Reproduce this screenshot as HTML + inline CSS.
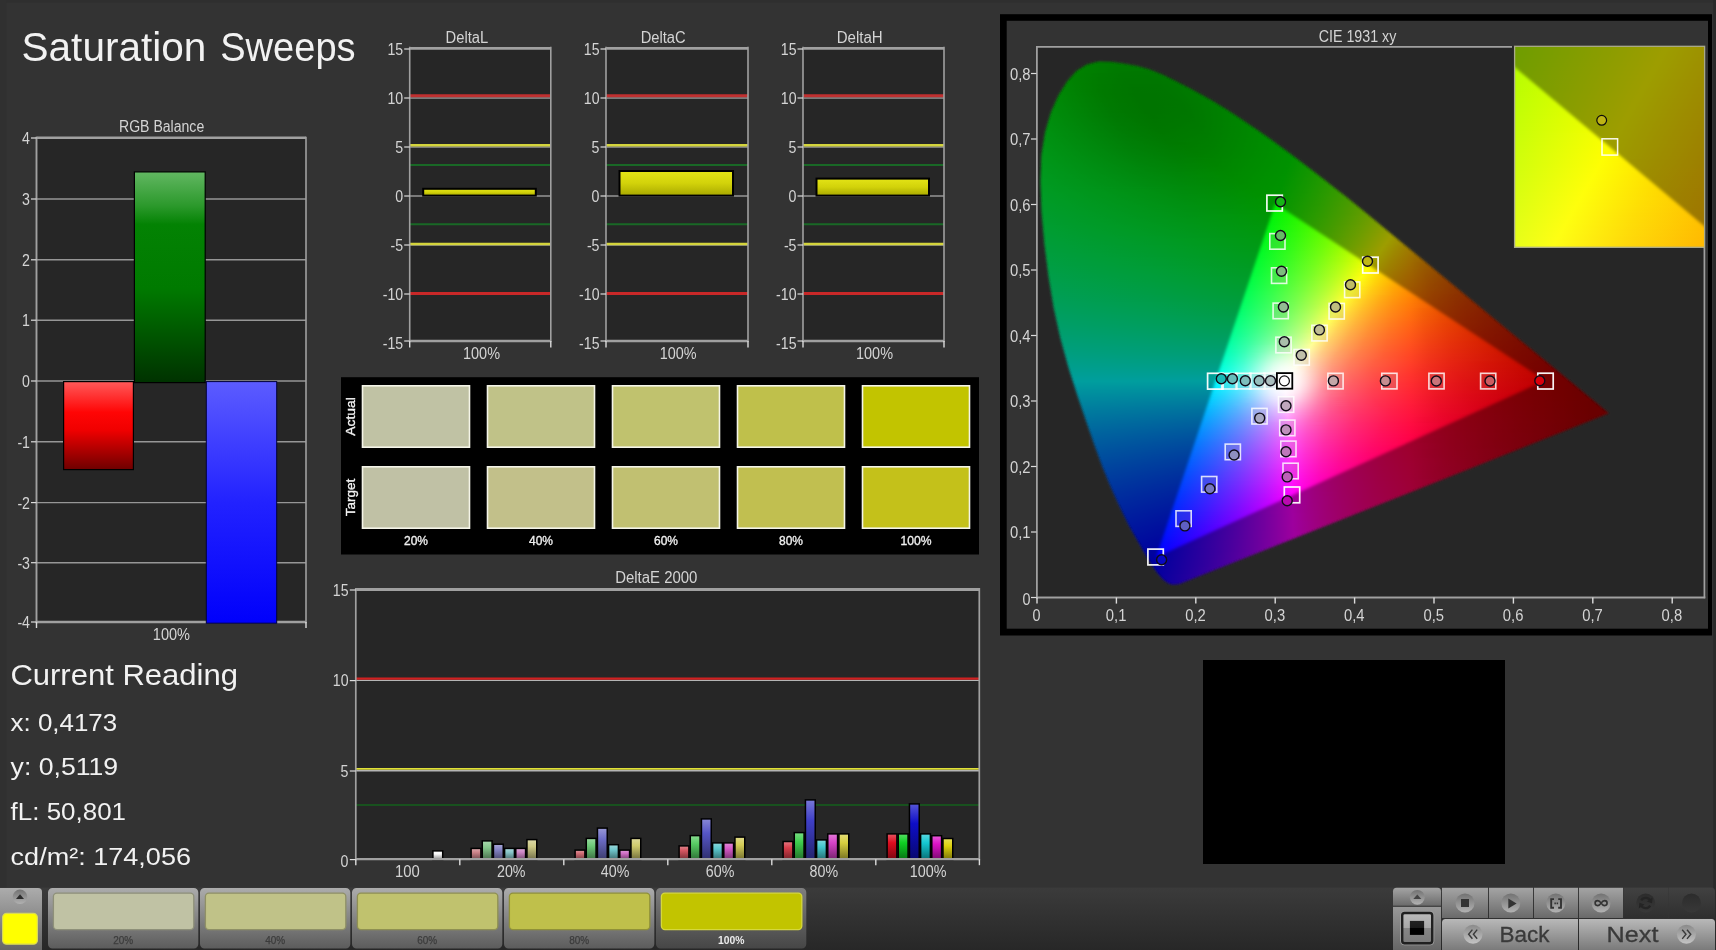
<!DOCTYPE html><html lang="en"><head><meta charset="utf-8"><title>Saturation Sweeps</title><style>html,body{margin:0;padding:0}body{width:1716px;height:950px;overflow:hidden;position:relative;background:#333333;font-family:"Liberation Sans", sans-serif}svg{position:absolute;left:0;top:0;will-change:transform}text{font-family:"Liberation Sans", sans-serif}.g{position:absolute;left:0;top:0;width:1716px;height:950px}.g i{position:absolute;display:block;height:1px}</style></head><body>
<svg width="1716" height="950" viewBox="0 0 1716 950"><defs><linearGradient id="gG" x1="0" y1="0" x2="0" y2="1"><stop offset="0" stop-color="#62b762"/><stop offset=".16" stop-color="#2c992c"/><stop offset=".25" stop-color="#038203"/><stop offset=".55" stop-color="#007a00"/><stop offset="1" stop-color="#003200"/></linearGradient><linearGradient id="gR" x1="0" y1="0" x2="0" y2="1"><stop offset="0" stop-color="#ff5a5a"/><stop offset=".35" stop-color="#ff0505"/><stop offset=".55" stop-color="#f00000"/><stop offset="1" stop-color="#6e0000"/></linearGradient><linearGradient id="gB" x1="0" y1="0" x2="0" y2="1"><stop offset="0" stop-color="#5c5cff"/><stop offset=".5" stop-color="#2222ff"/><stop offset="1" stop-color="#0000fb"/></linearGradient><linearGradient id="gY" x1="0" y1="0" x2="0" y2="1"><stop offset="0" stop-color="#e4e416"/><stop offset=".5" stop-color="#d2d20a"/><stop offset="1" stop-color="#a8a800"/></linearGradient><linearGradient id="b1" x1="0" y1="0" x2="0" y2="1"><stop offset="0" stop-color="#fcfcfc"/><stop offset=".35" stop-color="#fafafa"/><stop offset="1" stop-color="#8a8a8a"/></linearGradient><linearGradient id="b2" x1="0" y1="0" x2="0" y2="1"><stop offset="0" stop-color="#dca9ad"/><stop offset=".35" stop-color="#cd848a"/><stop offset="1" stop-color="#71494c"/></linearGradient><linearGradient id="b3" x1="0" y1="0" x2="0" y2="1"><stop offset="0" stop-color="#a9d9ae"/><stop offset=".35" stop-color="#85c88c"/><stop offset="1" stop-color="#496e4d"/></linearGradient><linearGradient id="b4" x1="0" y1="0" x2="0" y2="1"><stop offset="0" stop-color="#a9a9d7"/><stop offset=".35" stop-color="#8585c5"/><stop offset="1" stop-color="#49496d"/></linearGradient><linearGradient id="b5" x1="0" y1="0" x2="0" y2="1"><stop offset="0" stop-color="#abd7d9"/><stop offset=".35" stop-color="#87c5c9"/><stop offset="1" stop-color="#4a6d6e"/></linearGradient><linearGradient id="b6" x1="0" y1="0" x2="0" y2="1"><stop offset="0" stop-color="#dcaad7"/><stop offset=".35" stop-color="#cd86c5"/><stop offset="1" stop-color="#714a6d"/></linearGradient><linearGradient id="b7" x1="0" y1="0" x2="0" y2="1"><stop offset="0" stop-color="#dcd9a9"/><stop offset=".35" stop-color="#cdc985"/><stop offset="1" stop-color="#716e49"/></linearGradient><linearGradient id="b8" x1="0" y1="0" x2="0" y2="1"><stop offset="0" stop-color="#de989e"/><stop offset=".35" stop-color="#d06c75"/><stop offset="1" stop-color="#733c40"/></linearGradient><linearGradient id="b9" x1="0" y1="0" x2="0" y2="1"><stop offset="0" stop-color="#99daa0"/><stop offset=".35" stop-color="#6dca77"/><stop offset="1" stop-color="#3c6f41"/></linearGradient><linearGradient id="b10" x1="0" y1="0" x2="0" y2="1"><stop offset="0" stop-color="#9999d7"/><stop offset=".35" stop-color="#6d6dc6"/><stop offset="1" stop-color="#3c3c6d"/></linearGradient><linearGradient id="b11" x1="0" y1="0" x2="0" y2="1"><stop offset="0" stop-color="#9bd7da"/><stop offset=".35" stop-color="#70c6cb"/><stop offset="1" stop-color="#3e6d6f"/></linearGradient><linearGradient id="b12" x1="0" y1="0" x2="0" y2="1"><stop offset="0" stop-color="#de9ad7"/><stop offset=".35" stop-color="#d06fc6"/><stop offset="1" stop-color="#733d6d"/></linearGradient><linearGradient id="b13" x1="0" y1="0" x2="0" y2="1"><stop offset="0" stop-color="#deda99"/><stop offset=".35" stop-color="#d0cb6d"/><stop offset="1" stop-color="#736f3c"/></linearGradient><linearGradient id="b14" x1="0" y1="0" x2="0" y2="1"><stop offset="0" stop-color="#e18890"/><stop offset=".35" stop-color="#d45560"/><stop offset="1" stop-color="#742f35"/></linearGradient><linearGradient id="b15" x1="0" y1="0" x2="0" y2="1"><stop offset="0" stop-color="#89db91"/><stop offset=".35" stop-color="#56cb62"/><stop offset="1" stop-color="#2f7036"/></linearGradient><linearGradient id="b16" x1="0" y1="0" x2="0" y2="1"><stop offset="0" stop-color="#8989d7"/><stop offset=".35" stop-color="#5656c6"/><stop offset="1" stop-color="#2f2f6d"/></linearGradient><linearGradient id="b17" x1="0" y1="0" x2="0" y2="1"><stop offset="0" stop-color="#8bd7dc"/><stop offset=".35" stop-color="#5ac6cc"/><stop offset="1" stop-color="#316d70"/></linearGradient><linearGradient id="b18" x1="0" y1="0" x2="0" y2="1"><stop offset="0" stop-color="#e18ad7"/><stop offset=".35" stop-color="#d458c6"/><stop offset="1" stop-color="#74316d"/></linearGradient><linearGradient id="b19" x1="0" y1="0" x2="0" y2="1"><stop offset="0" stop-color="#e1dc89"/><stop offset=".35" stop-color="#d4cc56"/><stop offset="1" stop-color="#74702f"/></linearGradient><linearGradient id="b20" x1="0" y1="0" x2="0" y2="1"><stop offset="0" stop-color="#e37781"/><stop offset=".35" stop-color="#d73d4a"/><stop offset="1" stop-color="#762229"/></linearGradient><linearGradient id="b21" x1="0" y1="0" x2="0" y2="1"><stop offset="0" stop-color="#78dc83"/><stop offset=".35" stop-color="#3fcd4d"/><stop offset="1" stop-color="#23712b"/></linearGradient><linearGradient id="b22" x1="0" y1="0" x2="0" y2="1"><stop offset="0" stop-color="#7878d8"/><stop offset=".35" stop-color="#3f3fc7"/><stop offset="1" stop-color="#23236d"/></linearGradient><linearGradient id="b23" x1="0" y1="0" x2="0" y2="1"><stop offset="0" stop-color="#7cd8dd"/><stop offset=".35" stop-color="#43c7ce"/><stop offset="1" stop-color="#256d71"/></linearGradient><linearGradient id="b24" x1="0" y1="0" x2="0" y2="1"><stop offset="0" stop-color="#e37ad8"/><stop offset=".35" stop-color="#d742c7"/><stop offset="1" stop-color="#76246d"/></linearGradient><linearGradient id="b25" x1="0" y1="0" x2="0" y2="1"><stop offset="0" stop-color="#e3dd78"/><stop offset=".35" stop-color="#d7ce3f"/><stop offset="1" stop-color="#767123"/></linearGradient><linearGradient id="b26" x1="0" y1="0" x2="0" y2="1"><stop offset="0" stop-color="#e85562"/><stop offset=".35" stop-color="#de0c1e"/><stop offset="1" stop-color="#7a0710"/></linearGradient><linearGradient id="b27" x1="0" y1="0" x2="0" y2="1"><stop offset="0" stop-color="#56de64"/><stop offset=".35" stop-color="#0ed022"/><stop offset="1" stop-color="#087213"/></linearGradient><linearGradient id="b28" x1="0" y1="0" x2="0" y2="1"><stop offset="0" stop-color="#5656d8"/><stop offset=".35" stop-color="#0e0ec8"/><stop offset="1" stop-color="#08086e"/></linearGradient><linearGradient id="b29" x1="0" y1="0" x2="0" y2="1"><stop offset="0" stop-color="#5ad8e0"/><stop offset=".35" stop-color="#14c8d2"/><stop offset="1" stop-color="#0b6e74"/></linearGradient><linearGradient id="b30" x1="0" y1="0" x2="0" y2="1"><stop offset="0" stop-color="#e859d8"/><stop offset=".35" stop-color="#de12c8"/><stop offset="1" stop-color="#7a0a6e"/></linearGradient><linearGradient id="b31" x1="0" y1="0" x2="0" y2="1"><stop offset="0" stop-color="#e8e056"/><stop offset=".35" stop-color="#ded20e"/><stop offset="1" stop-color="#7a7408"/></linearGradient><linearGradient id="tbg" x1="0" y1="0" x2="0" y2="1"><stop offset="0" stop-color="#3b3b3b"/><stop offset="1" stop-color="#272727"/></linearGradient><linearGradient id="bt1" x1="0" y1="0" x2="0" y2="1"><stop offset="0" stop-color="#acacac"/><stop offset="1" stop-color="#5c5c5c"/></linearGradient><linearGradient id="bt2" x1="0" y1="0" x2="0" y2="1"><stop offset="0" stop-color="#7e7e7e"/><stop offset="1" stop-color="#464646"/></linearGradient><linearGradient id="bt3" x1="0" y1="0" x2="0" y2="1"><stop offset="0" stop-color="#a4a4a4"/><stop offset="1" stop-color="#6a6a6a"/></linearGradient><linearGradient id="bt4" x1="0" y1="0" x2="0" y2="1"><stop offset="0" stop-color="#b8b8b8"/><stop offset="1" stop-color="#787878"/></linearGradient><linearGradient id="bt5" x1="0" y1="0" x2="0" y2="1"><stop offset="0" stop-color="#414141"/><stop offset="1" stop-color="#2f2f2f"/></linearGradient><linearGradient id="bt6" x1="0" y1="0" x2="0" y2="1"><stop offset="0" stop-color="#999"/><stop offset="1" stop-color="#666"/></linearGradient><linearGradient id="ci1" x1="0" y1="0" x2="0" y2="1"><stop offset="0" stop-color="#727272"/><stop offset="1" stop-color="#b2b2b2"/></linearGradient><linearGradient id="ci2" x1="0" y1="0" x2="0" y2="1"><stop offset="0" stop-color="#8a8a8a"/><stop offset="1" stop-color="#c4c4c4"/></linearGradient><linearGradient id="ci3" x1="0" y1="0" x2="0" y2="1"><stop offset="0" stop-color="#2c2c2c"/><stop offset="1" stop-color="#383838"/></linearGradient><linearGradient id="stp" x1="0" y1="0" x2="0" y2="1"><stop offset="0" stop-color="#bcbcbc"/><stop offset=".5" stop-color="#a8a8a8"/><stop offset=".5" stop-color="#868686"/><stop offset="1" stop-color="#7a7a7a"/></linearGradient><linearGradient id="stq" x1="0" y1="0" x2="0" y2="1"><stop offset="0" stop-color="#222"/><stop offset=".5" stop-color="#1a1a1a"/><stop offset=".5" stop-color="#000"/><stop offset="1" stop-color="#000"/></linearGradient></defs>
<rect x="0" y="0" width="1716" height="2.6" fill="#2f2f2f"/>
<rect x="0" y="0" width="6.4" height="888" fill="#303030"/>
<text x="21.6" y="61.3" font-size="40.5" fill="#f2f2f2" textLength="184.6" lengthAdjust="spacingAndGlyphs">Saturation</text>
<text x="220.2" y="61.3" font-size="40.5" fill="#f2f2f2" textLength="135.4" lengthAdjust="spacingAndGlyphs">Sweeps</text>
<rect x="36.5" y="138" width="269.5" height="484" fill="#262626"/>
<line x1="36.5" y1="199" x2="306" y2="199" stroke="#969696" stroke-width="1.4"/>
<line x1="36.5" y1="259.8" x2="306" y2="259.8" stroke="#969696" stroke-width="1.4"/>
<line x1="36.5" y1="320.2" x2="306" y2="320.2" stroke="#969696" stroke-width="1.4"/>
<line x1="36.5" y1="381" x2="306" y2="381" stroke="#969696" stroke-width="1.4"/>
<line x1="36.5" y1="441.8" x2="306" y2="441.8" stroke="#969696" stroke-width="1.4"/>
<line x1="36.5" y1="502.6" x2="306" y2="502.6" stroke="#969696" stroke-width="1.4"/>
<line x1="36.5" y1="562.7" x2="306" y2="562.7" stroke="#969696" stroke-width="1.4"/>
<rect x="134.4" y="171.9" width="70.8" height="210.7" fill="url(#gG)" stroke="#000" stroke-width="1.2"/>
<rect x="63.6" y="381.6" width="69.8" height="88" fill="url(#gR)" stroke="#000" stroke-width="1.2"/>
<line x1="36.5" y1="136.8" x2="36.5" y2="623.2" stroke="#a0a0a0" stroke-width="1.9"/>
<line x1="306" y1="136.8" x2="306" y2="623.2" stroke="#a0a0a0" stroke-width="1.6"/>
<line x1="36.5" y1="137.7" x2="306" y2="137.7" stroke="#a0a0a0" stroke-width="2.4"/>
<line x1="36.5" y1="622" x2="306" y2="622" stroke="#a0a0a0" stroke-width="2.4"/>
<rect x="206.3" y="381.6" width="70.4" height="241.6" fill="url(#gB)" stroke="#00003c" stroke-width="1"/>
<line x1="31" y1="138" x2="36.5" y2="138" stroke="#dcdcdc" stroke-width="1.2"/>
<text x="30" y="144" font-size="15.8" fill="#d4d4d4" text-anchor="end" textLength="7.9" lengthAdjust="spacingAndGlyphs">4</text>
<line x1="31" y1="199" x2="36.5" y2="199" stroke="#dcdcdc" stroke-width="1.2"/>
<text x="30" y="205" font-size="15.8" fill="#d4d4d4" text-anchor="end" textLength="7.9" lengthAdjust="spacingAndGlyphs">3</text>
<line x1="31" y1="259.8" x2="36.5" y2="259.8" stroke="#dcdcdc" stroke-width="1.2"/>
<text x="30" y="265.8" font-size="15.8" fill="#d4d4d4" text-anchor="end" textLength="7.9" lengthAdjust="spacingAndGlyphs">2</text>
<line x1="31" y1="320.2" x2="36.5" y2="320.2" stroke="#dcdcdc" stroke-width="1.2"/>
<text x="30" y="326.2" font-size="15.8" fill="#d4d4d4" text-anchor="end" textLength="7.9" lengthAdjust="spacingAndGlyphs">1</text>
<line x1="31" y1="381" x2="36.5" y2="381" stroke="#dcdcdc" stroke-width="1.2"/>
<text x="30" y="387" font-size="15.8" fill="#d4d4d4" text-anchor="end" textLength="7.9" lengthAdjust="spacingAndGlyphs">0</text>
<line x1="31" y1="441.8" x2="36.5" y2="441.8" stroke="#dcdcdc" stroke-width="1.2"/>
<text x="30" y="447.8" font-size="15.8" fill="#d4d4d4" text-anchor="end" textLength="12.6" lengthAdjust="spacingAndGlyphs">-1</text>
<line x1="31" y1="502.6" x2="36.5" y2="502.6" stroke="#dcdcdc" stroke-width="1.2"/>
<text x="30" y="508.6" font-size="15.8" fill="#d4d4d4" text-anchor="end" textLength="12.6" lengthAdjust="spacingAndGlyphs">-2</text>
<line x1="31" y1="562.7" x2="36.5" y2="562.7" stroke="#dcdcdc" stroke-width="1.2"/>
<text x="30" y="568.7" font-size="15.8" fill="#d4d4d4" text-anchor="end" textLength="12.6" lengthAdjust="spacingAndGlyphs">-3</text>
<line x1="31" y1="622" x2="36.5" y2="622" stroke="#dcdcdc" stroke-width="1.2"/>
<text x="30" y="628" font-size="15.8" fill="#d4d4d4" text-anchor="end" textLength="12.6" lengthAdjust="spacingAndGlyphs">-4</text>
<line x1="36.5" y1="622" x2="36.5" y2="628" stroke="#dcdcdc" stroke-width="1.4"/>
<line x1="306" y1="622" x2="306" y2="628" stroke="#dcdcdc" stroke-width="1.4"/>
<text x="152.8" y="639.9" font-size="15.8" fill="#d4d4d4" textLength="37.2" lengthAdjust="spacingAndGlyphs">100%</text>
<text x="119" y="132" font-size="16" fill="#d4d4d4" textLength="85.2" lengthAdjust="spacingAndGlyphs">RGB Balance</text>
<rect x="409.7" y="48" width="141.1" height="293" fill="#262626"/>
<line x1="409.7" y1="98" x2="550.8" y2="98" stroke="#969696" stroke-width="1.4"/>
<line x1="409.7" y1="147" x2="550.8" y2="147" stroke="#969696" stroke-width="1.4"/>
<line x1="409.7" y1="196" x2="550.8" y2="196" stroke="#969696" stroke-width="1.4"/>
<line x1="409.7" y1="245" x2="550.8" y2="245" stroke="#969696" stroke-width="1.4"/>
<line x1="409.7" y1="294" x2="550.8" y2="294" stroke="#969696" stroke-width="1.4"/>
<line x1="409.7" y1="95.8" x2="550.8" y2="95.8" stroke="#c03030" stroke-width="3"/>
<line x1="409.7" y1="293.4" x2="550.8" y2="293.4" stroke="#c82828" stroke-width="3"/>
<line x1="409.7" y1="145.2" x2="550.8" y2="145.2" stroke="#d4d43c" stroke-width="2.6"/>
<line x1="409.7" y1="244" x2="550.8" y2="244" stroke="#d4d43c" stroke-width="2.6"/>
<line x1="409.7" y1="164.96" x2="550.8" y2="164.96" stroke="#196826" stroke-width="1.9"/>
<line x1="409.7" y1="224.24" x2="550.8" y2="224.24" stroke="#196826" stroke-width="1.9"/>
<rect x="423.2" y="188.8" width="112.6" height="6.8" fill="url(#gY)" stroke="#000" stroke-width="2"/>
<line x1="409.7" y1="46.8" x2="409.7" y2="342" stroke="#a0a0a0" stroke-width="1.6"/>
<line x1="550.8" y1="46.8" x2="550.8" y2="342" stroke="#a0a0a0" stroke-width="1.6"/>
<line x1="409.7" y1="48.4" x2="550.8" y2="48.4" stroke="#a0a0a0" stroke-width="2.8"/>
<line x1="409.7" y1="341" x2="550.8" y2="341" stroke="#a0a0a0" stroke-width="2.4"/>
<line x1="404.2" y1="49" x2="409.7" y2="49" stroke="#dcdcdc" stroke-width="1.2"/>
<text x="403.2" y="54.6" font-size="15.8" fill="#d4d4d4" text-anchor="end" textLength="15.7" lengthAdjust="spacingAndGlyphs">15</text>
<line x1="404.2" y1="98" x2="409.7" y2="98" stroke="#dcdcdc" stroke-width="1.2"/>
<text x="403.2" y="103.6" font-size="15.8" fill="#d4d4d4" text-anchor="end" textLength="15.7" lengthAdjust="spacingAndGlyphs">10</text>
<line x1="404.2" y1="147" x2="409.7" y2="147" stroke="#dcdcdc" stroke-width="1.2"/>
<text x="403.2" y="152.6" font-size="15.8" fill="#d4d4d4" text-anchor="end" textLength="7.9" lengthAdjust="spacingAndGlyphs">5</text>
<line x1="404.2" y1="196" x2="409.7" y2="196" stroke="#dcdcdc" stroke-width="1.2"/>
<text x="403.2" y="201.6" font-size="15.8" fill="#d4d4d4" text-anchor="end" textLength="7.9" lengthAdjust="spacingAndGlyphs">0</text>
<line x1="404.2" y1="245" x2="409.7" y2="245" stroke="#dcdcdc" stroke-width="1.2"/>
<text x="403.2" y="250.6" font-size="15.8" fill="#d4d4d4" text-anchor="end" textLength="12.6" lengthAdjust="spacingAndGlyphs">-5</text>
<line x1="404.2" y1="294" x2="409.7" y2="294" stroke="#dcdcdc" stroke-width="1.2"/>
<text x="403.2" y="299.6" font-size="15.8" fill="#d4d4d4" text-anchor="end" textLength="20.4" lengthAdjust="spacingAndGlyphs">-10</text>
<line x1="404.2" y1="341" x2="409.7" y2="341" stroke="#dcdcdc" stroke-width="1.2"/>
<text x="403.2" y="348.6" font-size="15.8" fill="#d4d4d4" text-anchor="end" textLength="20.4" lengthAdjust="spacingAndGlyphs">-15</text>
<line x1="409.7" y1="341" x2="409.7" y2="347.5" stroke="#dcdcdc" stroke-width="1.4"/>
<line x1="550.8" y1="341" x2="550.8" y2="347.5" stroke="#dcdcdc" stroke-width="1.4"/>
<text x="463" y="358.8" font-size="15.8" fill="#d4d4d4" textLength="37.0" lengthAdjust="spacingAndGlyphs">100%</text>
<text x="445.6" y="43.2" font-size="16" fill="#d4d4d4" textLength="42.6" lengthAdjust="spacingAndGlyphs">DeltaL</text>
<rect x="606" y="48" width="142" height="293" fill="#262626"/>
<line x1="606" y1="98" x2="748" y2="98" stroke="#969696" stroke-width="1.4"/>
<line x1="606" y1="147" x2="748" y2="147" stroke="#969696" stroke-width="1.4"/>
<line x1="606" y1="196" x2="748" y2="196" stroke="#969696" stroke-width="1.4"/>
<line x1="606" y1="245" x2="748" y2="245" stroke="#969696" stroke-width="1.4"/>
<line x1="606" y1="294" x2="748" y2="294" stroke="#969696" stroke-width="1.4"/>
<line x1="606" y1="95.8" x2="748" y2="95.8" stroke="#c03030" stroke-width="3"/>
<line x1="606" y1="293.4" x2="748" y2="293.4" stroke="#c82828" stroke-width="3"/>
<line x1="606" y1="145.2" x2="748" y2="145.2" stroke="#d4d43c" stroke-width="2.6"/>
<line x1="606" y1="244" x2="748" y2="244" stroke="#d4d43c" stroke-width="2.6"/>
<line x1="606" y1="164.96" x2="748" y2="164.96" stroke="#196826" stroke-width="1.9"/>
<line x1="606" y1="224.24" x2="748" y2="224.24" stroke="#196826" stroke-width="1.9"/>
<rect x="619.5" y="171" width="113.5" height="24.6" fill="url(#gY)" stroke="#000" stroke-width="2"/>
<line x1="606" y1="46.8" x2="606" y2="342" stroke="#a0a0a0" stroke-width="1.6"/>
<line x1="748" y1="46.8" x2="748" y2="342" stroke="#a0a0a0" stroke-width="1.6"/>
<line x1="606" y1="48.4" x2="748" y2="48.4" stroke="#a0a0a0" stroke-width="2.8"/>
<line x1="606" y1="341" x2="748" y2="341" stroke="#a0a0a0" stroke-width="2.4"/>
<line x1="600.5" y1="49" x2="606" y2="49" stroke="#dcdcdc" stroke-width="1.2"/>
<text x="599.5" y="54.6" font-size="15.8" fill="#d4d4d4" text-anchor="end" textLength="15.7" lengthAdjust="spacingAndGlyphs">15</text>
<line x1="600.5" y1="98" x2="606" y2="98" stroke="#dcdcdc" stroke-width="1.2"/>
<text x="599.5" y="103.6" font-size="15.8" fill="#d4d4d4" text-anchor="end" textLength="15.7" lengthAdjust="spacingAndGlyphs">10</text>
<line x1="600.5" y1="147" x2="606" y2="147" stroke="#dcdcdc" stroke-width="1.2"/>
<text x="599.5" y="152.6" font-size="15.8" fill="#d4d4d4" text-anchor="end" textLength="7.9" lengthAdjust="spacingAndGlyphs">5</text>
<line x1="600.5" y1="196" x2="606" y2="196" stroke="#dcdcdc" stroke-width="1.2"/>
<text x="599.5" y="201.6" font-size="15.8" fill="#d4d4d4" text-anchor="end" textLength="7.9" lengthAdjust="spacingAndGlyphs">0</text>
<line x1="600.5" y1="245" x2="606" y2="245" stroke="#dcdcdc" stroke-width="1.2"/>
<text x="599.5" y="250.6" font-size="15.8" fill="#d4d4d4" text-anchor="end" textLength="12.6" lengthAdjust="spacingAndGlyphs">-5</text>
<line x1="600.5" y1="294" x2="606" y2="294" stroke="#dcdcdc" stroke-width="1.2"/>
<text x="599.5" y="299.6" font-size="15.8" fill="#d4d4d4" text-anchor="end" textLength="20.4" lengthAdjust="spacingAndGlyphs">-10</text>
<line x1="600.5" y1="341" x2="606" y2="341" stroke="#dcdcdc" stroke-width="1.2"/>
<text x="599.5" y="348.6" font-size="15.8" fill="#d4d4d4" text-anchor="end" textLength="20.4" lengthAdjust="spacingAndGlyphs">-15</text>
<line x1="606" y1="341" x2="606" y2="347.5" stroke="#dcdcdc" stroke-width="1.4"/>
<line x1="748" y1="341" x2="748" y2="347.5" stroke="#dcdcdc" stroke-width="1.4"/>
<text x="659.7" y="358.8" font-size="15.8" fill="#d4d4d4" textLength="36.8" lengthAdjust="spacingAndGlyphs">100%</text>
<text x="640.7" y="43.2" font-size="16" fill="#d4d4d4" textLength="45.0" lengthAdjust="spacingAndGlyphs">DeltaC</text>
<rect x="803" y="48" width="141" height="293" fill="#262626"/>
<line x1="803" y1="98" x2="944" y2="98" stroke="#969696" stroke-width="1.4"/>
<line x1="803" y1="147" x2="944" y2="147" stroke="#969696" stroke-width="1.4"/>
<line x1="803" y1="196" x2="944" y2="196" stroke="#969696" stroke-width="1.4"/>
<line x1="803" y1="245" x2="944" y2="245" stroke="#969696" stroke-width="1.4"/>
<line x1="803" y1="294" x2="944" y2="294" stroke="#969696" stroke-width="1.4"/>
<line x1="803" y1="95.8" x2="944" y2="95.8" stroke="#c03030" stroke-width="3"/>
<line x1="803" y1="293.4" x2="944" y2="293.4" stroke="#c82828" stroke-width="3"/>
<line x1="803" y1="145.2" x2="944" y2="145.2" stroke="#d4d43c" stroke-width="2.6"/>
<line x1="803" y1="244" x2="944" y2="244" stroke="#d4d43c" stroke-width="2.6"/>
<line x1="803" y1="164.96" x2="944" y2="164.96" stroke="#196826" stroke-width="1.9"/>
<line x1="803" y1="224.24" x2="944" y2="224.24" stroke="#196826" stroke-width="1.9"/>
<rect x="816.5" y="178.6" width="112.5" height="17" fill="url(#gY)" stroke="#000" stroke-width="2"/>
<line x1="803" y1="46.8" x2="803" y2="342" stroke="#a0a0a0" stroke-width="1.6"/>
<line x1="944" y1="46.8" x2="944" y2="342" stroke="#a0a0a0" stroke-width="1.6"/>
<line x1="803" y1="48.4" x2="944" y2="48.4" stroke="#a0a0a0" stroke-width="2.8"/>
<line x1="803" y1="341" x2="944" y2="341" stroke="#a0a0a0" stroke-width="2.4"/>
<line x1="797.5" y1="49" x2="803" y2="49" stroke="#dcdcdc" stroke-width="1.2"/>
<text x="796.5" y="54.6" font-size="15.8" fill="#d4d4d4" text-anchor="end" textLength="15.7" lengthAdjust="spacingAndGlyphs">15</text>
<line x1="797.5" y1="98" x2="803" y2="98" stroke="#dcdcdc" stroke-width="1.2"/>
<text x="796.5" y="103.6" font-size="15.8" fill="#d4d4d4" text-anchor="end" textLength="15.7" lengthAdjust="spacingAndGlyphs">10</text>
<line x1="797.5" y1="147" x2="803" y2="147" stroke="#dcdcdc" stroke-width="1.2"/>
<text x="796.5" y="152.6" font-size="15.8" fill="#d4d4d4" text-anchor="end" textLength="7.9" lengthAdjust="spacingAndGlyphs">5</text>
<line x1="797.5" y1="196" x2="803" y2="196" stroke="#dcdcdc" stroke-width="1.2"/>
<text x="796.5" y="201.6" font-size="15.8" fill="#d4d4d4" text-anchor="end" textLength="7.9" lengthAdjust="spacingAndGlyphs">0</text>
<line x1="797.5" y1="245" x2="803" y2="245" stroke="#dcdcdc" stroke-width="1.2"/>
<text x="796.5" y="250.6" font-size="15.8" fill="#d4d4d4" text-anchor="end" textLength="12.6" lengthAdjust="spacingAndGlyphs">-5</text>
<line x1="797.5" y1="294" x2="803" y2="294" stroke="#dcdcdc" stroke-width="1.2"/>
<text x="796.5" y="299.6" font-size="15.8" fill="#d4d4d4" text-anchor="end" textLength="20.4" lengthAdjust="spacingAndGlyphs">-10</text>
<line x1="797.5" y1="341" x2="803" y2="341" stroke="#dcdcdc" stroke-width="1.2"/>
<text x="796.5" y="348.6" font-size="15.8" fill="#d4d4d4" text-anchor="end" textLength="20.4" lengthAdjust="spacingAndGlyphs">-15</text>
<line x1="803" y1="341" x2="803" y2="347.5" stroke="#dcdcdc" stroke-width="1.4"/>
<line x1="944" y1="341" x2="944" y2="347.5" stroke="#dcdcdc" stroke-width="1.4"/>
<text x="856" y="358.8" font-size="15.8" fill="#d4d4d4" textLength="37.0" lengthAdjust="spacingAndGlyphs">100%</text>
<text x="836.7" y="43.2" font-size="16" fill="#d4d4d4" textLength="46.0" lengthAdjust="spacingAndGlyphs">DeltaH</text>
<rect x="341" y="377.2" width="638" height="177.3" fill="#000"/>
<rect x="362.5" y="385.8" width="107" height="61.4" fill="#c0c2a4" stroke="#f4f4e8" stroke-width="1.6"/>
<rect x="362.5" y="466.8" width="107" height="61.4" fill="#c0c1a5" stroke="#f4f4e8" stroke-width="1.6"/>
<text x="416" y="545.2" font-size="13.6" fill="#f0f0f0" text-anchor="middle" textLength="24.0" lengthAdjust="spacingAndGlyphs" stroke="#f0f0f0" stroke-width=".35">20%</text>
<rect x="487.5" y="385.8" width="107" height="61.4" fill="#c0c288" stroke="#f4f4e8" stroke-width="1.6"/>
<rect x="487.5" y="466.8" width="107" height="61.4" fill="#c2c08a" stroke="#f4f4e8" stroke-width="1.6"/>
<text x="541" y="545.2" font-size="13.6" fill="#f0f0f0" text-anchor="middle" textLength="24.0" lengthAdjust="spacingAndGlyphs" stroke="#f0f0f0" stroke-width=".35">40%</text>
<rect x="612.5" y="385.8" width="107" height="61.4" fill="#c0c26e" stroke="#f4f4e8" stroke-width="1.6"/>
<rect x="612.5" y="466.8" width="107" height="61.4" fill="#c1c071" stroke="#f4f4e8" stroke-width="1.6"/>
<text x="666" y="545.2" font-size="13.6" fill="#f0f0f0" text-anchor="middle" textLength="24.0" lengthAdjust="spacingAndGlyphs" stroke="#f0f0f0" stroke-width=".35">60%</text>
<rect x="737.5" y="385.8" width="107" height="61.4" fill="#bfc04b" stroke="#f4f4e8" stroke-width="1.6"/>
<rect x="737.5" y="466.8" width="107" height="61.4" fill="#c1bf50" stroke="#f4f4e8" stroke-width="1.6"/>
<text x="791" y="545.2" font-size="13.6" fill="#f0f0f0" text-anchor="middle" textLength="24.0" lengthAdjust="spacingAndGlyphs" stroke="#f0f0f0" stroke-width=".35">80%</text>
<rect x="862.5" y="385.8" width="107" height="61.4" fill="#c2c400" stroke="#f4f4e8" stroke-width="1.6"/>
<rect x="862.5" y="466.8" width="107" height="61.4" fill="#c4c11a" stroke="#f4f4e8" stroke-width="1.6"/>
<text x="916" y="545.2" font-size="13.6" fill="#f0f0f0" text-anchor="middle" textLength="31.0" lengthAdjust="spacingAndGlyphs" stroke="#f0f0f0" stroke-width=".35">100%</text>
<text transform="translate(355.2,416.5) rotate(-90)" text-anchor="middle" font-size="13.6" fill="#f4f4f4" stroke="#f4f4f4" stroke-width=".35" textLength="38.5" lengthAdjust="spacingAndGlyphs">Actual</text>
<text transform="translate(355.2,497.5) rotate(-90)" text-anchor="middle" font-size="13.6" fill="#f4f4f4" stroke="#f4f4f4" stroke-width=".35" textLength="37.5" lengthAdjust="spacingAndGlyphs">Target</text>
<rect x="355.8" y="589.6" width="623.5" height="269.6" fill="#262626"/>
<line x1="355.8" y1="680.4" x2="979.3" y2="680.4" stroke="#b4b4b4" stroke-width="1.4"/>
<line x1="355.8" y1="770.8" x2="979.3" y2="770.8" stroke="#b4b4b4" stroke-width="1.4"/>
<line x1="355.8" y1="678.6" x2="979.3" y2="678.6" stroke="#d02020" stroke-width="2.2"/>
<line x1="355.8" y1="768.9" x2="979.3" y2="768.9" stroke="#e0e038" stroke-width="1.7"/>
<line x1="355.8" y1="805" x2="979.3" y2="805" stroke="#15611d" stroke-width="1.6"/>
<rect x="432.9" y="850.9" width="9.8" height="8.7" fill="url(#b1)" stroke="#000" stroke-width="1.5"/>
<rect x="471.1" y="848.4" width="9.8" height="11.2" fill="url(#b2)" stroke="#000" stroke-width="1.5"/>
<rect x="482.27" y="840.9" width="9.8" height="18.7" fill="url(#b3)" stroke="#000" stroke-width="1.5"/>
<rect x="493.44" y="844.2" width="9.8" height="15.4" fill="url(#b4)" stroke="#000" stroke-width="1.5"/>
<rect x="504.61" y="848.4" width="9.8" height="11.2" fill="url(#b5)" stroke="#000" stroke-width="1.5"/>
<rect x="515.78" y="848.4" width="9.8" height="11.2" fill="url(#b6)" stroke="#000" stroke-width="1.5"/>
<rect x="526.95" y="839.6" width="9.8" height="20" fill="url(#b7)" stroke="#000" stroke-width="1.5"/>
<rect x="575.1" y="850.1" width="9.8" height="9.5" fill="url(#b8)" stroke="#000" stroke-width="1.5"/>
<rect x="586.27" y="838.4" width="9.8" height="21.2" fill="url(#b9)" stroke="#000" stroke-width="1.5"/>
<rect x="597.44" y="828.1" width="9.8" height="31.5" fill="url(#b10)" stroke="#000" stroke-width="1.5"/>
<rect x="608.61" y="844.7" width="9.8" height="14.9" fill="url(#b11)" stroke="#000" stroke-width="1.5"/>
<rect x="619.78" y="850.1" width="9.8" height="9.5" fill="url(#b12)" stroke="#000" stroke-width="1.5"/>
<rect x="630.95" y="838.4" width="9.8" height="21.2" fill="url(#b13)" stroke="#000" stroke-width="1.5"/>
<rect x="679.1" y="845.9" width="9.8" height="13.7" fill="url(#b14)" stroke="#000" stroke-width="1.5"/>
<rect x="690.27" y="835.6" width="9.8" height="24" fill="url(#b15)" stroke="#000" stroke-width="1.5"/>
<rect x="701.44" y="818.9" width="9.8" height="40.7" fill="url(#b16)" stroke="#000" stroke-width="1.5"/>
<rect x="712.61" y="842.9" width="9.8" height="16.7" fill="url(#b17)" stroke="#000" stroke-width="1.5"/>
<rect x="723.78" y="842.9" width="9.8" height="16.7" fill="url(#b18)" stroke="#000" stroke-width="1.5"/>
<rect x="734.95" y="837.1" width="9.8" height="22.5" fill="url(#b19)" stroke="#000" stroke-width="1.5"/>
<rect x="783.1" y="841.5" width="9.8" height="18.1" fill="url(#b20)" stroke="#000" stroke-width="1.5"/>
<rect x="794.27" y="832.6" width="9.8" height="27" fill="url(#b21)" stroke="#000" stroke-width="1.5"/>
<rect x="805.44" y="799.9" width="9.8" height="59.7" fill="url(#b22)" stroke="#000" stroke-width="1.5"/>
<rect x="816.61" y="839.9" width="9.8" height="19.7" fill="url(#b23)" stroke="#000" stroke-width="1.5"/>
<rect x="827.78" y="833.9" width="9.8" height="25.7" fill="url(#b24)" stroke="#000" stroke-width="1.5"/>
<rect x="838.95" y="833.9" width="9.8" height="25.7" fill="url(#b25)" stroke="#000" stroke-width="1.5"/>
<rect x="887.1" y="833.9" width="9.8" height="25.7" fill="url(#b26)" stroke="#000" stroke-width="1.5"/>
<rect x="898.27" y="833.9" width="9.8" height="25.7" fill="url(#b27)" stroke="#000" stroke-width="1.5"/>
<rect x="909.44" y="803.9" width="9.8" height="55.7" fill="url(#b28)" stroke="#000" stroke-width="1.5"/>
<rect x="920.61" y="833.9" width="9.8" height="25.7" fill="url(#b29)" stroke="#000" stroke-width="1.5"/>
<rect x="931.78" y="835.7" width="9.8" height="23.9" fill="url(#b30)" stroke="#000" stroke-width="1.5"/>
<rect x="942.95" y="838.5" width="9.8" height="21.1" fill="url(#b31)" stroke="#000" stroke-width="1.5"/>
<line x1="355.8" y1="588" x2="355.8" y2="860.2" stroke="#a0a0a0" stroke-width="1.7"/>
<line x1="979.3" y1="588" x2="979.3" y2="860.2" stroke="#a0a0a0" stroke-width="1.7"/>
<line x1="355.8" y1="589.6" x2="979.3" y2="589.6" stroke="#a0a0a0" stroke-width="3"/>
<line x1="355.8" y1="859.2" x2="979.3" y2="859.2" stroke="#a0a0a0" stroke-width="2.3"/>
<line x1="349.8" y1="590" x2="355.8" y2="590" stroke="#dcdcdc" stroke-width="1.2"/>
<text x="348.5" y="595.7" font-size="15.8" fill="#d4d4d4" text-anchor="end" textLength="15.7" lengthAdjust="spacingAndGlyphs">15</text>
<line x1="349.8" y1="680.6" x2="355.8" y2="680.6" stroke="#dcdcdc" stroke-width="1.2"/>
<text x="348.5" y="686.3" font-size="15.8" fill="#d4d4d4" text-anchor="end" textLength="15.7" lengthAdjust="spacingAndGlyphs">10</text>
<line x1="349.8" y1="771" x2="355.8" y2="771" stroke="#dcdcdc" stroke-width="1.2"/>
<text x="348.5" y="776.7" font-size="15.8" fill="#d4d4d4" text-anchor="end" textLength="7.9" lengthAdjust="spacingAndGlyphs">5</text>
<line x1="349.8" y1="859.6" x2="355.8" y2="859.6" stroke="#dcdcdc" stroke-width="1.2"/>
<text x="348.5" y="867" font-size="15.8" fill="#d4d4d4" text-anchor="end" textLength="7.9" lengthAdjust="spacingAndGlyphs">0</text>
<line x1="355.8" y1="859.2" x2="355.8" y2="865.2" stroke="#dcdcdc" stroke-width="1.4"/>
<line x1="459.8" y1="859.2" x2="459.8" y2="865.2" stroke="#dcdcdc" stroke-width="1.4"/>
<line x1="563.8" y1="859.2" x2="563.8" y2="865.2" stroke="#dcdcdc" stroke-width="1.4"/>
<line x1="667.8" y1="859.2" x2="667.8" y2="865.2" stroke="#dcdcdc" stroke-width="1.4"/>
<line x1="771.8" y1="859.2" x2="771.8" y2="865.2" stroke="#dcdcdc" stroke-width="1.4"/>
<line x1="875.8" y1="859.2" x2="875.8" y2="865.2" stroke="#dcdcdc" stroke-width="1.4"/>
<line x1="979.4" y1="859.2" x2="979.4" y2="865.2" stroke="#dcdcdc" stroke-width="1.4"/>
<text x="395" y="877" font-size="15.8" fill="#d4d4d4" textLength="24.8" lengthAdjust="spacingAndGlyphs">100</text>
<text x="497" y="877" font-size="15.8" fill="#d4d4d4" textLength="28.5" lengthAdjust="spacingAndGlyphs">20%</text>
<text x="600.8" y="877" font-size="15.8" fill="#d4d4d4" textLength="28.5" lengthAdjust="spacingAndGlyphs">40%</text>
<text x="705.8" y="877" font-size="15.8" fill="#d4d4d4" textLength="28.5" lengthAdjust="spacingAndGlyphs">60%</text>
<text x="809.6" y="877" font-size="15.8" fill="#d4d4d4" textLength="28.5" lengthAdjust="spacingAndGlyphs">80%</text>
<text x="909.7" y="877" font-size="15.8" fill="#d4d4d4" textLength="36.7" lengthAdjust="spacingAndGlyphs">100%</text>
<text x="615.2" y="583" font-size="16" fill="#d4d4d4" textLength="82.2" lengthAdjust="spacingAndGlyphs">DeltaE 2000</text>
<text x="10.4" y="685.4" font-size="29.4" fill="#f2f2f2" textLength="227.6" lengthAdjust="spacingAndGlyphs">Current Reading</text>
<text x="10.6" y="731.3" font-size="24.8" fill="#f2f2f2" textLength="106.6" lengthAdjust="spacingAndGlyphs">x: 0,4173</text>
<text x="10.6" y="774.7" font-size="24.8" fill="#f2f2f2" textLength="107.6" lengthAdjust="spacingAndGlyphs">y: 0,5119</text>
<text x="10.6" y="820.3" font-size="24.8" fill="#f2f2f2" textLength="115.4" lengthAdjust="spacingAndGlyphs">fL: 50,801</text>
<text x="10.6" y="864.7" font-size="24.8" fill="#f2f2f2" textLength="180.4" lengthAdjust="spacingAndGlyphs">cd/m²: 174,056</text>
<rect x="1203" y="660" width="302" height="204" fill="#000"/>
<rect x="1713.2" y="0" width="3" height="950" fill="#2a2a2a"/>
<rect x="1000" y="14.2" width="712" height="621.3" fill="#000"/>
<rect x="1006.7" y="20.8" width="701.3" height="607.9" fill="#333333"/>
<rect x="1037" y="46.5" width="668" height="551" fill="#262626"/>
<rect x="0" y="887.6" width="1713.2" height="63" fill="url(#tbg)"/>
<path d="M-5 888H38A4 4 0 0 1 42 892V958H-5V888Z" fill="url(#bt1)"/>
<circle cx="20" cy="896.8" r="7.3" fill="url(#ci1)"/>
<path d="M16 899L24 899L20 894.2Z" fill="#2c2c2c"/>
<rect x="2.6" y="913.4" width="34.8" height="30.8" rx="4" fill="#ff0" stroke="#d8d85a" stroke-width="1.2"/>
<path d="M52.5 888H193.8A4.5 4.5 0 0 1 198.3 892.5V944.1A4.5 4.5 0 0 1 193.8 948.6H52.5A4.5 4.5 0 0 1 48 944.1V892.5A4.5 4.5 0 0 1 52.5 888Z" fill="url(#bt1)"/>
<rect x="53.4" y="893.2" width="140.4" height="36.4" rx="3.5" fill="#c0c2a4" stroke="#8e9079" stroke-width="1.3"/>
<text x="123.2" y="943.8" font-size="10.8" fill="#3c3c3c" text-anchor="middle" textLength="20.0" lengthAdjust="spacingAndGlyphs" stroke="#3c3c3c" stroke-width=".25">20%</text>
<path d="M204.5 888H345.8A4.5 4.5 0 0 1 350.3 892.5V944.1A4.5 4.5 0 0 1 345.8 948.6H204.5A4.5 4.5 0 0 1 200 944.1V892.5A4.5 4.5 0 0 1 204.5 888Z" fill="url(#bt1)"/>
<rect x="205.4" y="893.2" width="140.4" height="36.4" rx="3.5" fill="#c0c288" stroke="#8f9066" stroke-width="1.3"/>
<text x="275.2" y="943.8" font-size="10.8" fill="#3c3c3c" text-anchor="middle" textLength="20.0" lengthAdjust="spacingAndGlyphs" stroke="#3c3c3c" stroke-width=".25">40%</text>
<path d="M356.5 888H497.8A4.5 4.5 0 0 1 502.3 892.5V944.1A4.5 4.5 0 0 1 497.8 948.6H356.5A4.5 4.5 0 0 1 352 944.1V892.5A4.5 4.5 0 0 1 356.5 888Z" fill="url(#bt1)"/>
<rect x="357.4" y="893.2" width="140.4" height="36.4" rx="3.5" fill="#c0c26e" stroke="#8f9052" stroke-width="1.3"/>
<text x="427.2" y="943.8" font-size="10.8" fill="#3c3c3c" text-anchor="middle" textLength="20.0" lengthAdjust="spacingAndGlyphs" stroke="#3c3c3c" stroke-width=".25">60%</text>
<path d="M508.5 888H649.8A4.5 4.5 0 0 1 654.3 892.5V944.1A4.5 4.5 0 0 1 649.8 948.6H508.5A4.5 4.5 0 0 1 504 944.1V892.5A4.5 4.5 0 0 1 508.5 888Z" fill="url(#bt1)"/>
<rect x="509.4" y="893.2" width="140.4" height="36.4" rx="3.5" fill="#bfc04b" stroke="#909138" stroke-width="1.3"/>
<text x="579.2" y="943.8" font-size="10.8" fill="#3c3c3c" text-anchor="middle" textLength="20.0" lengthAdjust="spacingAndGlyphs" stroke="#3c3c3c" stroke-width=".25">80%</text>
<path d="M660.5 888H801.8A4.5 4.5 0 0 1 806.3 892.5V944.1A4.5 4.5 0 0 1 801.8 948.6H660.5A4.5 4.5 0 0 1 656 944.1V892.5A4.5 4.5 0 0 1 660.5 888Z" fill="url(#bt2)"/>
<rect x="661.4" y="893.2" width="140.4" height="36.4" rx="3.5" fill="#c2c400" stroke="#d6d83c" stroke-width="1.3"/>
<text x="731.2" y="943.8" font-size="10.8" fill="#ececec" text-anchor="middle" font-weight="bold" textLength="26.5" lengthAdjust="spacingAndGlyphs">100%</text>
<path d="M1396.5 887.8H1437.5A3.5 3.5 0 0 1 1441 891.3V906H1393V891.3A3.5 3.5 0 0 1 1396.5 887.8Z" fill="url(#bt3)"/>
<rect x="1393" y="906.6" width="48" height="44" fill="url(#bt6)"/>
<line x1="1393" y1="906.2" x2="1441" y2="906.2" stroke="#3a3a3a" stroke-width="1"/>
<circle cx="1417.3" cy="897.3" r="7.4" fill="url(#ci1)"/>
<path d="M1413.3 899L1421.3 899L1417.3 894.4Z" fill="#444"/>
<rect x="1400.6" y="911.4" width="33.2" height="33.4" rx="3.5" fill="none" stroke="#a0a0a0" stroke-width="1"/>
<rect x="1402.2" y="913" width="30" height="30.2" rx="2.5" fill="url(#stp)" stroke="#202020" stroke-width="2.4"/>
<rect x="1409.9" y="920.9" width="14.2" height="14" fill="url(#stq)"/>
<rect x="1442" y="887.8" width="46" height="30.2" fill="url(#bt3)"/>
<circle cx="1465" cy="903" r="9.5" fill="url(#ci1)"/>
<rect x="1489" y="887.8" width="44" height="30.2" fill="url(#bt3)"/>
<circle cx="1510.8" cy="903" r="9.5" fill="url(#ci1)"/>
<rect x="1534" y="887.8" width="44" height="30.2" fill="url(#bt3)"/>
<circle cx="1555.8" cy="903" r="9.5" fill="url(#ci1)"/>
<rect x="1579" y="887.8" width="44" height="30.2" fill="url(#bt3)"/>
<circle cx="1601.1" cy="903" r="9.5" fill="url(#ci1)"/>
<rect x="1624" y="887.8" width="44" height="30.2" fill="url(#bt5)"/>
<circle cx="1645.7" cy="903" r="9.5" fill="url(#ci3)"/>
<path d="M1669 887.8H1711.5A3.5 3.5 0 0 1 1715 891.3V918H1669V887.8Z" fill="url(#bt5)"/>
<circle cx="1691.5" cy="903" r="9.5" fill="url(#ci3)"/>
<rect x="1461" y="899" width="8" height="8" fill="#333"/>
<path d="M1508.3 898.6L1516.6 903.4L1508.3 908.4Z" fill="#333"/>
<path d="M1554 899.1H1551.2V907.8H1554M1558.2 899.1H1561V907.8H1558.2" fill="none" stroke="#333" stroke-width="1.9"/>
<path d="M1554.4 902.6h1.5v1.6h-1.5zM1556.6 902.6h1.5v1.6h-1.5z" fill="#333"/>
<path d="M1601.1 903.1C1599.8 901.1 1598.6 900.6 1597.6 900.6A2.5 2.5 0 0 0 1597.6 905.6C1598.6 905.6 1599.8 905.1 1601.1 903.1C1602.4 901.1 1603.6 900.6 1604.6 900.6A2.5 2.5 0 0 1 1604.6 905.6C1603.6 905.6 1602.4 905.1 1601.1 903.1Z" fill="none" stroke="#333" stroke-width="1.6"/>
<path d="M1650.6 901.4A5.2 5.2 0 0 0 1641.2 900.4M1640.8 904.6A5.2 5.2 0 0 0 1650.2 905.6" fill="none" stroke="#242424" stroke-width="2.2"/>
<path d="M1652.6 897.6L1652 903.2L1646.8 901.4ZM1638.8 908.4L1639.4 902.8L1644.6 904.6Z" fill="#242424"/>
<path d="M1445.5 919.1H1578V951.1H1442V922.6A3.5 3.5 0 0 1 1445.5 919.1Z" fill="url(#bt4)"/>
<path d="M1579 919.1H1711.5A3.5 3.5 0 0 1 1715 922.6V951.1H1579V919.1Z" fill="url(#bt4)"/>
<circle cx="1473" cy="934.2" r="9.5" fill="url(#ci2)"/>
<circle cx="1686.4" cy="934.3" r="9.5" fill="url(#ci2)"/>
<path d="M1472.4 929.6L1468.6 934.2L1472.4 938.8M1477.2 929.6L1473.4 934.2L1477.2 938.8" fill="none" stroke="#3a3a3a" stroke-width="1.4"/>
<path d="M1682.2 929.7L1686 934.3L1682.2 938.9M1687 929.7L1690.8 934.3L1687 938.9" fill="none" stroke="#3a3a3a" stroke-width="1.4"/>
<text x="1499.6" y="941.8" font-size="21.2" fill="#3a3a3a" textLength="50.0" lengthAdjust="spacingAndGlyphs" stroke="#3a3a3a" stroke-width=".3">Back</text>
<text x="1606.6" y="941.8" font-size="21.2" fill="#3a3a3a" textLength="51.8" lengthAdjust="spacingAndGlyphs" stroke="#3a3a3a" stroke-width=".3">Next</text></svg>
<div class="g"><i style="top:60px;left:1093px;width:24px;background:linear-gradient(90deg,#0c0 0,#00c700 24px)"></i><i style="top:61px;left:1089px;width:35px;background:linear-gradient(90deg,#00cd00 0,#00c600 35px)"></i><i style="top:62px;left:1085px;width:45px;background:linear-gradient(90deg,#00ce00 0,#00c500 45px)"></i><i style="top:63px;left:1082px;width:54px;background:linear-gradient(90deg,#00cf00 0,#00c700 28px,#00c400 54px)"></i><i style="top:64px;left:1081px;width:60px;background:linear-gradient(90deg,#00d000 0,#00c600 32px,#00c400 60px)"></i><i style="top:65px;left:1079px;width:65px;background:linear-gradient(90deg,#00d000 0,#00c500 34px,#00c400 65px)"></i><i style="top:66px;left:1078px;width:70px;background:linear-gradient(90deg,#00d000 0,#00c500 37px,#00c400 70px)"></i><i style="top:67px;left:1076px;width:76px;background:linear-gradient(90deg,#00d100 0,#00c400 40px,#00c400 76px)"></i><i style="top:68px;left:1074px;width:81px;background:linear-gradient(90deg,#00d200 0,#00c400 43px,#00c300 81px)"></i><i style="top:69px;left:1073px;width:84px;background:linear-gradient(90deg,#00d200 0,#00c300 45px,#00c300 84px)"></i><i style="top:70px;left:1072px;width:88px;background:linear-gradient(90deg,#00d200 0,#00c300 47px,#00c300 88px)"></i><i style="top:71px;left:1071px;width:91px;background:linear-gradient(90deg,#00d300 0,#00c200 49px,#00c100 70px,#00c300 91px)"></i><i style="top:72px;left:1070px;width:95px;background:linear-gradient(90deg,#00d301 0,#00c200 51px,#00c000 73px,#00c400 95px)"></i><i style="top:73px;left:1069px;width:98px;background:linear-gradient(90deg,#00d401 0,#00c700 29px,#00c100 53px,#00c000 75px,#00c400 98px)"></i><i style="top:74px;left:1068px;width:101px;background:linear-gradient(90deg,#00d402 0,#00c700 30px,#00c100 54px,#00c000 77px,#00c400 101px)"></i><i style="top:75px;left:1068px;width:103px;background:linear-gradient(90deg,#00d402 0,#00c700 31px,#00c000 55px,#00bf00 79px,#00c400 103px)"></i><i style="top:76px;left:1067px;width:106px;background:linear-gradient(90deg,#00d403 0,#00c700 32px,#00c000 57px,#00bf00 81px,#00c400 106px)"></i><i style="top:77px;left:1066px;width:109px;background:linear-gradient(90deg,#00d503 0,#00c600 33px,#00c000 59px,#00bf00 84px,#00c400 109px)"></i><i style="top:78px;left:1065px;width:112px;background:linear-gradient(90deg,#00d504 0,#00c600 34px,#00bf00 60px,#00bf00 86px,#00c400 112px)"></i><i style="top:79px;left:1064px;width:115px;background:linear-gradient(90deg,#00d604 0,#00c600 35px,#00bf00 62px,#00be00 88px,#00c400 115px)"></i><i style="top:80px;left:1063px;width:118px;background:linear-gradient(90deg,#00d605 0,#00c600 37px,#00bf00 64px,#00be00 90px,#00c500 118px)"></i><i style="top:81px;left:1063px;width:120px;background:linear-gradient(90deg,#00d605 0,#00c600 37px,#00be00 65px,#00be00 92px,#00c500 120px)"></i><i style="top:82px;left:1062px;width:123px;background:linear-gradient(90deg,#00d705 0,#00c600 38px,#00be00 67px,#00be00 94px,#00c500 123px)"></i><i style="top:83px;left:1061px;width:126px;background:linear-gradient(90deg,#00d806 0,#00c900 31px,#00be00 68px,#00be00 96px,#00c600 126px)"></i><i style="top:84px;left:1061px;width:128px;background:linear-gradient(90deg,#00d806 0,#00c500 40px,#00bd00 69px,#00bd00 97px,#00c600 128px)"></i><i style="top:85px;left:1060px;width:131px;background:linear-gradient(90deg,#00d807 0,#00c500 41px,#00bd00 71px,#00bd00 100px,#00c600 131px)"></i><i style="top:86px;left:1059px;width:134px;background:linear-gradient(90deg,#00d907 0,#00c500 43px,#00bd00 73px,#00bd00 102px,#00c700 134px)"></i><i style="top:87px;left:1059px;width:136px;background:linear-gradient(90deg,#00d907 0,#00c500 43px,#00bc00 74px,#00bd00 104px,#00c700 136px)"></i><i style="top:88px;left:1058px;width:138px;background:linear-gradient(90deg,#00da08 0,#00c500 44px,#00bc00 75px,#00bd00 105px,#00c700 138px)"></i><i style="top:89px;left:1058px;width:140px;background:linear-gradient(90deg,#00da08 0,#00c400 45px,#00bc00 76px,#00bd00 106px,#00c800 140px)"></i><i style="top:90px;left:1057px;width:143px;background:linear-gradient(90deg,#00da09 0,#00c400 46px,#00bc00 78px,#00bd00 109px,#00c800 143px)"></i><i style="top:91px;left:1056px;width:146px;background:linear-gradient(90deg,#00db09 0,#00c400 47px,#00bc00 79px,#00bd00 111px,#00c900 146px)"></i><i style="top:92px;left:1056px;width:148px;background:linear-gradient(90deg,#00db0a 0,#00c400 48px,#00bc00 80px,#00bd00 112px,#00c900 148px)"></i><i style="top:93px;left:1055px;width:151px;background:linear-gradient(90deg,#00dc0a 0,#00c401 49px,#0b0 82px,#00bd00 114px,#00ca00 151px)"></i><i style="top:94px;left:1055px;width:152px;background:linear-gradient(90deg,#00dc0a 0,#00c401 49px,#0b0 82px,#00bd00 115px,#00ca00 152px)"></i><i style="top:95px;left:1054px;width:155px;background:linear-gradient(90deg,#00dd0b 0,#00c401 51px,#0b0 84px,#00bd00 117px,#00cb00 155px)"></i><i style="top:96px;left:1054px;width:157px;background:linear-gradient(90deg,#00dd0b 0,#00c401 51px,#0b0 85px,#00bd00 118px,#0c0 157px)"></i><i style="top:97px;left:1053px;width:160px;background:linear-gradient(90deg,#00de0c 0,#00c401 53px,#0b0 87px,#00bd00 121px,#0c0 160px)"></i><i style="top:98px;left:1053px;width:162px;background:linear-gradient(90deg,#00de0c 0,#00c401 54px,#0b0 88px,#00bd00 122px,#00cd00 162px)"></i><i style="top:99px;left:1052px;width:164px;background:linear-gradient(90deg,#00de0d 0,#00c402 55px,#0b0 89px,#00bd00 124px,#00cd00 164px)"></i><i style="top:100px;left:1052px;width:166px;background:linear-gradient(90deg,#00df0d 0,#00c402 55px,#0b0 90px,#00be00 125px,#00ce00 166px)"></i><i style="top:101px;left:1051px;width:169px;background:linear-gradient(90deg,#00df0e 0,#00c402 56px,#0b0 91px,#00be00 127px,#00cf00 169px)"></i><i style="top:102px;left:1051px;width:170px;background:linear-gradient(90deg,#00e00e 0,#00c402 57px,#0b0 92px,#00be00 127px,#00cf00 170px)"></i><i style="top:103px;left:1051px;width:172px;background:linear-gradient(90deg,#00e00e 0,#00c403 58px,#0b0 93px,#00be00 129px,#00d000 172px)"></i><i style="top:104px;left:1050px;width:175px;background:linear-gradient(90deg,#00e10f 0,#00c403 59px,#0b0 95px,#00be00 131px,#00d100 175px)"></i><i style="top:105px;left:1050px;width:176px;background:linear-gradient(90deg,#00e10f 0,#00c403 59px,#0b0 95px,#00be00 131px,#00d100 176px)"></i><i style="top:106px;left:1049px;width:179px;background:linear-gradient(90deg,#00e210 0,#00c403 61px,#0b0 97px,#00bf00 134px,#00d200 179px)"></i><i style="top:107px;left:1049px;width:180px;background:linear-gradient(90deg,#00e210 0,#00c404 61px,#0b0 97px,#00be00 134px,#00d200 180px)"></i><i style="top:108px;left:1048px;width:183px;background:linear-gradient(90deg,#00e311 0,#00c404 63px,#0b0 99px,#00bf00 136px,#00d300 183px)"></i><i style="top:109px;left:1048px;width:185px;background:linear-gradient(90deg,#00e311 0,#00c404 63px,#0b0 100px,#00bf00 138px,#00d400 185px)"></i><i style="top:110px;left:1047px;width:187px;background:linear-gradient(90deg,#00e412 0,#00c504 64px,#0b0 101px,#00bf00 139px,#00d400 187px)"></i><i style="top:111px;left:1047px;width:189px;background:linear-gradient(90deg,#00e412 0,#00c404 65px,#0b0 102px,#00bf00 140px,#00d500 189px)"></i><i style="top:112px;left:1047px;width:190px;background:linear-gradient(90deg,#00e413 0,#00c404 66px,#0b0 103px,#00c000 141px,#00d500 190px)"></i><i style="top:113px;left:1047px;width:192px;background:linear-gradient(90deg,#00e413 0,#00c505 66px,#0b0 103px,#00c000 142px,#00d600 192px)"></i><i style="top:114px;left:1046px;width:194px;background:linear-gradient(90deg,#00e514 0,#00c505 68px,#00bc00 105px,#00c000 144px,#00d700 194px)"></i><i style="top:115px;left:1046px;width:196px;background:linear-gradient(90deg,#00e514 0,#00c505 68px,#00bc00 106px,#00c100 145px,#00d700 196px)"></i><i style="top:116px;left:1046px;width:197px;background:linear-gradient(90deg,#00e614 0,#00c505 68px,#00bc00 106px,#00c100 145px,#00d800 197px)"></i><i style="top:117px;left:1045px;width:200px;background:linear-gradient(90deg,#00e615 0,#00c506 70px,#00bc00 108px,#00c100 147px,#00d900 200px)"></i><i style="top:118px;left:1045px;width:201px;background:linear-gradient(90deg,#00e715 0,#00c606 70px,#00bc00 108px,#00c200 148px,#00d900 201px)"></i><i style="top:119px;left:1045px;width:203px;background:linear-gradient(90deg,#00e716 0,#00c606 71px,#00bd00 109px,#00c200 149px,#00da00 203px)"></i><i style="top:120px;left:1044px;width:205px;background:linear-gradient(90deg,#00e816 0,#00c606 72px,#00bd00 110px,#00c200 150px,#00da00 205px)"></i><i style="top:121px;left:1044px;width:207px;background:linear-gradient(90deg,#00e817 0,#00c606 73px,#00bd00 111px,#00c200 151px,#00db00 207px)"></i><i style="top:122px;left:1044px;width:208px;background:linear-gradient(90deg,#00e817 0,#00c607 74px,#00bd00 112px,#00c300 152px,#00dc00 208px)"></i><i style="top:123px;left:1044px;width:210px;background:linear-gradient(90deg,#00e818 0,#00c707 74px,#00be00 112px,#00c300 153px,#0d0 210px)"></i><i style="top:124px;left:1043px;width:212px;background:linear-gradient(90deg,#00e918 0,#00c707 75px,#00be00 114px,#00c400 155px,#0d0 212px)"></i><i style="top:125px;left:1043px;width:213px;background:linear-gradient(90deg,#00e919 0,#00c707 76px,#00be00 114px,#00c400 155px,#00de00 213px)"></i><i style="top:126px;left:1043px;width:215px;background:linear-gradient(90deg,#00ea19 0,#00c808 76px,#00bf00 115px,#00c400 156px,#00de00 215px)"></i><i style="top:127px;left:1042px;width:217px;background:linear-gradient(90deg,#00ea1a 0,#00c808 78px,#00bf00 117px,#00c500 158px,#00df00 217px)"></i><i style="top:128px;left:1042px;width:219px;background:linear-gradient(90deg,#00eb1a 0,#00c808 78px,#00bf00 117px,#00c500 158px,#00e000 219px)"></i><i style="top:129px;left:1042px;width:220px;background:linear-gradient(90deg,#00eb1b 0,#00c808 79px,#00c000 118px,#00c600 159px,#00e000 220px)"></i><i style="top:130px;left:1042px;width:222px;background:linear-gradient(90deg,#00eb1b 0,#00c809 80px,#00c001 119px,#00c600 160px,#00e100 222px)"></i><i style="top:131px;left:1041px;width:224px;background:linear-gradient(90deg,#00ec1c 0,#00c909 81px,#00c001 120px,#00c700 162px,#00e100 224px)"></i><i style="top:132px;left:1041px;width:226px;background:linear-gradient(90deg,#00ec1c 0,#00c909 82px,#00c101 121px,#00c700 163px,#00e200 226px)"></i><i style="top:133px;left:1041px;width:227px;background:linear-gradient(90deg,#00ed1d 0,#00ca09 82px,#00c101 121px,#00c700 163px,#00e300 227px)"></i><i style="top:134px;left:1041px;width:228px;background:linear-gradient(90deg,#00ed1d 0,#00ca0a 83px,#00c201 122px,#00c800 164px,#00e300 228px)"></i><i style="top:135px;left:1041px;width:230px;background:linear-gradient(90deg,#00ed1d 0,#00ca0a 83px,#00c202 122px,#00c800 164px,#00e400 230px)"></i><i style="top:136px;left:1041px;width:231px;background:linear-gradient(90deg,#00ed1e 0,#00ca0a 84px,#00c202 123px,#00c900 165px,#00e400 231px)"></i><i style="top:137px;left:1040px;width:234px;background:linear-gradient(90deg,#00ee1f 0,#00cb0a 85px,#00c302 125px,#00c900 167px,#00e500 234px)"></i><i style="top:138px;left:1040px;width:235px;background:linear-gradient(90deg,#00ee1f 0,#00cb0b 86px,#00c302 125px,#00ca00 167px,#00e600 235px)"></i><i style="top:139px;left:1040px;width:236px;background:linear-gradient(90deg,#00ef1f 0,#00cc0b 86px,#00c402 126px,#00ca00 168px,#00e600 236px)"></i><i style="top:140px;left:1040px;width:238px;background:linear-gradient(90deg,#00ef20 0,#00cc0b 87px,#00c403 126px,#00cb00 169px,#00e700 238px)"></i><i style="top:141px;left:1040px;width:239px;background:linear-gradient(90deg,#00ef20 0,#00cd0c 87px,#00c503 127px,#00cb00 169px,#00e700 239px)"></i><i style="top:142px;left:1040px;width:241px;background:linear-gradient(90deg,#00ef21 0,#00cd0c 88px,#00c503 127px,#00c600 142px,#0c0 170px,#00e800 241px)"></i><i style="top:143px;left:1039px;width:243px;background:linear-gradient(90deg,#00f021 0,#00cd0c 89px,#00c603 129px,#00c600 145px,#0c0 172px,#00e900 243px)"></i><i style="top:144px;left:1039px;width:244px;background:linear-gradient(90deg,#00f022 0,#00ce0c 90px,#00c604 129px,#00c700 146px,#00cd00 172px,#00e900 244px)"></i><i style="top:145px;left:1039px;width:246px;background:linear-gradient(90deg,#00f122 0,#00ce0d 90px,#00c704 130px,#00c800 148px,#00cd00 173px,#00ea00 246px)"></i><i style="top:146px;left:1039px;width:247px;background:linear-gradient(90deg,#00f123 0,#00cf0d 91px,#00c704 131px,#00c800 149px,#00cd00 173px,#00ea00 247px)"></i><i style="top:147px;left:1039px;width:248px;background:linear-gradient(90deg,#00f123 0,#00cf0d 91px,#00c804 131px,#00c900 151px,#00ce00 174px,#00eb00 248px)"></i><i style="top:148px;left:1039px;width:250px;background:linear-gradient(90deg,#00f124 0,#00cf0d 92px,#00c805 132px,#00ca00 152px,#00cf00 175px,#00eb00 250px)"></i><i style="top:149px;left:1039px;width:251px;background:linear-gradient(90deg,#00f224 0,#00d00e 92px,#00c905 132px,#00ca00 154px,#00cf00 175px,#00ec00 251px)"></i><i style="top:150px;left:1038px;width:254px;background:linear-gradient(90deg,#00f225 0,#00d00e 94px,#00ca05 134px,#00cb00 156px,#00d000 177px,#00ec00 254px)"></i><i style="top:151px;left:1038px;width:255px;background:linear-gradient(90deg,#00f226 0,#00d10e 94px,#00ca05 134px,#0c0 158px,#00d000 177px,#00ed00 255px)"></i><i style="top:152px;left:1038px;width:256px;background:linear-gradient(90deg,#00f326 0,#00d10f 95px,#00cb06 135px,#0c0 159px,#00d100 178px,#02ed00 256px)"></i><i style="top:153px;left:1038px;width:258px;background:linear-gradient(90deg,#00f326 0,#00d20f 95px,#00cb06 135px,#00cd00 161px,#00d100 178px,#00ec00 254px,#05ee00 258px)"></i><i style="top:154px;left:1038px;width:259px;background:linear-gradient(90deg,#00f327 0,#00d20f 96px,#00cc06 136px,#00ce00 162px,#00d200 179px,#00ec00 253px,#06ee00 259px)"></i><i style="top:155px;left:1038px;width:260px;background:linear-gradient(90deg,#00f327 0,#00d310 96px,#00cc07 136px,#00cf00 164px,#00d200 179px,#00ec00 253px,#08ee00 260px)"></i><i style="top:156px;left:1038px;width:262px;background:linear-gradient(90deg,#00f428 0,#00d310 97px,#00cd07 137px,#00cf00 165px,#00d300 179px,#00ec00 253px,#0bef00 262px)"></i><i style="top:157px;left:1038px;width:263px;background:linear-gradient(90deg,#00f428 0,#00d410 98px,#00ce07 138px,#00d000 167px,#00d300 180px,#00ec00 252px,#0cef00 263px)"></i><i style="top:158px;left:1038px;width:264px;background:linear-gradient(90deg,#00f429 0,#00d411 98px,#00ce07 138px,#00d400 180px,#00ec00 252px,#0ef000 264px)"></i><i style="top:159px;left:1038px;width:266px;background:linear-gradient(90deg,#00f429 0,#00d511 99px,#00cf07 139px,#00d200 170px,#00ec00 252px,#11f000 266px)"></i><i style="top:160px;left:1038px;width:267px;background:linear-gradient(90deg,#00f52a 0,#00d511 99px,#00cf08 139px,#00d300 172px,#00ec00 251px,#13f100 267px)"></i><i style="top:161px;left:1038px;width:268px;background:linear-gradient(90deg,#00f52a 0,#00d611 100px,#00d008 140px,#00d300 173px,#00ec00 251px,#15f100 268px)"></i><i style="top:162px;left:1038px;width:269px;background:linear-gradient(90deg,#00f52b 0,#00d612 100px,#00d008 140px,#00d400 175px,#00ec00 251px,#16f100 269px)"></i><i style="top:163px;left:1038px;width:271px;background:linear-gradient(90deg,#00f52c 0,#00d712 101px,#00d109 141px,#00d500 176px,#00ec00 250px,#1af200 271px)"></i><i style="top:164px;left:1038px;width:272px;background:linear-gradient(90deg,#00f62c 0,#00d713 101px,#00d209 141px,#00d600 178px,#00ec00 250px,#1bf200 272px)"></i><i style="top:165px;left:1038px;width:273px;background:linear-gradient(90deg,#00f62d 0,#00d813 102px,#00d209 142px,#00d600 179px,#00ec00 250px,#1df300 273px)"></i><i style="top:166px;left:1038px;width:275px;background:linear-gradient(90deg,#00f62d 0,#00d813 103px,#00d309 143px,#00d700 181px,#00ec00 249px,#20f300 275px)"></i><i style="top:167px;left:1038px;width:276px;background:linear-gradient(90deg,#00f62e 0,#00d914 103px,#00d40a 143px,#00d800 182px,#00ec00 249px,#22f300 276px)"></i><i style="top:168px;left:1038px;width:277px;background:linear-gradient(90deg,#00f62e 0,#00da14 103px,#00d40a 143px,#00d900 184px,#00ec00 249px,#24f400 277px)"></i><i style="top:169px;left:1038px;width:279px;background:linear-gradient(90deg,#00f72f 0,#00da15 102px,#00d50c 139px,#00da00 185px,#00ec00 248px,#28f400 279px)"></i><i style="top:170px;left:1038px;width:280px;background:linear-gradient(90deg,#00f72f 0,#00db15 102px,#00d50c 139px,#00da00 187px,#00ec00 248px,#2af400 280px)"></i><i style="top:171px;left:1038px;width:281px;background:linear-gradient(90deg,#00f730 0,#00db15 103px,#00d60c 140px,#00db00 188px,#00ec00 248px,#2cf500 281px)"></i><i style="top:172px;left:1038px;width:283px;background:linear-gradient(90deg,#00f730 0,#00dc16 103px,#00d70d 140px,#00dc00 190px,#00ec00 247px,#2ff500 283px)"></i><i style="top:173px;left:1038px;width:284px;background:linear-gradient(90deg,#00f731 0,#00dc16 104px,#00d70d 140px,#0d0 191px,#00ec00 247px,#31f500 284px)"></i><i style="top:174px;left:1038px;width:285px;background:linear-gradient(90deg,#00f831 0,#00dd17 104px,#00d80e 140px,#0d0 193px,#00ed00 247px,#33f600 285px)"></i><i style="top:175px;left:1038px;width:286px;background:linear-gradient(90deg,#00f832 0,#00de17 105px,#00d90e 140px,#00de00 194px,#00ec00 246px,#35f600 286px)"></i><i style="top:176px;left:1038px;width:288px;background:linear-gradient(90deg,#00f832 0,#00de18 105px,#00d90f 141px,#00df00 196px,#00ed00 246px,#39f600 288px)"></i><i style="top:177px;left:1038px;width:289px;background:linear-gradient(90deg,#00f833 0,#00df18 106px,#00da0f 141px,#00db08 168px,#00e000 198px,#00ed00 246px,#3bf700 289px)"></i><i style="top:178px;left:1038px;width:290px;background:linear-gradient(90deg,#00f833 0,#00df18 106px,#00da10 141px,#00db08 169px,#00e000 199px,#00ed00 245px,#3df700 290px)"></i><i style="top:179px;left:1038px;width:292px;background:linear-gradient(90deg,#00f934 0,#00e019 106px,#00db10 141px,#00dc09 170px,#00e100 201px,#00ed00 245px,#41f700 292px)"></i><i style="top:180px;left:1038px;width:293px;background:linear-gradient(90deg,#00f935 0,#00e019 107px,#00dc10 142px,#00dd09 171px,#00e200 202px,#00ed00 245px,#43f700 293px)"></i><i style="top:181px;left:1038px;width:294px;background:linear-gradient(90deg,#00f935 0,#00e11a 107px,#00dc11 142px,#00dd09 171px,#00e300 204px,#00ed00 244px,#1cf200 266px,#46f800 294px)"></i><i style="top:182px;left:1038px;width:295px;background:linear-gradient(90deg,#00f936 0,#00e11a 108px,#0d1 142px,#00de09 172px,#00e300 205px,#00ed00 244px,#20f300 268px,#48f800 295px)"></i><i style="top:183px;left:1038px;width:297px;background:linear-gradient(90deg,#00f936 0,#00e21b 108px,#00dd12 142px,#00de0a 173px,#00e400 207px,#00ed00 244px,#23f300 270px,#4cf800 297px)"></i><i style="top:184px;left:1038px;width:298px;background:linear-gradient(90deg,#00f937 0,#00e21b 109px,#00de12 143px,#00df0a 174px,#00e500 208px,#00ed00 243px,#21f300 268px,#4ef800 298px)"></i><i style="top:185px;left:1038px;width:299px;background:linear-gradient(90deg,#00fa37 0,#00e31b 109px,#00df13 143px,#00df0a 174px,#00e600 210px,#00ed00 243px,#24f400 270px,#50f900 299px)"></i><i style="top:186px;left:1038px;width:301px;background:linear-gradient(90deg,#00fa38 0,#00e31c 110px,#00df13 143px,#00e00b 175px,#00e600 211px,#0e0 243px,#28f400 272px,#55f900 301px)"></i><i style="top:187px;left:1038px;width:302px;background:linear-gradient(90deg,#00fa39 0,#00e014 143px,#00e10b 176px,#00e700 213px,#0e0 242px,#25f400 270px,#57f900 302px)"></i><i style="top:188px;left:1038px;width:303px;background:linear-gradient(90deg,#00fa39 0,#00e41d 111px,#00e014 144px,#00e10b 177px,#00e700 214px,#0e0 242px,#29f400 272px,#59f900 303px)"></i><i style="top:189px;left:1038px;width:304px;background:linear-gradient(90deg,#00fa3a 0,#00e114 144px,#00e20c 177px,#00e800 216px,#0e0 242px,#2bf500 273px,#5cf900 304px)"></i><i style="top:190px;left:1038px;width:306px;background:linear-gradient(90deg,#00fa3a 0,#00e215 144px,#00e20c 178px,#00e900 217px,#0e0 241px,#2af500 272px,#60fa00 306px)"></i><i style="top:191px;left:1038px;width:307px;background:linear-gradient(90deg,#00fa3b 0,#00e216 144px,#00e30c 179px,#00ea00 219px,#0e0 241px,#2cf500 273px,#63fa00 307px)"></i><i style="top:192px;left:1038px;width:308px;background:linear-gradient(90deg,#00fb3b 0,#00e316 145px,#00e40c 180px,#00ea00 220px,#0e0 241px,#2ef500 274px,#65fa00 308px)"></i><i style="top:193px;left:1038px;width:309px;background:linear-gradient(90deg,#00fb3c 0,#00e316 145px,#00e40d 180px,#00eb00 222px,#00ef00 240px,#2ef500 273px,#68fa00 309px)"></i><i style="top:194px;left:1038px;width:311px;background:linear-gradient(90deg,#00fb3d 0,#00e417 145px,#00e50d 181px,#00eb00 223px,#00ef00 240px,#31f600 275px,#6cfb00 311px)"></i><i style="top:195px;left:1038px;width:312px;background:linear-gradient(90deg,#00fb3d 0,#00e418 145px,#00e50d 182px,#00ec00 225px,#00ef00 240px,#33f600 276px,#6ffb00 312px)"></i><i style="top:196px;left:1038px;width:313px;background:linear-gradient(90deg,#00fb3e 0,#00e518 145px,#00e60d 186px,#00ec00 226px,#00ef00 239px,#31f600 274px,#72fb00 313px)"></i><i style="top:197px;left:1038px;width:314px;background:linear-gradient(90deg,#00fb3e 0,#00e518 146px,#00e70d 187px,#00ed00 228px,#00ef00 239px,#35f600 276px,#75fb00 314px)"></i><i style="top:198px;left:1038px;width:316px;background:linear-gradient(90deg,#00fb3f 0,#00e619 146px,#00e70e 187px,#0e0 229px,#00ef00 239px,#39f600 278px,#79fb00 316px)"></i><i style="top:199px;left:1038px;width:317px;background:linear-gradient(90deg,#00fb40 0,#00e61a 146px,#00e80e 187px,#00ef00 238px,#36f600 276px,#7cfb00 317px)"></i><i style="top:200px;left:1038px;width:318px;background:linear-gradient(90deg,#00fc40 0,#00e71a 146px,#00e80f 187px,#00f000 238px,#3af700 278px,#7ffb00 318px)"></i><i style="top:201px;left:1038px;width:319px;background:linear-gradient(90deg,#00fc41 0,#00e71b 147px,#00e80f 187px,#00f000 238px,#3cf700 279px,#82fc00 319px)"></i><i style="top:202px;left:1038px;width:321px;background:linear-gradient(90deg,#00fc41 0,#00e81b 147px,#00e910 187px,#00f000 237px,#3cf700 278px,#87fc00 321px)"></i><i style="top:203px;left:1038px;width:322px;background:linear-gradient(90deg,#00fc42 0,#00e81c 147px,#00e910 187px,#00f000 237px,#3ef700 279px,#8afc00 322px)"></i><i style="top:204px;left:1038px;width:323px;background:linear-gradient(90deg,#00fc43 0,#00e91c 147px,#00ea11 187px,#00f101 237px,#40f700 280px,#8dfc00 323px)"></i><i style="top:205px;left:1038px;width:324px;background:linear-gradient(90deg,#00fc43 0,#00ea1d 147px,#00ea12 187px,#00f102 236px,#3ff700 279px,#90fc00 324px)"></i><i style="top:206px;left:1038px;width:326px;background:linear-gradient(90deg,#00fc44 0,#00ea1d 148px,#00eb12 188px,#00f102 236px,#43f800 281px,#95fc00 326px)"></i><i style="top:207px;left:1038px;width:327px;background:linear-gradient(90deg,#00fc45 0,#00ea1e 148px,#00eb12 188px,#00f103 236px,#0bf200 244px,#46f800 282px,#98fc00 327px)"></i><i style="top:208px;left:1038px;width:328px;background:linear-gradient(90deg,#00fc45 0,#00eb1f 148px,#00eb13 187px,#00f104 235px,#0df300 245px,#45f800 281px,#9bfc00 328px)"></i><i style="top:209px;left:1038px;width:329px;background:linear-gradient(90deg,#00fc46 0,#00eb1f 148px,#00ec14 188px,#00f104 235px,#11f300 247px,#47f800 282px,#9efd00 329px)"></i><i style="top:210px;left:1038px;width:330px;background:linear-gradient(90deg,#00fd46 0,#00ec20 149px,#00ec14 188px,#00f205 235px,#13f400 248px,#4af800 283px,#a1fd00 330px)"></i><i style="top:211px;left:1038px;width:332px;background:linear-gradient(90deg,#00fd47 0,#00ec20 149px,#00ed15 188px,#00f206 234px,#16f400 250px,#4bf800 283px,#78fb00 308px,#a7fd00 332px)"></i><i style="top:212px;left:1038px;width:333px;background:linear-gradient(90deg,#00fd48 0,#00ed21 149px,#00ed15 188px,#00f206 234px,#18f400 251px,#4df900 284px,#7bfb00 309px,#aafd00 333px)"></i><i style="top:213px;left:1038px;width:334px;background:linear-gradient(90deg,#00fd48 0,#00ed22 149px,#00ed16 188px,#00f207 234px,#1cf500 253px,#50f900 285px,#7dfb00 310px,#adfd00 334px)"></i><i style="top:214px;left:1038px;width:335px;background:linear-gradient(90deg,#00fd49 0,#0e2 149px,#00f208 233px,#1ef500 254px,#4ff900 284px,#7ffb00 310px,#b1fd00 335px)"></i><i style="top:215px;left:1038px;width:336px;background:linear-gradient(90deg,#00fd4a 0,#00ee23 150px,#00f309 233px,#22f600 256px,#52f900 285px,#82fb00 311px,#b4fd00 336px)"></i><i style="top:216px;left:1038px;width:338px;background:linear-gradient(90deg,#00fd4a 0,#00ee23 150px,#00f309 233px,#24f600 257px,#54f900 286px,#85fc00 312px,#bafd00 338px)"></i><i style="top:217px;left:1038px;width:339px;background:linear-gradient(90deg,#00fd4b 0,#00ef24 150px,#00f30a 232px,#28f600 259px,#55f900 286px,#88fc00 313px,#befd00 339px)"></i><i style="top:218px;left:1039px;width:339px;background:linear-gradient(90deg,#00fd4b 0,#00ef25 149px,#00f30b 231px,#2af700 259px,#58fa00 286px,#8bfc00 313px,#c1fd00 339px)"></i><i style="top:219px;left:1039px;width:340px;background:linear-gradient(90deg,#00fd4c 0,#00f025 150px,#00f30b 231px,#2ef700 261px,#5bfa00 287px,#8efc00 314px,#c5fd00 340px)"></i><i style="top:220px;left:1039px;width:342px;background:linear-gradient(90deg,#00fd4d 0,#00f026 150px,#00f40c 230px,#30f700 262px,#5afa00 286px,#8ffc00 314px,#cbfd00 342px)"></i><i style="top:221px;left:1039px;width:343px;background:linear-gradient(90deg,#00fd4d 0,#00f026 150px,#00f40d 230px,#34f800 264px,#5efa00 288px,#94fc00 316px,#cefe00 343px)"></i><i style="top:222px;left:1039px;width:344px;background:linear-gradient(90deg,#00fd4e 0,#00f127 150px,#00f40e 230px,#37f800 265px,#5ffa00 288px,#96fc00 316px,#d2fe00 344px)"></i><i style="top:223px;left:1039px;width:345px;background:linear-gradient(90deg,#00fd4f 0,#00f128 150px,#00f40f 229px,#3bf800 267px,#60fa00 288px,#99fc00 317px,#d6fe00 345px)"></i><i style="top:224px;left:1039px;width:346px;background:linear-gradient(90deg,#00fd4f 0,#00f228 151px,#00f40f 229px,#3df800 268px,#63fa00 289px,#9cfc00 318px,#dafe00 346px)"></i><i style="top:225px;left:1039px;width:348px;background:linear-gradient(90deg,#00fe50 0,#00f229 151px,#00f510 229px,#42f900 270px,#66fa00 290px,#a2fd00 320px,#e0fe00 348px)"></i><i style="top:226px;left:1039px;width:349px;background:linear-gradient(90deg,#00fe51 0,#00f22a 151px,#00f511 228px,#44f900 271px,#67fb00 290px,#a3fd00 320px,#e4fe00 349px)"></i><i style="top:227px;left:1039px;width:350px;background:linear-gradient(90deg,#00fe51 0,#00f32a 151px,#00f512 228px,#49f900 273px,#6afb00 291px,#a7fd00 321px,#e8fe00 350px)"></i><i style="top:228px;left:1039px;width:351px;background:linear-gradient(90deg,#00fe52 0,#00f32b 152px,#00f512 228px,#4bf900 274px,#6dfb00 292px,#aafd00 322px,#edfe00 351px)"></i><i style="top:229px;left:1039px;width:352px;background:linear-gradient(90deg,#00fe53 0,#00f32c 152px,#00f513 227px,#23f70b 250px,#50fa00 276px,#6cfb00 291px,#abfd00 322px,#f1fe00 352px)"></i><i style="top:230px;left:1040px;width:353px;background:linear-gradient(90deg,#00fe53 0,#00f42c 151px,#00f614 226px,#27f80b 251px,#53fa00 276px,#71fb00 292px,#b1fd00 323px,#f7fe00 353px)"></i><i style="top:231px;left:1040px;width:354px;background:linear-gradient(90deg,#00fe54 0,#00f42d 151px,#00f615 226px,#2bf80b 253px,#57fa00 278px,#72fb00 292px,#b5fd00 324px,#fcfe00 354px)"></i><i style="top:232px;left:1040px;width:355px;background:linear-gradient(90deg,#00fe55 0,#00f42e 151px,#00f616 225px,#33f90a 257px,#5afa00 279px,#6ffb00 290px,#adfd00 320px,#fefc00 355px)"></i><i style="top:233px;left:1040px;width:356px;background:linear-gradient(90deg,#00fe55 0,#00f52e 152px,#00f617 225px,#32f90b 256px,#5ffb00 281px,#6afb00 287px,#b1fd00 321px,#fdfe00 353px,#fef800 356px)"></i><i style="top:234px;left:1040px;width:357px;background:linear-gradient(90deg,#00fe56 0,#00f52f 152px,#00f617 225px,#31f90c 255px,#63fb00 283px,#acfd00 318px,#fcfe00 352px,#fef400 357px)"></i><i style="top:235px;left:1040px;width:359px;background:linear-gradient(90deg,#00fe57 0,#00f530 152px,#00f718 224px,#33f90c 256px,#66fb00 284px,#72fb00 290px,#b6fd00 322px,#fefe00 352px,#feed00 359px)"></i><i style="top:236px;left:1040px;width:360px;background:linear-gradient(90deg,#00fe57 0,#00f83c 112px,#00f52b 169px,#00f719 224px,#37f90c 258px,#73fb00 290px,#b5fd00 321px,#fdfe00 351px,#fee900 360px)"></i><i style="top:237px;left:1040px;width:361px;background:linear-gradient(90deg,#00fe58 0,#00f83d 112px,#00f52c 169px,#00f71a 224px,#38f90d 258px,#74fb00 290px,#b7fd00 321px,#fdfe00 350px,#fee600 361px)"></i><i style="top:238px;left:1040px;width:362px;background:linear-gradient(90deg,#00fe59 0,#00f83e 111px,#00f71b 223px,#34f90f 255px,#72fb00 288px,#b4fd00 319px,#fcfe00 349px,#fee200 362px)"></i><i style="top:239px;left:1040px;width:364px;background:linear-gradient(90deg,#00fe5a 0,#00f83f 111px,#00f71c 223px,#38f90f 257px,#75fc01 289px,#b7fd00 320px,#fefe00 349px,#fedc00 364px)"></i><i style="top:240px;left:1040px;width:365px;background:linear-gradient(90deg,#00fe5a 0,#00f93f 112px,#00f81d 223px,#37fa10 256px,#74fc02 288px,#b7fd00 319px,#fdfe00 348px,#fed900 365px)"></i><i style="top:241px;left:1041px;width:365px;background:linear-gradient(90deg,#00fe5b 0,#00f940 111px,#00f81e 221px,#34fa11 253px,#73fc03 286px,#81fc00 293px,#b6fd00 317px,#fdfe00 346px,#fed500 365px)"></i><i style="top:242px;left:1041px;width:366px;background:linear-gradient(90deg,#00fe5c 0,#00f941 111px,#00f81e 221px,#37fa12 254px,#74fc04 286px,#84fc00 294px,#b5fd00 316px,#fcfe00 345px,#fefe00 346px,#fed200 366px)"></i><i style="top:243px;left:1041px;width:367px;background:linear-gradient(90deg,#00fe5c 0,#00f942 111px,#00f81f 221px,#38fa13 254px,#75fc04 286px,#88fc00 295px,#b6fd00 316px,#fefe00 345px,#fece00 367px)"></i><i style="top:244px;left:1041px;width:369px;background:linear-gradient(90deg,#00fe5d 0,#00f942 111px,#00f820 220px,#35fa14 252px,#72fc06 284px,#8dfc00 297px,#c4fd00 321px,#fdfe00 344px,#ffc900 369px)"></i><i style="top:245px;left:1041px;width:370px;background:linear-gradient(90deg,#00fe5e 0,#00fa43 111px,#00f821 220px,#38fa14 253px,#73fc07 284px,#93fd00 299px,#c5fd00 321px,#fcfe00 343px,#fdc500 370px)"></i><i style="top:246px;left:1041px;width:371px;background:linear-gradient(90deg,#00fe5f 0,#00fa44 111px,#00f922 220px,#38fa15 253px,#74fc08 284px,#96fd00 300px,#c7fd00 321px,#fefe00 343px,#fee400 354px,#fcc100 371px)"></i><i style="top:247px;left:1041px;width:372px;background:linear-gradient(90deg,#00fe5f 0,#00fa45 110px,#00f923 219px,#36fa17 251px,#73fc09 283px,#9cfd00 302px,#cbfe00 322px,#fefe00 342px,#fee000 355px,#ffc500 369px,#fcbd00 372px)"></i><i style="top:248px;left:1041px;width:373px;background:linear-gradient(90deg,#00fe60 0,#00fa46 111px,#00f924 219px,#38fa17 252px,#75fc0a 283px,#a0fd00 303px,#fdfe00 341px,#fedc00 356px,#ffc300 369px,#fbba00 373px)"></i><i style="top:249px;left:1041px;width:375px;background:linear-gradient(90deg,#00fe61 0,#00fa46 111px,#00f925 219px,#37fa19 251px,#74fc0b 282px,#a6fd00 305px,#fefd00 341px,#fedf00 354px,#ffc200 369px,#f9b400 375px)"></i><i style="top:250px;left:1041px;width:376px;background:linear-gradient(90deg,#00fe62 0,#00fb48 110px,#00f926 218px,#34fa1a 249px,#73fc0c 281px,#aafd00 306px,#fefe00 340px,#fedd00 354px,#ffc000 369px,#f9b000 376px)"></i><i style="top:251px;left:1042px;width:376px;background:linear-gradient(90deg,#00fe62 0,#00fb48 110px,#00f927 217px,#37fb1b 249px,#74fc0d 280px,#b0fd00 307px,#fdfe00 338px,#fedb00 353px,#ffbf00 368px,#f8ad00 376px)"></i><i style="top:252px;left:1042px;width:377px;background:linear-gradient(90deg,#00fe63 0,#00fb49 110px,#00fa28 217px,#38fb1b 249px,#75fc0e 280px,#b4fd00 308px,#fdfe00 337px,#feda00 353px,#ffbd00 368px,#f7aa00 377px)"></i><i style="top:253px;left:1042px;width:379px;background:linear-gradient(90deg,#00ff64 0,#00fb4a 110px,#00fa29 216px,#35fb1d 247px,#74fc0f 279px,#bafd00 310px,#fefe00 337px,#feda00 352px,#ffbc00 368px,#f6a500 379px)"></i><i style="top:254px;left:1042px;width:380px;background:linear-gradient(90deg,#00ff65 0,#00fb4b 110px,#00fa2a 216px,#38fb1d 248px,#75fc10 279px,#befd00 311px,#fefe00 336px,#fedb00 351px,#fb0 368px,#f5a200 380px)"></i><i style="top:255px;left:1042px;width:381px;background:linear-gradient(90deg,#00ff65 0,#00fb4c 110px,#01fa2b 216px,#39fb1e 248px,#76fc11 279px,#c4fe00 313px,#fdfe00 335px,#fed900 351px,#ffb900 368px,#f59f00 381px)"></i><i style="top:256px;left:1042px;width:382px;background:linear-gradient(90deg,#0f6 0,#00fb4c 110px,#00fa2c 215px,#36fb20 246px,#73fc13 277px,#c8fe00 314px,#fefd00 335px,#fed700 351px,#ffb800 368px,#f49c00 382px)"></i><i style="top:257px;left:1042px;width:383px;background:linear-gradient(90deg,#00ff67 0,#00fc4d 110px,#00fa2d 215px,#38fb20 247px,#75fc13 277px,#cffe00 316px,#fefe00 334px,#fed800 350px,#ffb600 368px,#f39900 383px)"></i><i style="top:258px;left:1043px;width:384px;background:linear-gradient(90deg,#00ff68 0,#00fc4e 110px,#01fa2e 214px,#39fb21 246px,#76fc14 276px,#a3fd0b 296px,#d3fe00 316px,#fefe00 332px,#fed600 349px,#ffb500 367px,#f29500 384px)"></i><i style="top:259px;left:1043px;width:385px;background:linear-gradient(90deg,#00ff68 0,#00fc4f 109px,#00fb2f 213px,#36fb23 244px,#75fc16 275px,#a4fd0c 296px,#d8fe00 317px,#fdfe00 331px,#fed400 349px,#ffb400 367px,#f29200 385px)"></i><i style="top:260px;left:1043px;width:386px;background:linear-gradient(90deg,#00ff69 0,#00fc50 109px,#00fb30 213px,#37fb24 244px,#74fd17 274px,#a8fd0c 297px,#dffe00 319px,#fefd00 331px,#fed500 348px,#ffb200 367px,#f18f00 386px)"></i><i style="top:261px;left:1043px;width:387px;background:linear-gradient(90deg,#00ff6a 0,#00fc51 110px,#01fb31 213px,#38fc25 244px,#75fd18 274px,#b5fd0a 302px,#e6fe00 321px,#fefe00 330px,#fed500 347px,#ffb100 367px,#f18d00 387px)"></i><i style="top:262px;left:1043px;width:388px;background:linear-gradient(90deg,#00ff6b 0,#00fc52 109px,#00fb32 212px,#35fc27 242px,#74fd19 273px,#b7fe0b 302px,#eafe00 322px,#fefe00 329px,#fed400 347px,#ffb000 367px,#f79d00 376px,#f08a00 388px)"></i><i style="top:263px;left:1043px;width:390px;background:linear-gradient(90deg,#00ff6c 0,#00fc53 109px,#00fb33 212px,#38fc27 243px,#75fd1a 273px,#b6fe0c 301px,#fdfe00 328px,#fed200 347px,#ffae00 367px,#f79a00 377px,#ef8600 390px)"></i><i style="top:264px;left:1043px;width:391px;background:linear-gradient(90deg,#00ff6c 0,#00fc53 110px,#01fb34 212px,#39fc28 243px,#76fd1b 273px,#b5fe0e 300px,#fefd00 328px,#fed200 346px,#ffad00 367px,#f79900 377px,#ee8400 391px)"></i><i style="top:265px;left:1043px;width:392px;background:linear-gradient(90deg,#00ff6d 0,#00fc54 109px,#00fb35 211px,#36fc2a 241px,#76fd1c 272px,#b7fe0f 300px,#fefe00 327px,#fed100 346px,#ffac00 367px,#f69600 378px,#ee8100 392px)"></i><i style="top:266px;left:1044px;width:392px;background:linear-gradient(90deg,#00ff6e 0,#00fd55 109px,#00fb36 210px,#39fc2a 241px,#77fd1d 271px,#b8fe10 299px,#fdfe01 325px,#fecf00 345px,#fa0 366px,#f69500 377px,#ed7f00 392px)"></i><i style="top:267px;left:1044px;width:393px;background:linear-gradient(90deg,#00ff6f 0,#00fd56 108px,#00fb37 209px,#32fc2d 237px,#71fd20 268px,#b0fe13 295px,#fefd02 325px,#fed000 344px,#ffa900 366px,#f59200 378px,#ed7c00 393px)"></i><i style="top:268px;left:1044px;width:395px;background:linear-gradient(90deg,#00ff70 0,#00fd57 108px,#00fc38 209px,#36fc2d 239px,#75fd20 269px,#b4fe13 296px,#fefe04 324px,#feeb00 331px,#fed000 343px,#ffa800 366px,#f59000 379px,#ec7900 395px)"></i><i style="top:269px;left:1044px;width:396px;background:linear-gradient(90deg,#00ff70 0,#00fd58 109px,#00fc39 209px,#39fc2e 240px,#76fd21 269px,#b8fe14 297px,#fefe05 323px,#fee700 332px,#fece00 343px,#ffa600 366px,#f58e00 379px,#eb7700 396px)"></i><i style="top:270px;left:1044px;width:397px;background:linear-gradient(90deg,#00ff71 0,#00fd59 108px,#00fc3b 208px,#32fc30 236px,#73fd23 267px,#b5fe16 295px,#fdfe07 322px,#fee300 333px,#fecd00 343px,#ffa500 366px,#f48c00 380px,#eb7400 397px)"></i><i style="top:271px;left:1044px;width:398px;background:linear-gradient(90deg,#00ff72 0,#00fd5a 108px,#00fc3c 208px,#35fc31 237px,#74fd24 267px,#b2fe18 293px,#fefd08 322px,#fedc00 335px,#ffbe00 350px,#ffa400 366px,#f48b00 380px,#ea7200 398px)"></i><i style="top:272px;left:1044px;width:400px;background:linear-gradient(90deg,#00ff73 0,#00fd5b 108px,#00fc3d 208px,#38fc31 238px,#75fd25 267px,#b6fe18 294px,#fefe09 321px,#fed800 336px,#ffbc00 350px,#ffa200 366px,#f48800 381px,#e96f00 400px)"></i><i style="top:273px;left:1044px;width:401px;background:linear-gradient(90deg,#00ff74 0,#00fd5c 108px,#00fc3e 207px,#33fd33 235px,#74fd26 266px,#b7fe19 294px,#fefe0b 320px,#fed200 338px,#fb0 350px,#ffa100 366px,#f48700 381px,#e96d00 401px)"></i><i style="top:274px;left:1045px;width:401px;background:linear-gradient(90deg,#00ff75 0,#00fd5d 108px,#00fc3f 206px,#36fd34 235px,#75fd27 265px,#b6fe1b 292px,#fdfe0c 318px,#ffce00 338px,#ffb900 349px,#ffa000 365px,#f38400 381px,#e86b00 401px)"></i><i style="top:275px;left:1045px;width:402px;background:linear-gradient(90deg,#00ff76 0,#00fd5e 108px,#00fc40 206px,#39fd35 236px,#74fd29 264px,#b3fe1d 290px,#fefd0d 318px,#fed704 333px,#ffc900 340px,#ffb800 349px,#ff9e00 365px,#f38300 381px,#e86900 402px)"></i><i style="top:276px;left:1045px;width:403px;background:linear-gradient(90deg,#00ff76 0,#00fd5f 108px,#01fc41 206px,#3afd36 236px,#78fd29 265px,#b7fe1d 291px,#fefe0f 317px,#fed805 332px,#ffc300 342px,#ffb600 349px,#ff9d00 365px,#f28100 382px,#e76700 403px)"></i><i style="top:277px;left:1045px;width:405px;background:linear-gradient(90deg,#0f7 0,#00fd60 107px,#00fd42 205px,#37fd38 234px,#75fd2b 263px,#b6fe1f 290px,#fefe11 316px,#fed606 332px,#ffc000 343px,#ffb500 349px,#ff9c00 365px,#f28000 382px,#e66400 405px)"></i><i style="top:278px;left:1045px;width:406px;background:linear-gradient(90deg,#00ff78 0,#00fe60 108px,#00fd43 205px,#39fd38 235px,#76fd2c 263px,#b8fe20 290px,#fdfe12 315px,#fed407 332px,#ffb300 349px,#ff9b00 365px,#f27d00 383px,#e66200 406px)"></i><i style="top:279px;left:1045px;width:407px;background:linear-gradient(90deg,#00ff79 0,#00fe61 108px,#01fd44 205px,#3afd39 235px,#77fd2e 263px,#b7fe21 289px,#fcfe14 314px,#ffd308 332px,#ffb200 349px,#f90 365px,#f27c00 383px,#e56000 407px)"></i><i style="top:280px;left:1045px;width:408px;background:linear-gradient(90deg,#00ff7a 0,#00fe63 107px,#00fd46 204px,#37fd3b 233px,#76fd2f 262px,#b9fe22 289px,#fefe15 314px,#fed50a 330px,#ffb000 349px,#ff9800 365px,#f17a00 384px,#e55f00 408px)"></i><i style="top:281px;left:1046px;width:408px;background:linear-gradient(90deg,#00ff7b 0,#00fe63 107px,#00fd47 203px,#3afd3c 233px,#78fe30 261px,#b8fe24 287px,#fefe17 312px,#ffd40a 329px,#ffaf00 348px,#ff9700 364px,#f17900 383px,#e45d00 408px)"></i><i style="top:282px;left:1046px;width:410px;background:linear-gradient(90deg,#00ff7c 0,#00fe65 107px,#01fd48 203px,#39fd3d 232px,#76fe32 260px,#b7fe25 286px,#fdfe18 311px,#ffd20b 329px,#ffae01 348px,#ff9600 364px,#f17700 384px,#e35a00 410px)"></i><i style="top:283px;left:1046px;width:411px;background:linear-gradient(90deg,#00ff7d 0,#00fe66 107px,#00fd49 202px,#36fd3f 230px,#75fe33 259px,#b6fe27 285px,#fcfe1a 310px,#fefe19 311px,#ffd00c 329px,#ffac02 348px,#ff9400 364px,#f17500 384px,#e35800 411px)"></i><i style="top:284px;left:1046px;width:412px;background:linear-gradient(90deg,#00ff7e 0,#00fe67 107px,#00fd4a 202px,#39fd40 231px,#77fe34 259px,#b8fe28 285px,#fefe1b 310px,#ffd10d 328px,#ffab02 348px,#ff9300 364px,#f07300 385px,#e25700 412px)"></i><i style="top:285px;left:1046px;width:413px;background:linear-gradient(90deg,#00ff7e 0,#00fe68 107px,#01fd4c 202px,#3afd41 231px,#78fe35 259px,#b9fe29 285px,#fdfe1d 309px,#ffcf0e 328px,#ffa903 348px,#ff9200 364px,#f07200 385px,#e25500 413px)"></i><i style="top:286px;left:1046px;width:415px;background:linear-gradient(90deg,#00ff7f 0,#00fe69 106px,#00fd4d 201px,#37fd43 229px,#75fe37 257px,#b6fe2b 283px,#fdfe1e 308px,#ffcd0f 328px,#ffa804 348px,#ff9100 364px,#f17400 383px,#e15300 415px)"></i><i style="top:287px;left:1047px;width:415px;background:linear-gradient(90deg,#00ff80 0,#00fe6a 106px,#00fd4e 200px,#3afd44 229px,#76fe39 256px,#b7fe2d 282px,#fcfe20 306px,#fefe1f 307px,#fee217 317px,#ffcb10 327px,#ffa604 347px,#ff8f00 363px,#f17300 382px,#e05100 415px)"></i><i style="top:288px;left:1047px;width:416px;background:linear-gradient(90deg,#00ff81 0,#00fe6b 106px,#01fd4f 200px,#3bfe45 229px,#77fe3a 256px,#b9fe2e 282px,#fefe21 306px,#ffce12 325px,#ffa505 347px,#ff8e00 363px,#f17100 383px,#e04f00 416px)"></i><i style="top:289px;left:1047px;width:417px;background:linear-gradient(90deg,#00ff82 0,#00fe6c 106px,#00fd51 199px,#37fe47 227px,#76fe3b 255px,#b8fe2f 281px,#fdfe23 305px,#ffcc13 325px,#ffa406 347px,#ff8d00 363px,#f17000 383px,#df4e00 417px)"></i><i style="top:290px;left:1047px;width:418px;background:linear-gradient(90deg,#00ff83 0,#00fe6d 106px,#00fd52 199px,#3afe47 228px,#77fe3c 255px,#b7fe31 280px,#fcfe25 304px,#ffca13 325px,#ffa206 347px,#ff8c00 363px,#f16f00 383px,#df4c00 418px)"></i><i style="top:291px;left:1047px;width:420px;background:linear-gradient(90deg,#00ff84 0,#00fe6e 106px,#01fe53 199px,#39fe49 227px,#76fe3e 254px,#b6fe33 279px,#fefe26 304px,#ffe21d 314px,#ffcb15 324px,#ffa107 347px,#ff8b00 363px,#f06c00 384px,#de4a00 420px)"></i><i style="top:292px;left:1047px;width:421px;background:linear-gradient(90deg,#00ff85 0,#00fe6f 105px,#00fe55 198px,#36fe4b 225px,#75fe40 253px,#b8fe34 279px,#fefe28 303px,#ffcb16 323px,#ff9f08 347px,#ff8900 363px,#f06a00 385px,#dd4900 421px)"></i><i style="top:293px;left:1048px;width:421px;background:linear-gradient(90deg,#00ff86 0,#00fe70 105px,#00fe56 197px,#39fe4c 225px,#77fe41 252px,#b7fe36 277px,#fdfe29 301px,#ffca17 322px,#ff9e09 346px,#ff8801 362px,#f06900 384px,#dd4700 421px)"></i><i style="top:294px;left:1048px;width:422px;background:linear-gradient(90deg,#00ff87 0,#00fe71 104px,#00fe57 196px,#33fe4e 222px,#73fe43 250px,#b6fe37 276px,#fcfe2b 300px,#fefe2a 301px,#ffe221 311px,#ffc818 322px,#ff9d09 346px,#ff8702 362px,#f06800 384px,#e65600 402px,#dd4600 422px)"></i><i style="top:295px;left:1048px;width:423px;background:linear-gradient(90deg,#0f8 0,#00fe73 104px,#00fe58 196px,#39fe4f 224px,#77fe44 251px,#b8fe39 276px,#fefe2c 300px,#ffe223 310px,#ffca1a 320px,#ffb212 332px,#ff9d0a 345px,#ff8602 362px,#f06700 384px,#e65500 402px,#dc4400 423px)"></i><i style="top:296px;left:1048px;width:425px;background:linear-gradient(90deg,#00ff89 0,#00fe73 105px,#00fe5a 196px,#3afe50 224px,#78fe45 251px,#bafe3a 276px,#fefe2e 299px,#ffe023 310px,#ffc91b 320px,#ffb113 332px,#ff9b0b 345px,#ff8503 362px,#ef6500 385px,#e55300 404px,#db4200 425px)"></i><i style="top:297px;left:1048px;width:426px;background:linear-gradient(90deg,#00ff8a 0,#00fe75 104px,#00fe5b 195px,#34fe52 221px,#75fe47 249px,#b6fe3c 274px,#fdfe30 298px,#ffc71c 320px,#ffaf13 332px,#ff9a0c 345px,#ff8304 362px,#f77600 371px,#ef6400 385px,#e55200 404px,#db4100 426px)"></i><i style="top:298px;left:1048px;width:427px;background:linear-gradient(90deg,#00ff8b 0,#00fe76 104px,#00fe5c 195px,#37fe53 222px,#76fe48 249px,#b8fe3d 274px,#fcfe32 297px,#fffe31 298px,#ffe127 308px,#ffc51d 320px,#ffae14 332px,#ff990c 345px,#ff8204 362px,#f77300 372px,#ee6200 386px,#e55000 405px,#da4000 427px)"></i><i style="top:299px;left:1048px;width:428px;background:linear-gradient(90deg,#00ff8c 0,#00fe77 104px,#00fe5e 195px,#3afe54 223px,#77fe4a 249px,#bafe3f 274px,#feff33 297px,#ffdf28 308px,#ffc51e 319px,#ffae15 331px,#ff970d 345px,#ff8105 362px,#f57000 374px,#ee6100 386px,#e44f00 406px,#da3e00 428px)"></i><i style="top:300px;left:1049px;width:429px;background:linear-gradient(90deg,#00ff8d 0,#00fe78 103px,#00fe5f 193px,#33fe57 218px,#74fe4c 246px,#b6fe41 271px,#fdff35 295px,#ffdd28 307px,#ffc41f 318px,#ffad16 330px,#ff960e 344px,#ff8005 361px,#f56d00 374px,#ee6000 386px,#e44d00 406px,#d93c00 429px)"></i><i style="top:301px;left:1049px;width:430px;background:linear-gradient(90deg,#00ff8e 0,#00fe79 103px,#00fe61 193px,#38fe57 220px,#75fe4d 246px,#b8fe42 271px,#fdff37 294px,#ffdb29 307px,#ffc220 318px,#ffab17 330px,#ff950e 344px,#ff7f06 361px,#f46a00 376px,#ee5f00 386px,#e34b00 407px,#d83b00 430px)"></i><i style="top:302px;left:1049px;width:431px;background:linear-gradient(90deg,#00ff8f 0,#00ff7b 103px,#00fe62 193px,#39fe59 220px,#77fe4f 246px,#b7fe44 270px,#fffe38 294px,#ffe12d 304px,#ffc522 316px,#ffab18 329px,#ff930f 344px,#ff7e07 361px,#f36800 377px,#ee5e00 386px,#e34b00 407px,#d83a00 431px)"></i><i style="top:303px;left:1049px;width:432px;background:linear-gradient(90deg,#00ff90 0,#00ff7c 103px,#00fe63 192px,#33fe5b 217px,#75fe50 245px,#b8fe45 270px,#feff3a 293px,#ffdf2e 304px,#ffc323 316px,#ffaa19 329px,#ff9210 344px,#ff7c07 361px,#f26400 379px,#ed5c00 387px,#e34900 408px,#d83900 432px)"></i><i style="top:304px;left:1049px;width:433px;background:linear-gradient(90deg,#00ff91 0,#00ff7d 103px,#00fe65 192px,#39fe5c 219px,#77fe52 245px,#b7fe47 269px,#fdff3c 292px,#ffdd2f 304px,#ffc123 316px,#ffa81a 329px,#ff9110 344px,#ff7b08 361px,#ed5b00 387px,#e24800 409px,#d73800 433px)"></i><i style="top:305px;left:1049px;width:435px;background:linear-gradient(90deg,#00ff92 0,#00ff7e 103px,#00fe66 192px,#3afe5d 219px,#78fe53 245px,#b9fe49 269px,#fcff3e 291px,#ffd92e 305px,#ffbf24 316px,#ffa71a 329px,#ff8f11 344px,#ff7a08 361px,#ed5900 388px,#e24600 410px,#d63600 435px)"></i><i style="top:306px;left:1050px;width:435px;background:linear-gradient(90deg,#00ff93 0,#00ff7f 102px,#00fe68 190px,#34fe5f 215px,#75fe55 242px,#b5fe4b 266px,#fffe3f 290px,#ffde32 301px,#ffc026 314px,#ffa51b 328px,#ff8e12 343px,#ff7909 360px,#ed5800 387px,#e24500 409px,#d63500 435px)"></i><i style="top:307px;left:1050px;width:436px;background:linear-gradient(90deg,#00ff94 0,#00ff81 102px,#00fe69 190px,#37fe60 216px,#76fe57 242px,#b7fe4c 266px,#feff41 289px,#ffdc33 301px,#ffc027 313px,#ffa51c 327px,#ff8e13 342px,#ff780a 360px,#ed5700 387px,#e14400 410px,#d53300 436px)"></i><i style="top:308px;left:1050px;width:437px;background:linear-gradient(90deg,#00ff95 0,#00ff82 102px,#00fe6a 190px,#3bfe61 217px,#77fe58 242px,#b9fe4e 266px,#fdff43 288px,#ffda34 301px,#ffbe28 313px,#ffa41d 327px,#ff8d14 342px,#ff770a 360px,#f66605 372px,#ec5500 388px,#e14300 411px,#d53200 437px)"></i><i style="top:309px;left:1050px;width:438px;background:linear-gradient(90deg,#00ff96 0,#00ff83 102px,#00fe6c 189px,#33fe64 213px,#74fe5a 240px,#b5ff50 264px,#fcff45 287px,#fffe45 288px,#ffd835 301px,#ffbd29 313px,#ffa21e 327px,#ff8c14 342px,#ff760b 360px,#f66505 372px,#ec5500 388px,#e14200 411px,#d43100 438px)"></i><i style="top:310px;left:1050px;width:440px;background:linear-gradient(90deg,#00ff97 0,#00ff84 102px,#00fe6d 189px,#38fe65 215px,#78fe5b 241px,#baff51 265px,#ffff47 287px,#ffde39 298px,#ffbf2b 311px,#ffa31f 326px,#ff8a15 342px,#ff750b 360px,#f56306 373px,#ec5300 389px,#e04000 413px,#d43000 440px)"></i><i style="top:311px;left:1051px;width:440px;background:linear-gradient(90deg,#00ff98 0,#00ff85 101px,#00fe6f 188px,#3bfe66 215px,#79fe5d 240px,#b9ff53 263px,#feff49 285px,#ffdc3a 297px,#ffbd2c 310px,#ffa120 325px,#ff8915 341px,#ff730c 359px,#f56206 372px,#ec5200 388px,#e03f00 412px,#d32f00 440px)"></i><i style="top:312px;left:1051px;width:441px;background:linear-gradient(90deg,#0f9 0,#00ff87 101px,#00fe70 187px,#33fe69 211px,#75fe5f 238px,#b8ff55 262px,#fdff4b 284px,#ffd739 298px,#ffbb2d 310px,#ffa021 325px,#ff8816 341px,#ff720d 359px,#f56107 372px,#ec5101 388px,#df3e00 413px,#d32d00 441px)"></i><i style="top:313px;left:1051px;width:442px;background:linear-gradient(90deg,#00ff9a 0,#0f8 101px,#00fe72 187px,#37fe6a 212px,#77fe61 238px,#b7ff57 261px,#fcff4d 283px,#fffe4c 284px,#ffd53a 298px,#ffba2e 310px,#ff9e21 325px,#ff8617 341px,#ff710d 359px,#f56007 372px,#eb4f01 389px,#df3c00 414px,#d22c00 442px)"></i><i style="top:314px;left:1051px;width:443px;background:linear-gradient(90deg,#00ff9c 0,#00ff89 101px,#00fe73 187px,#3afe6b 213px,#78ff62 238px,#b9ff59 261px,#feff4e 283px,#ffdb3e 295px,#ffbc30 308px,#ffa023 323px,#ff8718 340px,#ff700e 359px,#f55f08 372px,#eb4f01 389px,#df3c00 414px,#d22b00 443px)"></i><i style="top:315px;left:1051px;width:445px;background:linear-gradient(90deg,#00ff9d 0,#00ff8b 100px,#00fe75 186px,#34fe6d 210px,#77ff64 237px,#b8ff5b 260px,#feff50 282px,#ffd63e 296px,#ffb830 309px,#ff9d23 324px,#ff8418 341px,#ff6f0e 359px,#f45d08 373px,#eb4d02 390px,#de3a00 416px,#d12a00 445px)"></i><i style="top:316px;left:1052px;width:445px;background:linear-gradient(90deg,#00ff9e 0,#00ff8c 100px,#00ff76 185px,#37ff6f 210px,#79ff66 236px,#baff5c 259px,#fdff53 280px,#ffd740 294px,#ffb932 307px,#ff9b24 323px,#ff8319 340px,#ff6e0f 358px,#f45c08 372px,#eb4c02 389px,#de3900 415px,#d12900 445px)"></i><i style="top:317px;left:1052px;width:446px;background:linear-gradient(90deg,#00ff9f 0,#00ff8d 100px,#00ff78 185px,#3bff70 211px,#7aff67 236px,#b9ff5e 258px,#fffe54 280px,#ffda43 292px,#ffb933 306px,#ff9b25 322px,#ff831a 339px,#ff6d0f 358px,#f45c09 372px,#eb4b03 389px,#de3800 415px,#d02800 446px)"></i><i style="top:318px;left:1052px;width:447px;background:linear-gradient(90deg,#00ffa0 0,#00ff8f 99px,#00ff7a 184px,#32ff73 207px,#76ff6a 234px,#b8ff60 257px,#feff56 279px,#ffd844 292px,#ffb734 306px,#ff9a26 322px,#ff811a 339px,#ff6c10 358px,#f45b09 372px,#eb4b03 389px,#dd3700 416px,#d02700 447px)"></i><i style="top:319px;left:1052px;width:449px;background:linear-gradient(90deg,#00ffa1 0,#00ff90 99px,#00ff7b 184px,#36ff74 208px,#78ff6b 234px,#baff62 257px,#fdff58 278px,#ffd645 292px,#ffb836 305px,#ff9a28 321px,#ff801b 339px,#ff6b11 358px,#f45a0a 372px,#ea4903 390px,#dd3600 417px,#cf2600 449px)"></i><i style="top:320px;left:1053px;width:449px;background:linear-gradient(90deg,#00ffa2 0,#00ff91 99px,#00ff7d 183px,#39ff75 208px,#7aff6d 233px,#b9ff64 255px,#fcff5b 276px,#fffe5a 277px,#ffd445 291px,#ffb637 304px,#ff9928 320px,#ff7f1c 338px,#ff6a11 357px,#f4590a 371px,#ea4804 389px,#e43f00 401px,#dd3500 417px,#ce2500 449px)"></i><i style="top:321px;left:1053px;width:450px;background:linear-gradient(90deg,#00ffa4 0,#00ff93 98px,#00ff7e 182px,#33ff78 205px,#78ff6f 232px,#bf6 255px,#fffe5c 276px,#ffd749 289px,#ffb638 303px,#ff992a 319px,#ff7e1c 338px,#ff6812 357px,#f4580b 371px,#ea4704 390px,#e33d00 403px,#ce2400 450px)"></i><i style="top:322px;left:1053px;width:451px;background:linear-gradient(90deg,#00ffa5 0,#00ff94 98px,#00ff80 182px,#37ff79 206px,#7aff71 232px,#baff68 254px,#feff5f 275px,#ffd84b 288px,#ffb63a 302px,#ff992b 318px,#ff7e1d 337px,#ff6712 357px,#f4570b 371px,#ea4604 390px,#e33b00 404px,#ce2300 451px)"></i><i style="top:323px;left:1053px;width:452px;background:linear-gradient(90deg,#00ffa6 0,#00ff95 98px,#00ff82 182px,#38ff7b 206px,#7cff73 232px,#bcff6a 254px,#fdff61 274px,#ffd64b 288px,#ffb53b 302px,#ff972c 318px,#ff7c1e 337px,#ff6613 357px,#f4560c 371px,#ea4505 390px,#e23900 406px,#cd2200 452px)"></i><i style="top:324px;left:1053px;width:454px;background:linear-gradient(90deg,#00ffa7 0,#00ff97 98px,#00ff83 181px,#32ff7d 203px,#78ff75 230px,#bbff6c 253px,#fcff63 273px,#fffe62 274px,#ffd34c 288px,#ffb33b 302px,#ff962c 318px,#ff7b1f 337px,#ff6513 357px,#f4540c 372px,#e94305 391px,#e13800 407px,#cc2100 454px)"></i><i style="top:325px;left:1054px;width:454px;background:linear-gradient(90deg,#00ffa8 0,#00ff98 97px,#00ff85 180px,#38ff7e 204px,#7cff77 230px,#bdff6e 252px,#ffff65 272px,#ffd750 285px,#ffb33d 300px,#ff942d 317px,#ff7a1f 336px,#ff6414 356px,#f4530c 371px,#e94305 390px,#e03600 408px,#cc2000 454px)"></i><i style="top:326px;left:1054px;width:455px;background:linear-gradient(90deg,#00ffa9 0,#00ff9a 97px,#01ff87 180px,#39ff80 204px,#7eff79 230px,#bfff70 252px,#feff67 271px,#ffd550 285px,#ffb13e 300px,#ff932e 317px,#ff7920 336px,#ff6315 356px,#f4520d 371px,#e94206 390px,#e03500 409px,#cc1f00 455px)"></i><i style="top:327px;left:1054px;width:456px;background:linear-gradient(90deg,#00ffab 0,#00ff9b 97px,#0f8 179px,#30ff83 200px,#78ff7c 227px,#b8ff73 249px,#fffd68 271px,#ffd553 284px,#ffb240 299px,#ff932f 316px,#ff7720 336px,#ff6215 356px,#f4510d 371px,#e94006 391px,#df3300 411px,#cb1e00 456px)"></i><i style="top:328px;left:1054px;width:457px;background:linear-gradient(90deg,#00ffac 0,#00ff9d 97px,#00ff8a 179px,#36ff84 202px,#7cff7d 228px,#bdff75 250px,#fffe6b 270px,#ffd655 283px,#ffb241 298px,#ff9331 315px,#f72 335px,#ff6116 356px,#f4500e 371px,#e94006 391px,#de3200 412px,#cb1d00 457px)"></i><i style="top:329px;left:1055px;width:458px;background:linear-gradient(90deg,#00ffad 0,#00ff9e 96px,#01ff8c 178px,#38ff86 201px,#81ff7f 228px,#bfff77 249px,#ffff6e 268px,#ffd456 282px,#ffb042 297px,#ff9231 314px,#ff7622 334px,#ff6016 355px,#f4500e 370px,#e93f07 390px,#dd3000 413px,#ca1c00 458px)"></i><i style="top:330px;left:1055px;width:459px;background:linear-gradient(90deg,#00ffae 0,#00ff9f 96px,#00ff8e 177px,#2fff89 197px,#6fff83 221px,#b5ff7b 245px,#feff70 267px,#fffc6e 268px,#ffd156 282px,#ffaf43 297px,#ff8f31 315px,#ff7422 335px,#ff5f17 355px,#f34e0e 371px,#e83d07 391px,#dd2f00 414px,#c91b00 459px)"></i><i style="top:331px;left:1055px;width:460px;background:linear-gradient(90deg,#00ffb0 0,#00ffa1 96px,#00ff8f 177px,#35ff8a 199px,#7aff85 224px,#baff7c 246px,#fffd71 267px,#ffd259 281px,#ffaf45 296px,#ff8f33 314px,#ff7424 334px,#ff5e17 355px,#f34d0f 371px,#e83d07 391px,#dc2d00 416px,#c91a00 460px)"></i><i style="top:332px;left:1055px;width:461px;background:linear-gradient(90deg,#00ffb1 0,#00ffa2 96px,#01ff91 177px,#36ff8c 199px,#84ff86 227px,#c2ff7d 248px,#fffe74 266px,#ffd35b 280px,#ffaf47 295px,#ff8f34 313px,#ff7324 334px,#ff5d18 355px,#f34c0f 371px,#e83c08 391px,#dc2c00 417px,#c91a00 461px)"></i><i style="top:333px;left:1055px;width:463px;background:linear-gradient(90deg,#00ffb2 0,#00ffa4 95px,#00ff93 176px,#25ff8f 192px,#59ff8c 211px,#b2ff83 242px,#feff77 265px,#fffc75 266px,#ffd05c 280px,#ffad47 295px,#ff8d35 313px,#ff7125 334px,#ff5c18 355px,#f34b10 371px,#e83a08 392px,#db2a00 419px,#c81900 463px)"></i><i style="top:334px;left:1056px;width:463px;background:linear-gradient(90deg,#00ffb3 0,#00ffa6 94px,#00ff95 175px,#29ff91 192px,#58ff8e 209px,#b8ff85 242px,#fdff7a 263px,#fffd78 264px,#ffd15e 278px,#ffac48 294px,#ff8c35 312px,#ff7025 333px,#ff5b19 354px,#f34a10 370px,#e83a08 391px,#da2900 419px,#c71800 463px)"></i><i style="top:335px;left:1056px;width:464px;background:linear-gradient(90deg,#00ffb5 0,#00ffa7 94px,#01ff96 175px,#28ff93 191px,#54ff90 207px,#8eff8d 227px,#bdff87 243px,#fffe7b 263px,#ffd260 277px,#ffac4a 293px,#ff8c37 311px,#ff7027 332px,#ff5a19 354px,#f34911 370px,#e83909 391px,#d92800 421px,#c71700 464px)"></i><i style="top:336px;left:1056px;width:465px;background:linear-gradient(90deg,#00ffb6 0,#00ffa9 94px,#00ff98 174px,#21ff95 188px,#4dff93 204px,#9cff8e 231px,#cfff86 248px,#ffff7e 262px,#ffd263 276px,#ffac4c 292px,#ff8b38 311px,#ff6f27 332px,#ff591a 354px,#f24811 371px,#e73809 392px,#d92700 422px,#c71600 465px)"></i><i style="top:337px;left:1056px;width:466px;background:linear-gradient(90deg,#00ffb8 0,#0fa 94px,#00ff9a 174px,#38ff96 196px,#99ff92 229px,#ceff89 247px,#feff81 261px,#fffc7f 262px,#ffd063 276px,#ffaa4c 292px,#ff8938 311px,#ff6e28 332px,#ff581a 354px,#f24711 371px,#e73709 392px,#d82500 424px,#c61600 466px)"></i><i style="top:338px;left:1056px;width:468px;background:linear-gradient(90deg,#00ffb9 0,#00ffac 94px,#01ff9c 174px,#39ff98 196px,#9bff95 229px,#caff8d 245px,#fffd83 261px,#ffd166 275px,#ffab4e 291px,#ff893a 310px,#ff6d28 332px,#ff571b 354px,#f24612 371px,#e73609 393px,#d82400 425px,#c51500 468px)"></i><i style="top:339px;left:1057px;width:468px;background:linear-gradient(90deg,#00ffba 0,#00ffad 93px,#00ff9e 172px,#35ff9a 193px,#9eff97 228px,#d0ff8f 245px,#fffe86 259px,#ffd168 273px,#ffab50 289px,#ff893b 308px,#ff6c2a 330px,#ff561c 353px,#f24512 370px,#e7350a 392px,#d72300 426px,#c51400 468px)"></i><i style="top:340px;left:1057px;width:469px;background:linear-gradient(90deg,#00ffbc 0,#00ffaf 93px,#00ffa0 172px,#36ff9c 193px,#a1ff9a 228px,#d3ff92 245px,#ffff89 258px,#ffcf69 273px,#ffa951 289px,#ff883c 308px,#ff6b2a 330px,#ff551c 353px,#f24413 370px,#e7340a 392px,#d62200 427px,#c51300 469px)"></i><i style="top:341px;left:1057px;width:470px;background:linear-gradient(90deg,#00ffbd 0,#00ffb1 93px,#01ffa2 172px,#38ff9e 193px,#a4ff9d 228px,#d5ff95 245px,#feff8d 257px,#fffc8a 258px,#ffcd6a 273px,#ffa752 289px,#ff863d 308px,#ff6a2b 330px,#ff541d 353px,#f24313 370px,#e7330a 392px,#d52000 429px,#c41200 470px)"></i><i style="top:342px;left:1058px;width:470px;background:linear-gradient(90deg,#00ffbe 0,#00ffb2 92px,#00ffa4 170px,#36ffa0 191px,#a6ffa1 227px,#d2ff99 242px,#fffd8e 256px,#ffcd6c 271px,#ffa853 287px,#ff863e 306px,#ff692b 329px,#ff531d 352px,#f24213 370px,#e6320a 392px,#d51f00 429px,#c41200 470px)"></i><i style="top:343px;left:1058px;width:472px;background:linear-gradient(90deg,#00ffc0 0,#00ffb4 92px,#00ffa6 170px,#38ffa2 191px,#a9ffa4 227px,#d7ff9b 243px,#fffe92 255px,#ffce6f 270px,#ffa855 286px,#ff8640 305px,#ff692c 328px,#ff521e 352px,#f24114 370px,#e6310b 392px,#d41e00 431px,#c31100 472px)"></i><i style="top:344px;left:1058px;width:473px;background:linear-gradient(90deg,#00ffc1 0,#00ffb6 91px,#01ffa7 170px,#39ffa4 191px,#aaffa7 226px,#daff9e 243px,#ffff96 254px,#ffcc70 270px,#ffa656 286px,#ff8540 305px,#ff682d 328px,#ff511e 352px,#f24014 370px,#e6310b 392px,#d41d00 432px,#c31000 473px)"></i><i style="top:345px;left:1058px;width:474px;background:linear-gradient(90deg,#00ffc2 0,#00ffb7 91px,#0fa 169px,#35ffa7 189px,#8fffab 216px,#b0ffab 227px,#d1ffa5 239px,#feff99 253px,#fffc97 254px,#ffcd73 269px,#ffa457 286px,#ff8441 305px,#ff662e 328px,#ff501f 352px,#f23f15 370px,#e6300c 392px,#d31c00 434px,#c20f00 474px)"></i><i style="top:346px;left:1059px;width:474px;background:linear-gradient(90deg,#00ffc4 0,#00ffb9 90px,#00ffac 168px,#36ffa9 188px,#8fffae 214px,#b0ffae 225px,#ceffa9 236px,#fffd9b 252px,#ffca74 268px,#ffa559 284px,#ff8242 304px,#ff652e 327px,#ff4f1f 351px,#f23e15 369px,#e62f0c 392px,#d21b00 434px,#c20f00 474px)"></i><i style="top:347px;left:1059px;width:475px;background:linear-gradient(90deg,#00ffc5 0,#0fb 90px,#01ffad 168px,#38ffab 188px,#92ffb1 214px,#b4ffb2 225px,#dcffaa 240px,#fffea0 251px,#ffce79 266px,#ffa55b 283px,#ff8243 303px,#ff652f 326px,#ff4e20 351px,#f23e16 369px,#e62e0c 392px,#d11a00 436px,#c10e00 475px)"></i><i style="top:348px;left:1059px;width:477px;background:linear-gradient(90deg,#00ffc7 0,#00ffbc 90px,#00ffb0 167px,#17ffae 176px,#36ffad 187px,#96ffb4 214px,#baffb5 226px,#d9ffaf 238px,#feffa4 250px,#fffca1 251px,#ffcc7a 266px,#ffa35c 283px,#ff8144 303px,#ff632f 327px,#ff4d20 351px,#f13c16 370px,#e52d0c 393px,#d11900 437px,#c10d00 477px)"></i><i style="top:349px;left:1059px;width:478px;background:linear-gradient(90deg,#00ffc8 0,#00ffb2 167px,#38ffaf 187px,#99ffb7 214px,#bbffb9 225px,#d7ffb4 236px,#fffda6 250px,#ffca7a 266px,#ffa15c 283px,#ff7f44 303px,#ff6331 326px,#ff4c21 351px,#f13b16 370px,#e52c0d 393px,#d01800 439px,#c00d00 478px)"></i><i style="top:350px;left:1060px;width:478px;background:linear-gradient(90deg,#00ffca 0,#01ffb4 166px,#3affb2 186px,#99ffba 212px,#beffbd 224px,#d9ffb8 235px,#fffeaa 248px,#ffcb7e 264px,#ffa25e 281px,#ff7f46 301px,#ff6231 325px,#ff4b21 350px,#f13a16 369px,#e52b0d 392px,#d01700 439px,#c00c00 478px)"></i><i style="top:351px;left:1060px;width:479px;background:linear-gradient(90deg,#00ffcb 0,#00ffb6 165px,#1affb4 175px,#38ffb4 185px,#63ffb6 197px,#9dffbe 212px,#c2ffc1 224px,#daffbc 234px,#ffffaf 247px,#ffcb81 263px,#ffa261 280px,#ff7f48 300px,#ff6232 324px,#ff4a22 350px,#f13a17 369px,#e52b0d 392px,#cf1600 441px,#bf0b00 479px)"></i><i style="top:352px;left:1060px;width:481px;background:linear-gradient(90deg,#00ffcd 0,#00ffb8 165px,#1effb6 176px,#3affb6 185px,#66ffb9 197px,#a1ffc1 212px,#c5ffc4 224px,#dfffbf 235px,#feffb4 246px,#fffcb1 247px,#ffcc84 262px,#ffa666 277px,#ff7f49 299px,#ff5f32 325px,#ff4922 350px,#f13917 369px,#e52a0d 393px,#ce1500 442px,#bf0b00 481px)"></i><i style="top:353px;left:1061px;width:481px;background:linear-gradient(90deg,#00ffce 0,#01ffba 164px,#1fffb9 175px,#3fffb8 185px,#99ffc2 208px,#b5ffc7 216px,#d9ffc6 230px,#fffdb6 245px,#ffca85 261px,#ffa567 276px,#ff7f4b 297px,#ff5f34 323px,#ff4823 349px,#f13818 368px,#e5290e 392px,#ce1400 443px,#be0a00 481px)"></i><i style="top:354px;left:1061px;width:482px;background:linear-gradient(90deg,#00ffd0 0,#00ffbc 163px,#1dffbb 174px,#3dffbb 184px,#5bffbc 192px,#9dffc6 208px,#b9ffca 216px,#daffca 229px,#fffebb 244px,#ffcb89 260px,#ffa569 275px,#ff7f4d 296px,#ff5e34 323px,#ff4723 349px,#f13718 368px,#e5280e 392px,#cd1300 444px,#be0a00 482px)"></i><i style="top:355px;left:1061px;width:483px;background:linear-gradient(90deg,#00ffd1 0,#00ffbe 163px,#1effbd 174px,#3fffbd 184px,#6effc1 196px,#a1ffc9 208px,#baffcd 215px,#dbffce 228px,#eeffc7 237px,#ffffc0 243px,#ffc98a 260px,#ffa56b 274px,#ff7f4e 295px,#ff5e35 322px,#ff4624 349px,#f13619 368px,#e5280f 392px,#cc1200 446px,#bd0900 483px)"></i><i style="top:356px;left:1061px;width:484px;background:linear-gradient(90deg,#00ffd3 0,#01ffc1 163px,#23ffbf 175px,#40ffbf 184px,#6cffc3 195px,#a5ffcc 208px,#beffd1 215px,#cfffd3 221px,#e0ffd2 229px,#feffc5 242px,#fffdc2 243px,#ffc88b 260px,#ffa46c 274px,#ff7e4f 295px,#ff5d36 322px,#ff4524 349px,#f13619 368px,#e5270f 392px,#c10 447px,#bd0800 484px)"></i><i style="top:357px;left:1062px;width:485px;background:linear-gradient(90deg,#00ffd4 0,#00ffc3 161px,#1effc2 172px,#42ffc2 183px,#6fffc5 194px,#a9ffcf 207px,#c2ffd4 214px,#d3ffd7 220px,#e1ffd6 227px,#fffec7 241px,#ffc68d 259px,#ffa26d 273px,#ff7c4f 294px,#ff5c36 321px,#ff4425 348px,#f1351a 367px,#e4260f 392px,#cb1000 448px,#bc0800 485px)"></i><i style="top:358px;left:1062px;width:486px;background:linear-gradient(90deg,#00ffd6 0,#00ffc5 161px,#22ffc4 173px,#44ffc4 183px,#76ffc9 195px,#a8ffd1 206px,#c3ffd7 213px,#d4ffda 219px,#e2ffda 226px,#fffecc 240px,#ffc791 258px,#ffa26f 272px,#ff7c51 293px,#ff5c38 320px,#ff4425 348px,#f1341a 367px,#e4250f 392px,#cb1000 449px,#bc0700 486px)"></i><i style="top:359px;left:1062px;width:487px;background:linear-gradient(90deg,#00ffd8 0,#01ffc7 161px,#23ffc6 173px,#46ffc7 183px,#75ffcb 194px,#acffd4 206px,#c7ffda 213px,#d7ffde 219px,#e5ffdd 226px,#ffffd1 239px,#ffc592 258px,#ffa372 271px,#ff7f55 290px,#ff613d 314px,#ff4326 348px,#f2341b 366px,#e62611 389px,#ca0f00 451px,#bb0700 487px)"></i><i style="top:360px;left:1063px;width:487px;background:linear-gradient(90deg,#00ffd9 0,#00ffca 159px,#1effc9 170px,#44ffc9 181px,#65ffcb 189px,#b0ffd7 205px,#cbffdd 212px,#dbffe1 218px,#e8ffe1 225px,#f3ffdc 232px,#fffdd3 238px,#ffc493 257px,#ffa173 270px,#ff7e56 289px,#ff5f3e 313px,#ff4226 347px,#f2331b 365px,#e62511 388px,#c90e00 451px,#bb0600 487px)"></i><i style="top:361px;left:1063px;width:488px;background:linear-gradient(90deg,#00ffdb 0,#0fc 159px,#23ffcb 171px,#45ffcb 181px,#7affd0 193px,#b4ffda 205px,#ceffe1 212px,#deffe4 218px,#ebffe4 225px,#fffed9 237px,#ffc294 257px,#ffa276 269px,#ff7e58 288px,#ff5f3f 312px,#ff4127 347px,#f2321c 365px,#e62512 388px,#d81808 418px,#c90d00 453px,#bb0500 488px)"></i><i style="top:362px;left:1063px;width:490px;background:linear-gradient(90deg,#00ffdc 0,#01ffce 159px,#24ffcd 171px,#47ffce 181px,#6affd0 189px,#b3ffdc 204px,#cfffe3 211px,#e0ffe7 217px,#ecffe7 224px,#ffd 236px,#ffecc6 243px,#ffc095 257px,#ffa076 269px,#ff7e5a 287px,#ff5f41 311px,#ff4027 347px,#f2321c 365px,#e62412 388px,#d71708 419px,#c80c00 454px,#ba0500 490px)"></i><i style="top:363px;left:1063px;width:491px;background:linear-gradient(90deg,#00ffde 0,#00ffd1 158px,#22ffd0 170px,#45ffd0 180px,#63ffd2 187px,#85ffd6 194px,#b7ffdf 204px,#d3ffe5 211px,#e3ffea 217px,#edffeb 223px,#ffffe2 235px,#ffebc8 243px,#ffbf97 257px,#ff9e77 269px,#ff7d5a 287px,#ff5f42 310px,#ff3f28 347px,#f2311d 365px,#e62312 388px,#d71608 419px,#c70b00 456px,#b90400 491px)"></i><i style="top:364px;left:1064px;width:491px;background:linear-gradient(90deg,#00ffe0 0,#00ffd3 157px,#23ffd2 169px,#47ffd3 179px,#6affd5 187px,#baffe1 203px,#d6ffe8 210px,#e6ffec 216px,#f0ffed 222px,#f8ffea 229px,#fffee4 234px,#ffeaca 242px,#ffbd98 256px,#ff9d78 268px,#ff7b5b 286px,#ff5e42 309px,#ff3e28 346px,#f2301d 364px,#e62313 387px,#d71508 419px,#c70b00 456px,#b90400 491px)"></i><i style="top:365px;left:1064px;width:492px;background:linear-gradient(90deg,#00ffe1 0,#01ffd6 157px,#24ffd5 169px,#49ffd5 179px,#6cffd7 187px,#bdffe4 203px,#d9ffeb 210px,#e9ffef 216px,#f2fff0 222px,#fffee8 233px,#ffe9cc 242px,#ffbc99 256px,#ff9d7b 267px,#ff7d5e 284px,#ff5e44 308px,#ff3d29 346px,#f22f1e 364px,#e62213 387px,#d71509 418px,#c70b01 455px,#b90300 492px)"></i><i style="top:366px;left:1064px;width:494px;background:linear-gradient(90deg,#00ffe3 0,#00ffd8 156px,#23ffd7 168px,#4affd8 179px,#6effda 187px,#bcffe5 202px,#d9ffec 209px,#eefff2 217px,#f6fff2 224px,#ffffec 232px,#ffebd1 241px,#ffb797 257px,#ff9979 268px,#ff7a5d 285px,#ff5d44 308px,#ff3c29 346px,#f12e1d 365px,#e52113 388px,#d61409 420px,#c70a01 457px,#b80300 494px)"></i><i style="top:367px;left:1064px;width:495px;background:linear-gradient(90deg,#00ffe5 0,#00ffda 156px,#27ffda 169px,#4cffda 179px,#71ffdc 187px,#bfffe8 202px,#dfe 209px,#f0fff4 217px,#f8fff4 224px,#fffff0 231px,#ffecd6 240px,#ffb99b 256px,#ff987a 268px,#ff785e 285px,#ff5b45 308px,#ff3b2a 346px,#f12d1e 365px,#e52013 388px,#d61409 420px,#c70901 457px,#b80200 495px)"></i><i style="top:368px;left:1065px;width:495px;background:linear-gradient(90deg,#00ffe7 0,#01ffdd 155px,#28ffdc 168px,#4effdd 178px,#73ffdf 186px,#c2ffea 201px,#dffff0 208px,#f2fff6 216px,#f9fff6 223px,#fffef1 230px,#ffecd8 239px,#ffb499 256px,#ff967b 267px,#ff775e 284px,#ff5a46 307px,#ff3a2a 345px,#f43021 359px,#e52014 387px,#d61309 419px,#c70901 455px,#b70200 495px)"></i><i style="top:369px;left:1065px;width:496px;background:linear-gradient(90deg,#00ffe8 0,#00ffe0 154px,#23ffdf 166px,#4bffdf 177px,#70ffe1 185px,#c5ffec 201px,#e2fff2 208px,#f4fff7 216px,#fafff8 223px,#fffff4 229px,#fff7e9 234px,#ffebd9 239px,#ffb39a 256px,#ff957c 267px,#ff7760 283px,#ff5a47 306px,#ff392a 345px,#f42f21 359px,#e51f14 387px,#d6130a 419px,#c70902 455px,#b70100 496px)"></i><i style="top:370px;left:1065px;width:497px;background:linear-gradient(90deg,#00ffea 0,#00ffe2 154px,#27ffe1 167px,#4dffe2 177px,#72ffe4 185px,#c3ffed 200px,#e1fff3 207px,#edfff6 211px,#f5fff9 215px,#fffff7 228px,#fff8ed 233px,#ffeadb 239px,#ffb29b 256px,#ff937c 267px,#ff7561 283px,#ff5947 306px,#ff392b 345px,#f42e22 359px,#e51f15 387px,#c70802 455px,#b60100 497px)"></i><i style="top:371px;left:1066px;width:498px;background:linear-gradient(90deg,#00ffec 0,#01ffe5 153px,#29ffe4 166px,#4fffe4 176px,#74ffe6 184px,#c6ffef 199px,#e4fff5 206px,#effff8 210px,#f7fffa 214px,#fffff9 226px,#fff9f1 231px,#ffece0 237px,#ffb09c 255px,#ff917d 266px,#ff7260 283px,#ff5747 306px,#ff382b 344px,#f42d22 359px,#e51d15 387px,#c70802 455px,#b60000 498px)"></i><i style="top:372px;left:1066px;width:499px;background:linear-gradient(90deg,#0fe 0,#00ffe7 152px,#23ffe7 164px,#4cffe7 175px,#76ffe9 184px,#c8fff1 199px,#e6fff6 206px,#f1fff9 210px,#f8fffb 214px,#fffffb 225px,#fff9f2 231px,#ffece1 237px,#ffaf9d 255px,#ff8e7b 267px,#ff7161 283px,#ff5548 306px,#ff372c 344px,#f42c22 359px,#e41c15 388px,#c60702 456px,#b50000 499px)"></i><i style="top:373px;left:1066px;width:500px;background:linear-gradient(90deg,#00fff0 0,#00ffea 152px,#2bffe9 166px,#52ffea 176px,#78ffeb 184px,#c6fff2 198px,#e1fff6 204px,#f5fffb 211px,#fdfffd 219px,#fffdf9 227px,#fff1e8 235px,#ffdfd3 241px,#ffaa9a 256px,#ff9888 262px,#ff8878 269px,#ff6d5f 285px,#ff5347 307px,#ff362c 344px,#f42b23 359px,#e41b15 389px,#c60702 457px,#b50000 500px)"></i><i style="top:374px;left:1067px;width:500px;background:linear-gradient(90deg,#00fff1 0,#01ffec 151px,#29ffec 164px,#4fffec 174px,#75ffee 182px,#c8fff4 197px,#e3fff8 203px,#f7fffc 210px,#fdfffe 217px,#fffdfa 226px,#fff0e9 234px,#ffded4 240px,#ffa99b 255px,#ff9789 261px,#ff8678 268px,#ff6b5f 284px,#ff5147 307px,#ff352d 343px,#f32a22 359px,#e31a14 390px,#c50602 458px,#b50000 500px)"></i><i style="top:375px;left:1067px;width:501px;background:linear-gradient(90deg,#00fff3 0,#00ffef 150px,#27ffef 163px,#51ffef 174px,#77fff0 182px,#cafff6 197px,#e5fff9 203px,#f6fffc 209px,#fefffe 216px,#fffefc 225px,#fff2ed 233px,#ffded5 240px,#ffa79c 255px,#ff9589 261px,#ff8479 268px,#ff6a60 284px,#ff5047 307px,#ff342d 343px,#f02620 364px,#e21914 391px,#c50502 458px,#b40000 501px)"></i><i style="top:376px;left:1067px;width:503px;background:linear-gradient(90deg,#00fff5 0,#00fff2 150px,#2cfff2 164px,#52fff2 174px,#79fff3 182px,#ccfff8 197px,#e3fffa 202px,#f7fffd 209px,#fefffe 216px,#fffefc 225px,#fff2ee 233px,#ffe0da 239px,#ffa299 256px,#ff9187 262px,#ff8178 269px,#ff675f 285px,#ff4e47 308px,#ff332e 343px,#f02520 365px,#e21814 392px,#c40502 460px,#b30000 503px)"></i><i style="top:377px;left:1068px;width:503px;background:linear-gradient(90deg,#00fff7 0,#01fff5 149px,#2dfff4 163px,#54fff5 173px,#7bfff5 181px,#c8fff9 195px,#e4fffb 201px,#f6fffd 207px,#feffff 214px,#fffefd 224px,#fff1ee 232px,#ffdfdb 238px,#ffa19a 255px,#ff8f88 261px,#ff7f78 268px,#ff665f 284px,#ff4d48 307px,#ff322e 342px,#f02420 364px,#e11714 392px,#c40402 460px,#b30000 503px)"></i><i style="top:378px;left:1068px;width:504px;background:linear-gradient(90deg,#00fff9 0,#00fff7 148px,#27fff7 161px,#51fff7 172px,#7cfff8 181px,#cafffb 195px,#e5fffc 201px,#f7fffe 207px,#feffff 214px,#fffdfd 224px,#fff1ef 232px,#ffdfdb 238px,#ff9f9a 255px,#ff8e89 261px,#ff7e79 268px,#ff635f 285px,#ff4b47 308px,#ff322f 342px,#ef2320 365px,#e01614 394px,#c30302 461px,#b30000 504px)"></i><i style="top:379px;left:1068px;width:505px;background:linear-gradient(90deg,#00fffb 0,#00fffa 148px,#2cfffa 162px,#53fffa 172px,#74fffb 179px,#c6fffc 194px,#e3fffd 200px,#f5fffe 206px,#feffff 213px,#fffdfd 224px,#fff3f2 231px,#ffdedc 238px,#ff9e9b 255px,#ff8a87 262px,#ff7a77 269px,#ff625f 285px,#ff4a48 308px,#ff312f 342px,#ef2221 365px,#e01514 394px,#c30302 461px,#b20000 505px)"></i><i style="top:380px;left:1069px;width:505px;background:linear-gradient(90deg,#00fffd 0,#01fffd 147px,#2dfffd 161px,#54fffd 171px,#7afffd 179px,#cdfffe 194px,#e4fffe 199px,#f6ffff 205px,#feffff 212px,#fffdfd 223px,#fff2f2 230px,#ffe0e0 236px,#ff9c9b 254px,#ff8887 261px,#ff7978 268px,#ff5f5f 285px,#ff4847 308px,#ff3030 341px,#ef2121 365px,#df1414 395px,#c30202 462px,#b20000 505px)"></i><i style="top:381px;left:1069px;width:507px;background:linear-gradient(90deg,#0ff 0,#00feff 146px,#2bfeff 160px,#55feff 171px,#7cfeff 179px,#cefeff 194px,#e4feff 199px,#f6ffff 205px,#feffff 212px,#fffdfd 223px,#fff2f2 230px,#ffdfe0 236px,#ff9a9c 254px,#ff8688 261px,#ff7778 268px,#ff5e5f 285px,#ff4748 308px,#ff2f30 341px,#ef2021 365px,#df1314 396px,#c10102 466px,#b10000 507px)"></i><i style="top:382px;left:1069px;width:508px;background:linear-gradient(90deg,#00fdff 0,#00fbff 146px,#2cfbff 160px,#56fbff 171px,#7cfbff 179px,#cefcff 194px,#e4fdff 199px,#f6feff 205px,#feffff 212px,#fffdfd 223px,#fff1f2 230px,#ffdee0 236px,#ff999c 254px,#ff878b 260px,#ff777b 267px,#ff5f62 283px,#ff4649 307px,#ff2e30 341px,#ef1f21 365px,#df1214 396px,#c00002 469px,#b10000 508px)"></i><i style="top:383px;left:1070px;width:508px;background:linear-gradient(90deg,#00fbff 0,#01f8ff 145px,#2df8ff 159px,#56f8ff 170px,#7cf8ff 178px,#cdfbff 193px,#e4fcff 198px,#f6fdff 204px,#feffff 211px,#fffdfe 221px,#fff0f2 229px,#ffdde0 235px,#ff979d 253px,#ff868b 259px,#ff767b 266px,#ff5e63 282px,#ff454a 306px,#ff2d31 340px,#ee1e21 365px,#de1114 396px,#c00002 468px,#b00000 508px)"></i><i style="top:384px;left:1070px;width:509px;background:linear-gradient(90deg,#00f9ff 0,#00f6ff 144px,#2af5ff 158px,#53f5ff 169px,#7df6ff 178px,#cdf9ff 193px,#e7fbff 199px,#f8fdff 205px,#feffff 212px,#fffcfd 222px,#ffeff2 229px,#ffdbe0 235px,#ff99a0 252px,#ff878e 258px,#ff767e 265px,#ff5e64 281px,#ff454b 305px,#ff2c31 340px,#ee1d22 365px,#de1114 396px,#c10002 466px,#b00000 509px)"></i><i style="top:385px;left:1070px;width:511px;background:linear-gradient(90deg,#00f7ff 0,#00f3ff 144px,#2bf2ff 158px,#53f2ff 169px,#7df3ff 178px,#cdf7ff 193px,#e7faff 199px,#f7fcff 205px,#fefeff 212px,#fffcfd 221px,#ffeef1 229px,#ffdae0 235px,#ff97a0 252px,#ff858f 258px,#ff757e 265px,#ff5c65 281px,#ff444b 305px,#ff2c32 340px,#ed1c22 366px,#dd1014 398px,#c20003 463px,#af0000 511px)"></i><i style="top:386px;left:1070px;width:512px;background:linear-gradient(90deg,#00f5ff 0,#00f0ff 143px,#28efff 157px,#54efff 169px,#7df0ff 178px,#ccf5ff 193px,#e6f9ff 199px,#f8fcff 206px,#fefeff 213px,#fffafc 222px,#ffecf1 229px,#ffd4dc 236px,#ff99a4 251px,#ff8692 257px,#ff7581 264px,#ff5c67 280px,#ff444d 304px,#ff2b32 340px,#ed1c22 366px,#dd0f14 398px,#c30004 461px,#b90000 485px,#af0000 512px)"></i><i style="top:387px;left:1071px;width:512px;background:linear-gradient(90deg,#00f3ff 0,#00edff 142px,#29edff 156px,#54ecff 168px,#7dedff 177px,#ccf3ff 192px,#e5f7ff 198px,#f8fbff 205px,#fefdff 212px,#fff9fc 221px,#ffebf0 228px,#ffd2db 235px,#ff97a4 250px,#ff8492 256px,#ff7481 263px,#ff5b67 279px,#ff434d 303px,#ff2a33 339px,#ed1b22 365px,#dd0e14 398px,#c30004 458px,#b90000 485px,#ae0000 512px)"></i><i style="top:388px;left:1071px;width:513px;background:linear-gradient(90deg,#00f1ff 0,#00ebff 142px,#2deaff 157px,#55eaff 168px,#7debff 177px,#cbf1ff 192px,#e5f6ff 198px,#f7faff 205px,#fffdff 214px,#fff7fa 222px,#ffe6ed 229px,#ffd0db 235px,#ff95a4 250px,#ff8292 256px,#ff7484 262px,#ff5b69 278px,#ff424f 302px,#ff2933 339px,#ed1a23 365px,#dd0e14 398px,#c40005 456px,#b80000 486px,#ae0000 513px)"></i><i style="top:389px;left:1071px;width:514px;background:linear-gradient(90deg,#00efff 0,#00e8ff 141px,#27e7ff 155px,#55e7ff 168px,#7de8ff 177px,#cff0ff 193px,#e7f5ff 199px,#f8faff 206px,#fffcff 215px,#fff5fa 222px,#ffe4ed 229px,#ffceda 235px,#ff96a8 249px,#ff8395 255px,#ff7586 261px,#ff5b6b 277px,#ff414f 302px,#ff2834 339px,#ed1a23 365px,#dd0d14 399px,#c50006 454px,#b80000 488px,#ae0000 514px)"></i><i style="top:390px;left:1072px;width:515px;background:linear-gradient(90deg,#00edff 0,#00e5ff 140px,#2be4ff 155px,#56e4ff 167px,#7de5ff 176px,#ceeeff 192px,#e6f3ff 198px,#f7f8ff 205px,#fffbff 214px,#fff3f9 221px,#ffe2ec 228px,#ffccda 234px,#ff94a8 248px,#ff8195 254px,#ff7387 260px,#ff596b 276px,#ff4050 301px,#ff2734 338px,#ed1823 365px,#dc0c14 399px,#c60006 451px,#b70000 488px,#ad0000 515px)"></i><i style="top:391px;left:1072px;width:516px;background:linear-gradient(90deg,#00ecff 0,#00e3ff 140px,#2ce2ff 155px,#56e1ff 167px,#74e2ff 174px,#9be5ff 182px,#cdecff 192px,#e5f1ff 198px,#f6f7ff 205px,#fff9ff 214px,#fff1f9 221px,#ffdfeb 228px,#ffc9d9 234px,#ff96ab 247px,#ff8298 253px,#ff7389 259px,#ff596d 275px,#ff4051 300px,#ff2634 338px,#ef1925 362px,#df0d17 393px,#c70007 449px,#b60000 490px,#ad0000 516px)"></i><i style="top:392px;left:1072px;width:517px;background:linear-gradient(90deg,#00eaff 0,#00e0ff 139px,#2adfff 154px,#56dfff 167px,#74e0ff 174px,#9be3ff 182px,#cceaff 192px,#e4efff 198px,#f5f5ff 205px,#fff8ff 214px,#ffeff8 221px,#ffddea 228px,#ffc7d8 234px,#ff93ab 247px,#ff8199 253px,#ff728a 259px,#ff586e 275px,#ff3f52 300px,#ff2635 338px,#ef1825 362px,#df0d17 393px,#c80008 446px,#b60000 491px,#ac0000 517px)"></i><i style="top:393px;left:1073px;width:517px;background:linear-gradient(90deg,#00e8ff 0,#00deff 138px,#2edcff 154px,#57dcff 166px,#74ddff 173px,#9ae0ff 181px,#cbe8ff 191px,#e2edff 197px,#f4f3ff 204px,#fff6ff 213px,#ffedf7 220px,#ffdae9 227px,#ff91ab 246px,#ff708a 258px,#ff566e 274px,#ff3e52 299px,#ff2535 337px,#ef1826 361px,#df0c18 392px,#c90009 443px,#b50000 492px,#ac0000 517px)"></i><i style="top:394px;left:1073px;width:518px;background:linear-gradient(90deg,#00e6ff 0,#00dbff 138px,#2edaff 154px,#57d9ff 166px,#74daff 173px,#9df 181px,#c9e5ff 191px,#e1ebff 197px,#f3f1ff 204px,#fff4ff 213px,#ffeaf7 220px,#ffd7e8 227px,#ff8fab 246px,#ff6e8a 258px,#ff556f 274px,#ff3c52 300px,#ff2436 337px,#ee1725 362px,#de0b18 393px,#c90009 441px,#b50000 493px,#ac0000 518px)"></i><i style="top:395px;left:1073px;width:520px;background:linear-gradient(90deg,#00e4ff 0,#00d9ff 137px,#26d7ff 151px,#54d6ff 165px,#74d7ff 173px,#99dbff 181px,#c8e3ff 191px,#e0e9ff 197px,#f2efff 204px,#fff2ff 213px,#ffe7f6 220px,#ffd4e8 227px,#ff8daa 246px,#ff6d8b 258px,#ff536e 275px,#ff3b52 300px,#ff2336 337px,#ee1626 362px,#de0a17 394px,#ca000a 439px,#b40000 495px,#ab0000 520px)"></i><i style="top:396px;left:1074px;width:520px;background:linear-gradient(90deg,#00e2ff 0,#00d6ff 136px,#2dd4ff 152px,#58d4ff 165px,#74d5ff 172px,#98d8ff 180px,#c7e0ff 190px,#dee6ff 196px,#f1ecff 203px,#ffefff 212px,#ffe4f5 219px,#ffd1e7 226px,#ff8ead 244px,#ff6d8d 256px,#ff5270 273px,#ff3a53 299px,#ff2237 336px,#ee1526 361px,#de0a18 393px,#cb000b 436px,#b40000 495px,#ab0000 520px)"></i><i style="top:397px;left:1074px;width:521px;background:linear-gradient(90deg,#00e0ff 0,#00d4ff 136px,#30d2ff 153px,#58d1ff 165px,#98d5ff 180px,#c6ddff 190px,#dde3ff 196px,#f2eaff 204px,#ffecfe 213px,#ffdff3 220px,#ffcde6 226px,#ff8bad 244px,#ff6b8d 256px,#ff5d7e 264px,#ff506f 274px,#ff3852 300px,#ff2237 336px,#ed1426 362px,#dd0918 394px,#cc000c 434px,#b30000 497px,#ab0000 521px)"></i><i style="top:398px;left:1074px;width:522px;background:linear-gradient(90deg,#00deff 0,#00d2ff 135px,#28d0ff 150px,#55cfff 164px,#74cfff 172px,#97d3ff 180px,#c4dbff 190px,#dfe2ff 197px,#f1e8ff 204px,#ffe9fe 213px,#ffdbf2 220px,#ffcae5 226px,#ff89ad 244px,#ff698e 256px,#ff5b7e 264px,#ff4f6f 274px,#ff3753 300px,#ff2137 336px,#ed1426 362px,#dd0918 394px,#cd000d 431px,#b50001 493px,#ab0000 522px)"></i><i style="top:399px;left:1075px;width:523px;background:linear-gradient(90deg,#0df 0,#00cfff 134px,#2ccdff 150px,#5cf 163px,#74cdff 171px,#96d0ff 179px,#c3d8ff 189px,#dddfff 196px,#f0e5ff 203px,#ffe6fe 212px,#ffd8f2 219px,#ffc6e4 225px,#ff86ad 243px,#ff688e 255px,#ff5a7f 263px,#ff4c6e 274px,#ff3552 300px,#ff2038 335px,#ed1327 361px,#dd0818 395px,#ce000d 428px,#b50001 491px,#ab0000 523px)"></i><i style="top:400px;left:1075px;width:524px;background:linear-gradient(90deg,#00dbff 0,#00cdff 134px,#2fcaff 151px,#59c9ff 164px,#96cdff 179px,#c2d5ff 189px,#dcdcff 196px,#efe1ff 203px,#ffe2fe 212px,#ffd4f1 219px,#ffc3e3 225px,#ff84ac 243px,#ff668e 255px,#ff587f 263px,#ff4b6f 274px,#ff3453 300px,#ff1f38 335px,#ed1227 361px,#dd0718 395px,#cf000e 426px,#c00006 463px,#b10000 501px,#ab0000 524px)"></i><i style="top:401px;left:1075px;width:525px;background:linear-gradient(90deg,#00d9ff 0,#00caff 133px,#27c8ff 148px,#56c7ff 163px,#95caff 179px,#c0d2ff 189px,#dad9ff 196px,#eedeff 203px,#ffdffe 212px,#ffcbec 221px,#ffb5da 228px,#ff81ac 243px,#ff648e 255px,#ff4a6f 274px,#ff3252 301px,#ff1e39 335px,#ed1127 362px,#dc0618 396px,#d0000f 424px,#bf0006 464px,#ab0000 517px,#ab0000 525px)"></i><i style="top:402px;left:1076px;width:525px;background:linear-gradient(90deg,#00d7ff 0,#00c8ff 132px,#2bc6ff 148px,#56c4ff 162px,#95c7ff 178px,#bfcfff 188px,#d9d5ff 195px,#eddbff 202px,#ffdbfe 211px,#ffc1e6 222px,#ff7ca9 243px,#ff628f 254px,#ff547e 263px,#ff476e 274px,#ff3152 301px,#ff1e39 334px,#ed1127 361px,#dc0518 396px,#d10010 421px,#bf0006 464px,#ab0000 516px,#ab0000 525px)"></i><i style="top:403px;left:1076px;width:526px;background:linear-gradient(90deg,#00d5ff 0,#00c6ff 132px,#40c2ff 155px,#7bc2ff 172px,#a5c7ff 182px,#d4d1ff 194px,#ecd7ff 202px,#ffd8fe 211px,#ffc0e8 221px,#ff7aa9 243px,#ff618f 254px,#ff466f 274px,#ff2f51 302px,#ff1d3a 334px,#ed1028 361px,#dc0518 396px,#d20011 418px,#bf0006 464px,#ab0000 516px,#ab0000 526px)"></i><i style="top:404px;left:1076px;width:528px;background:linear-gradient(90deg,#00d4ff 0,#00c4ff 131px,#3bc0ff 153px,#77c0ff 171px,#a0c3ff 181px,#d3ceff 194px,#ebd3ff 202px,#ffd4fe 211px,#ffbce7 221px,#ff7aac 242px,#ff5f8f 254px,#ff517f 263px,#ff446e 275px,#ff2d51 303px,#ff1c3a 334px,#ec0f28 362px,#db0418 398px,#d30012 416px,#be0006 466px,#ab0000 516px,#ab0000 528px)"></i><i style="top:405px;left:1077px;width:528px;background:linear-gradient(90deg,#00d2ff 0,#00c1ff 130px,#3ebdff 153px,#77bdff 170px,#9fc1ff 180px,#d1caff 193px,#ead0ff 201px,#ffd0fe 210px,#ffb8e6 220px,#ff77ab 241px,#ff5d8f 253px,#ff436f 274px,#ff2c50 303px,#ff1b3a 333px,#ec0e28 361px,#da0318 398px,#d40013 413px,#be0006 466px,#ab0000 515px,#ab0000 528px)"></i><i style="top:406px;left:1077px;width:529px;background:linear-gradient(90deg,#00d0ff 0,#00bfff 130px,#2bbcff 146px,#51baff 159px,#8ebcff 176px,#d0c7ff 193px,#ecf 203px,#ffccfe 210px,#ffb4e6 220px,#ff78ae 240px,#ff5d92 252px,#ff4e80 262px,#ff416f 274px,#ff2a50 304px,#ff1a3b 333px,#ec0e28 361px,#da0318 398px,#d40014 411px,#be0006 466px,#ab0000 515px,#ab0000 529px)"></i><i style="top:407px;left:1077px;width:530px;background:linear-gradient(90deg,#00ceff 0,#00bdff 129px,#23baff 143px,#52b8ff 159px,#8eb9ff 176px,#cfc3ff 193px,#edc8ff 203px,#ffc8ff 210px,#ffb0e5 220px,#ff75ae 240px,#ff5c92 252px,#ff4d80 262px,#ff406f 274px,#ff2950 305px,#ff1a3b 333px,#ec0d28 362px,#da0218 399px,#bd0006 467px,#ab0000 516px,#ab0000 530px)"></i><i style="top:408px;left:1078px;width:530px;background:linear-gradient(90deg,#0cf 0,#0bf 128px,#29b8ff 144px,#52b5ff 158px,#8eb6ff 175px,#d1c0ff 193px,#edc4ff 202px,#ffc4ff 209px,#ffaee7 218px,#ff73ae 239px,#ff5890 252px,#ff497e 263px,#ff3b6b 277px,#ff244b 310px,#ff193c 332px,#eb0b27 363px,#d80117 402px,#c20009 455px,#ab0000 514px,#ab0000 530px)"></i><i style="top:409px;left:1078px;width:532px;background:linear-gradient(90deg,#00cbff 0,#00b8ff 128px,#2db5ff 145px,#56b3ff 159px,#91b4ff 176px,#d0bdff 193px,#ecc0ff 202px,#ffc0ff 209px,#ffaae7 218px,#ff73b0 238px,#ff5791 252px,#ff487e 263px,#ff3a6b 277px,#ff234c 310px,#ff183c 332px,#eb0b28 363px,#d80017 403px,#c20009 455px,#ab0000 514px,#ab0000 532px)"></i><i style="top:410px;left:1078px;width:533px;background:linear-gradient(90deg,#00c9ff 0,#00b6ff 127px,#25b3ff 142px,#56b0ff 159px,#91b1ff 176px,#cfb9ff 193px,#ffbcff 209px,#ff70b0 238px,#ff5591 252px,#ff477e 263px,#ff396c 277px,#ff224c 310px,#ff173d 332px,#eb0a28 363px,#d80017 403px,#c20009 454px,#ab0000 514px,#ab0000 533px)"></i><i style="top:411px;left:1079px;width:533px;background:linear-gradient(90deg,#00c7ff 0,#00b4ff 126px,#2bb1ff 143px,#5aaeff 159px,#90aeff 175px,#ceb5ff 192px,#ffb8ff 208px,#ff6eb0 237px,#ff5391 251px,#ff457f 262px,#ff386c 276px,#ff214c 310px,#ff163d 331px,#eb0a28 362px,#d70017 403px,#c2000a 453px,#ab0000 513px,#ab0000 533px)"></i><i style="top:412px;left:1079px;width:533px;background:linear-gradient(90deg,#00c6ff 0,#00b2ff 126px,#2faeff 144px,#5aacff 159px,#90acff 175px,#cdb2ff 192px,#ffb3ff 208px,#ff6db2 236px,#ff5292 251px,#ff447f 262px,#ff376d 276px,#ff204c 310px,#ff163d 331px,#eb0929 362px,#d70017 403px,#c2000a 453px,#ab0000 513px,#ab0000 533px)"></i><i style="top:413px;left:1079px;width:533px;background:linear-gradient(90deg,#00c4ff 0,#00b0ff 125px,#27adff 141px,#57a9ff 158px,#90a9ff 175px,#d3afff 194px,#ffafff 208px,#ffadfc 209px,#ff6bb2 236px,#ff5092 251px,#ff427e 263px,#ff356c 277px,#ff1f4c 311px,#ff153e 331px,#eb0829 362px,#d70018 403px,#c2000a 453px,#ab0000 513px,#ab0000 533px)"></i><i style="top:414px;left:1080px;width:532px;background:linear-gradient(90deg,#00c2ff 0,#00aeff 124px,#2daaff 142px,#5ba7ff 158px,#93a6ff 175px,#d5acff 194px,#feabff 207px,#ffa9fd 208px,#ff69b2 235px,#ff589e 244px,#ff4b8d 253px,#ff326a 278px,#ff1e4c 310px,#ff143e 330px,#eb0829 361px,#dd001c 390px,#d70018 402px,#c2000a 452px,#ab0001 512px,#ab0000 532px)"></i><i style="top:415px;left:1080px;width:531px;background:linear-gradient(90deg,#00c0ff 0,#00acff 124px,#31a8ff 143px,#5ea4ff 159px,#93a4ff 175px,#d5a8ff 194px,#fea7ff 207px,#ffa6fd 208px,#ff84d4 222px,#ff66b2 235px,#ff4a8f 252px,#ff316b 278px,#ff1d4d 310px,#ff133f 330px,#eb072a 361px,#dd001d 388px,#d80019 401px,#c3000b 451px,#ab0001 512px,#ab0000 531px)"></i><i style="top:416px;left:1080px;width:528px;background:linear-gradient(90deg,#00bfff 0,#0af 123px,#29a6ff 140px,#5ca2ff 158px,#93a1ff 175px,#e4a5ff 199px,#ffa2fd 208px,#ff6ab9 232px,#ff57a2 242px,#ff498f 252px,#ff316c 277px,#ff1c4e 309px,#ff133f 330px,#eb072b 360px,#df001f 385px,#d8001a 399px,#c3000b 450px,#ab0001 512px,#ab0000 528px)"></i><i style="top:417px;left:1081px;width:525px;background:linear-gradient(90deg,#00bdff 0,#00a8ff 122px,#2fa4ff 141px,#5fa0ff 158px,#929eff 174px,#e4a1ff 198px,#ff9efd 207px,#ff6abc 230px,#ff57a5 240px,#ff4991 250px,#ff306e 275px,#ff1c4f 307px,#ff123f 329px,#f40b34 344px,#e50324 372px,#d9001a 397px,#c3000b 449px,#ab0001 511px,#ab0000 525px)"></i><i style="top:418px;left:1081px;width:522px;background:linear-gradient(90deg,#0bf 0,#00a6ff 122px,#33a1ff 142px,#629dff 159px,#e39eff 198px,#ff9afd 207px,#ff69be 229px,#ff57a7 239px,#ff4792 250px,#ff2f6e 275px,#ff1c50 306px,#ff1140 329px,#f40b34 344px,#e50225 372px,#da001b 395px,#c2000b 452px,#ab0001 511px,#ab0000 522px)"></i><i style="top:419px;left:1081px;width:520px;background:linear-gradient(90deg,#00baff 0,#00a4ff 121px,#2ba0ff 139px,#639bff 159px,#e39aff 198px,#ff97fd 207px,#ff80df 217px,#ff67be 229px,#ff55a7 239px,#ff4692 250px,#ff2e6f 275px,#ff1b51 306px,#ff1040 329px,#f40a35 344px,#e40124 374px,#da001c 394px,#c3000c 450px,#ab0002 511px,#ab0000 520px)"></i><i style="top:420px;left:1082px;width:516px;background:linear-gradient(90deg,#00b8ff 0,#00a2ff 120px,#319dff 140px,#69f 159px,#e297ff 197px,#ff93fd 206px,#ff7ddf 216px,#ff66c1 227px,#f5a 237px,#ff4594 248px,#ff2e70 273px,#ff1b52 304px,#ff1041 328px,#f10832 348px,#e30024 374px,#db001d 392px,#c3000c 448px,#ab0001 516px)"></i><i style="top:421px;left:1082px;width:514px;background:linear-gradient(90deg,#00b6ff 0,#00a0ff 120px,#349bff 141px,#6696ff 159px,#df93ff 196px,#ff90fe 206px,#ff7adf 216px,#ff64c1 227px,#ff53aa 237px,#ff4495 248px,#ff2d71 273px,#ff1a52 304px,#ff0f41 328px,#f40936 343px,#e40025 372px,#db001d 391px,#c4000d 446px,#ab0001 514px)"></i><i style="top:422px;left:1082px;width:511px;background:linear-gradient(90deg,#00b5ff 0,#009eff 119px,#2d9aff 138px,#6794ff 159px,#9591ff 174px,#ff8dfe 206px,#ff79e1 215px,#ff63c4 226px,#ff4497 247px,#ff2c72 272px,#ff1954 303px,#ff0e41 328px,#f40837 342px,#e50027 370px,#dc001e 389px,#c5000e 444px,#ab0002 511px)"></i><i style="top:423px;left:1083px;width:508px;background:linear-gradient(90deg,#00b3ff 0,#009cff 118px,#3397ff 139px,#6a92ff 159px,#988fff 174px,#ff89fe 205px,#ff76e1 214px,#ff61c4 225px,#ff4297 246px,#ff2b73 271px,#ff1854 302px,#ff0d42 327px,#e60028 367px,#dc001f 388px,#c5000e 442px,#ac0002 508px)"></i><i style="top:424px;left:1083px;width:505px;background:linear-gradient(90deg,#00b1ff 0,#019aff 118px,#3695ff 140px,#6a90ff 159px,#9f8cff 176px,#ff86fe 205px,#ff74e2 214px,#ff5fc4 225px,#ff4197 246px,#ff2a73 271px,#ff1855 301px,#ff0d42 327px,#e70029 365px,#dd0020 386px,#c6000f 439px,#ad0003 505px)"></i><i style="top:425px;left:1084px;width:502px;background:linear-gradient(90deg,#00b0ff 0,#09f 116px,#2f93ff 136px,#6b8dff 158px,#a28aff 176px,#ff83fe 204px,#ff71e2 213px,#ff5ec6 223px,#ff4dad 234px,#ff3f98 245px,#ff2974 270px,#ff1756 300px,#ff0c43 326px,#e8002b 362px,#dd0020 385px,#c6000f 438px,#ad0003 502px)"></i><i style="top:426px;left:1084px;width:499px;background:linear-gradient(90deg,#00aeff 0,#0097ff 116px,#3591ff 138px,#6e8bff 159px,#a887ff 178px,#ff80ff 204px,#ff6ee2 213px,#ff5cc7 223px,#ff3f9a 244px,#ff2975 269px,#ff1757 299px,#ff0b43 326px,#ea002c 359px,#de0021 383px,#c70010 435px,#ae0004 499px)"></i><i style="top:427px;left:1084px;width:497px;background:linear-gradient(90deg,#00adff 0,#0195ff 116px,#388fff 139px,#6e89ff 159px,#ac84ff 179px,#ff7dff 204px,#ff6be2 213px,#ff5ac7 223px,#ff3e9a 244px,#ff2977 268px,#ff1658 298px,#ff0a43 326px,#eb002e 357px,#de0022 382px,#c80011 434px,#af0004 497px)"></i><i style="top:428px;left:1085px;width:493px;background:linear-gradient(90deg,#00abff 0,#0093ff 114px,#318eff 135px,#6f87ff 158px,#af81ff 179px,#ff7bff 203px,#ff69e2 212px,#ff58c7 222px,#ff3c9b 243px,#ff2777 267px,#ff1659 297px,#ff0a44 325px,#ec002f 354px,#df0023 380px,#c90011 431px,#b00005 493px)"></i><i style="top:429px;left:1085px;width:491px;background:linear-gradient(90deg,#00a9ff 0,#0091ff 114px,#378bff 137px,#7284ff 159px,#b27fff 180px,#ff78ff 203px,#ff67e2 212px,#ff57ca 221px,#ff3c9d 242px,#ff2779 266px,#ff155a 296px,#ff0944 325px,#ed0031 352px,#df0023 379px,#c90012 429px,#b10006 491px)"></i><i style="top:430px;left:1085px;width:488px;background:linear-gradient(90deg,#00a8ff 0,#0190ff 114px,#3589ff 136px,#6d83ff 157px,#af7dff 179px,#ff75ff 203px,#ff73fc 204px,#ff62df 213px,#ff54c7 222px,#ff399b 243px,#ff2578 267px,#ff145a 296px,#ff0844 325px,#ee0032 350px,#e00024 378px,#ca0013 428px,#b20006 488px)"></i><i style="top:431px;left:1086px;width:485px;background:linear-gradient(90deg,#00a6ff 0,#008eff 112px,#3088ff 133px,#6d81ff 156px,#af7aff 178px,#fe72ff 202px,#ff71fc 203px,#ff60e0 212px,#ff52c8 221px,#ff389c 242px,#ff2479 266px,#ff135b 295px,#ff0745 324px,#ef0034 347px,#e00024 377px,#ca0013 426px,#b30007 485px)"></i><i style="top:432px;left:1086px;width:482px;background:linear-gradient(90deg,#00a5ff 0,#008cff 112px,#3685ff 135px,#707fff 157px,#a579ff 175px,#fe70ff 202px,#ff6efc 203px,#ff5ee0 212px,#ff50c8 221px,#ff389e 241px,#ff247a 265px,#ff135c 294px,#ff0745 324px,#f10036 344px,#e10026 375px,#cc0014 423px,#b40007 482px)"></i><i style="top:433px;left:1086px;width:480px;background:linear-gradient(90deg,#00a3ff 0,#018aff 112px,#3784ff 135px,#717dff 157px,#a976ff 176px,#fe6dff 202px,#ff6cfd 203px,#ff5ce0 212px,#ff4ec8 221px,#ff369e 241px,#ff237b 265px,#ff125c 294px,#ff0646 324px,#f20038 342px,#e10026 375px,#cc0015 423px,#b50008 480px)"></i><i style="top:434px;left:1087px;width:476px;background:linear-gradient(90deg,#00a1ff 0,#0089ff 110px,#3282ff 132px,#6e7bff 155px,#a974ff 175px,#fe6bff 201px,#ff69fd 202px,#ff5ae0 211px,#ff4cc8 220px,#ff359f 240px,#ff227b 264px,#ff125e 292px,#ff0546 323px,#f30039 339px,#e20027 372px,#cd0016 419px,#b60009 476px)"></i><i style="top:435px;left:1087px;width:473px;background:linear-gradient(90deg,#00a0ff 0,#0087ff 110px,#3580ff 133px,#7179ff 156px,#ac72ff 176px,#ff67fd 202px,#ff59e3 210px,#ff4ccb 219px,#ff35a1 239px,#ff217d 263px,#ff115f 291px,#ff0446 323px,#f4003b 337px,#e20028 371px,#ce0016 417px,#b70009 473px)"></i><i style="top:436px;left:1087px;width:471px;background:linear-gradient(90deg,#009eff 0,#0185ff 110px,#387eff 134px,#7476ff 157px,#af6fff 177px,#ff65fd 202px,#ff57e4 210px,#ff4acb 219px,#ff33a1 239px,#ff207d 263px,#ff115f 291px,#ff0447 323px,#f6003d 335px,#e30029 370px,#ce0017 416px,#b8000a 471px)"></i><i style="top:437px;left:1088px;width:467px;background:linear-gradient(90deg,#009dff 0,#0084ff 108px,#347dff 131px,#7275ff 155px,#af6dff 176px,#ff62fd 201px,#ff55e4 209px,#ff48cc 218px,#ff32a2 238px,#ff207f 261px,#ff1061 289px,#ff0347 322px,#f7003f 332px,#e30029 368px,#cf0018 413px,#b9000b 467px)"></i><i style="top:438px;left:1088px;width:465px;background:linear-gradient(90deg,#009bff 0,#0082ff 108px,#377bff 132px,#7273ff 155px,#af6bff 176px,#ff60fe 201px,#ff53e4 209px,#ff46cc 218px,#ff31a2 238px,#ff1f7f 261px,#ff0f61 289px,#ff0247 322px,#f10038 342px,#e4002a 367px,#cf0018 412px,#ba000b 465px)"></i><i style="top:439px;left:1088px;width:462px;background:linear-gradient(90deg,#009aff 0,#0180ff 108px,#3a78ff 133px,#7571ff 156px,#b269ff 177px,#ff5efe 201px,#ff51e4 209px,#ff45cc 218px,#ff2fa2 238px,#ff1e80 261px,#ff0f62 288px,#ff0248 322px,#f10039 341px,#e4002b 366px,#d00019 410px,#bb000c 462px)"></i><i style="top:440px;left:1089px;width:459px;background:linear-gradient(90deg,#0098ff 0,#007fff 106px,#3378ff 129px,#736fff 154px,#b267ff 176px,#ff5cfe 200px,#ff4fe5 208px,#ff43cd 217px,#ff2fa4 236px,#ff1d81 259px,#ff0f64 286px,#ff0148 321px,#f1003a 340px,#e5002c 364px,#d1001a 407px,#bc000d 459px)"></i><i style="top:441px;left:1089px;width:456px;background:linear-gradient(90deg,#0097ff 0,#007dff 106px,#3975ff 131px,#766dff 155px,#b564ff 177px,#ff5afe 200px,#ff4de5 208px,#ff41cd 217px,#ff2ea5 236px,#ff1c82 259px,#ff0e64 286px,#ff0049 321px,#f4003d 335px,#e5002d 363px,#d2001b 405px,#bd000e 456px)"></i><i style="top:442px;left:1089px;width:454px;background:linear-gradient(90deg,#0095ff 0,#017bff 106px,#3973ff 131px,#766bff 155px,#b662ff 177px,#ff58fe 200px,#ff4ce5 208px,#ff40cd 217px,#ff2ca5 236px,#ff1b82 259px,#ff0d65 285px,#ff0049 321px,#f4003e 335px,#e6002d 362px,#d2001c 404px,#be000e 454px)"></i><i style="top:443px;left:1090px;width:450px;background:linear-gradient(90deg,#0094ff 0,#007aff 104px,#3572ff 128px,#7469ff 153px,#b660ff 176px,#ff56ff 199px,#ff3fd0 215px,#ff2ca7 234px,#ff1b84 257px,#ff0d67 283px,#ff0049 320px,#e6002e 360px,#d3001d 401px,#bf000f 450px)"></i><i style="top:444px;left:1090px;width:448px;background:linear-gradient(90deg,#0092ff 0,#0078ff 104px,#3a70ff 130px,#7767ff 154px,#b95eff 177px,#ff54ff 199px,#ff3ed0 215px,#ff2ba8 234px,#ff1a84 257px,#ff0c67 283px,#ff004a 320px,#e7002f 359px,#d4001d 400px,#c00010 448px)"></i><i style="top:445px;left:1090px;width:445px;background:linear-gradient(90deg,#0091ff 0,#0177ff 104px,#3b6eff 130px,#7865ff 154px,#b95cff 177px,#ff52ff 199px,#ff3cd1 215px,#ff29a8 234px,#ff1986 256px,#ff0c68 282px,#ff0050 311px,#ff004a 320px,#e70030 358px,#d4001e 398px,#c10011 445px)"></i><i style="top:446px;left:1091px;width:442px;background:linear-gradient(90deg,#008fff 0,#0075ff 102px,#346eff 126px,#7564ff 152px,#b95aff 176px,#ff50ff 198px,#ff3bd1 214px,#ff28a8 233px,#ff1886 255px,#ff0b69 281px,#ff0052 308px,#ff004a 319px,#e80031 356px,#d5001f 395px,#c20011 442px)"></i><i style="top:447px;left:1091px;width:439px;background:linear-gradient(90deg,#008eff 0,#0074ff 102px,#3a6bff 128px,#7862ff 153px,#b958ff 176px,#ff4eff 198px,#ff39d1 214px,#ff27a9 233px,#ff1787 255px,#ff0a6a 280px,#ff0054 306px,#ff004b 319px,#e80032 355px,#d60020 393px,#c30012 439px)"></i><i style="top:448px;left:1092px;width:436px;background:linear-gradient(90deg,#008cff 0,#0172ff 101px,#386aff 126px,#7361ff 150px,#ad58ff 171px,#ff4cff 197px,#ff4bfc 198px,#ff36cf 214px,#ff25a9 232px,#ff1687 254px,#ff096b 279px,#ff0056 303px,#ff004b 318px,#e90032 353px,#d70021 391px,#c40013 436px)"></i><i style="top:449px;left:1092px;width:433px;background:linear-gradient(90deg,#008bff 0,#0071ff 100px,#3469ff 124px,#7160ff 149px,#ad56ff 171px,#fe4aff 197px,#ff49fc 198px,#ff35cf 214px,#ff24aa 232px,#ff1689 253px,#ff096c 278px,#ff0058 301px,#ff004c 318px,#f0003b 339px,#e2002b 367px,#c50014 433px)"></i><i style="top:450px;left:1092px;width:431px;background:linear-gradient(90deg,#0089ff 0,#006fff 100px,#3966ff 126px,#745dff 150px,#ae55ff 171px,#fe48ff 197px,#ff47fd 198px,#ff33d0 214px,#ff23aa 232px,#ff1589 253px,#ff086c 278px,#ff005a 299px,#ff004c 318px,#f0003c 339px,#e2002c 366px,#c60015 431px)"></i><i style="top:451px;left:1093px;width:427px;background:linear-gradient(90deg,#08f 0,#016eff 99px,#3965ff 125px,#745cff 149px,#b152ff 171px,#fe46ff 196px,#ff45fd 197px,#ff32d0 213px,#f2a 231px,#ff148a 252px,#ff086e 276px,#ff005c 296px,#ff004c 317px,#f0003c 338px,#e3002d 364px,#c70016 427px)"></i><i style="top:452px;left:1093px;width:425px;background:linear-gradient(90deg,#0086ff 0,#006cff 98px,#3364ff 122px,#725aff 148px,#ae51ff 170px,#ff43fd 197px,#ff31d3 212px,#ff21ac 230px,#ff138b 251px,#ff076f 275px,#ff005f 293px,#ff004d 317px,#f1003d 337px,#e3002e 363px,#c80016 425px)"></i><i style="top:453px;left:1093px;width:422px;background:linear-gradient(90deg,#0085ff 0,#006bff 98px,#3862ff 124px,#7558ff 149px,#b14fff 171px,#ff42fd 197px,#ff30d3 212px,#ff20ad 230px,#ff128c 251px,#ff066f 275px,#ff0061 291px,#ff004d 317px,#f1003d 337px,#e4002f 362px,#c90018 422px)"></i><i style="top:454px;left:1094px;width:419px;background:linear-gradient(90deg,#0083ff 0,#0169ff 97px,#3960ff 123px,#7557ff 148px,#b14dff 170px,#ff40fd 196px,#ff2ed3 211px,#ff1fad 229px,#ff128d 249px,#ff0671 273px,#ff0063 288px,#ff004d 316px,#f1003e 335px,#e4002f 360px,#ca0018 419px)"></i><i style="top:455px;left:1094px;width:416px;background:linear-gradient(90deg,#0082ff 0,#0068ff 96px,#355fff 121px,#7355ff 147px,#b14bff 170px,#ff3efe 196px,#ff2dd3 211px,#ff1ead 229px,#ff118e 249px,#ff0572 272px,#ff0065 286px,#ff004e 316px,#f1003f 335px,#e50030 359px,#cb001a 416px)"></i><i style="top:456px;left:1094px;width:414px;background:linear-gradient(90deg,#0081ff 0,#06f 96px,#3a5dff 123px,#7653ff 148px,#b449ff 171px,#ff3cfe 196px,#ff2cd4 211px,#ff1cae 229px,#ff108e 249px,#ff0573 272px,#ff0067 284px,#ff004e 316px,#f20040 334px,#e50031 358px,#cc001a 414px)"></i><i style="top:457px;left:1095px;width:410px;background:linear-gradient(90deg,#007fff 0,#0165ff 95px,#3a5bff 122px,#7652ff 147px,#b447ff 170px,#ff3bfe 195px,#ff2ad4 210px,#ff1cb0 227px,#ff0f90 247px,#ff0474 270px,#ff0069 281px,#ff004e 315px,#f20040 333px,#e60032 356px,#cd001c 410px)"></i><i style="top:458px;left:1095px;width:408px;background:linear-gradient(90deg,#007eff 0,#0064ff 94px,#345bff 119px,#7450ff 146px,#b446ff 170px,#ff39fe 195px,#ff29d4 210px,#ff1bb0 227px,#ff0e90 247px,#ff0476 269px,#ff006b 279px,#ff004f 315px,#e60033 355px,#ce001c 408px)"></i><i style="top:459px;left:1096px;width:404px;background:linear-gradient(90deg,#007cff 0,#0062ff 93px,#3959ff 120px,#774eff 146px,#b744ff 170px,#ff37fe 194px,#ff27d5 209px,#ff19b1 226px,#ff0d91 246px,#ff0376 268px,#ff006f 275px,#ff004f 314px,#e70034 353px,#cf001e 404px)"></i><i style="top:460px;left:1096px;width:402px;background:linear-gradient(90deg,#007bff 0,#0161ff 93px,#3a57ff 120px,#774dff 146px,#b742ff 170px,#ff36fe 194px,#ff26d5 209px,#ff18b1 226px,#ff0d92 245px,#ff0277 267px,#ff0062 289px,#ff004f 314px,#e70034 352px,#d0001f 402px)"></i><i style="top:461px;left:1096px;width:399px;background:linear-gradient(90deg,#007aff 0,#0060ff 92px,#3656ff 118px,#754cff 145px,#b740ff 170px,#ff34ff 194px,#ff25d8 208px,#ff18b3 225px,#ff0c94 244px,#ff0279 266px,#ff0063 289px,#ff0050 314px,#e80035 351px,#d10020 399px)"></i><i style="top:462px;left:1097px;width:396px;background:linear-gradient(90deg,#0078ff 0,#005eff 91px,#3b54ff 119px,#784aff 145px,#b83fff 169px,#ff32ff 193px,#ff24d8 207px,#ff17b4 224px,#ff0b95 243px,#ff0179 265px,#ff0063 288px,#ff0050 313px,#e80036 349px,#d20021 396px)"></i><i style="top:463px;left:1097px;width:393px;background:linear-gradient(90deg,#07f 0,#015dff 91px,#3b53ff 119px,#7848ff 145px,#ba3dff 170px,#ff31ff 193px,#ff23d8 207px,#ff15b4 224px,#ff0a95 243px,#ff007b 264px,#ff0064 287px,#ff0051 313px,#e90037 348px,#d40022 393px)"></i><i style="top:464px;left:1097px;width:391px;background:linear-gradient(90deg,#0075ff 0,#005cff 90px,#3752ff 117px,#7647ff 144px,#b83bff 169px,#ff2fff 193px,#ff20d6 208px,#ff14b4 224px,#ff0a97 242px,#ff007c 263px,#ff0065 286px,#ff0051 313px,#e90038 347px,#d40023 391px)"></i><i style="top:465px;left:1098px;width:387px;background:linear-gradient(90deg,#0074ff 0,#005aff 89px,#3a50ff 117px,#7945ff 144px,#bb39ff 169px,#ff2dff 192px,#ff1fd6 207px,#ff13b4 223px,#ff0997 241px,#ff007c 262px,#f06 285px,#ff0051 312px,#ea0039 345px,#d60025 387px)"></i><i style="top:466px;left:1098px;width:385px;background:linear-gradient(90deg,#0073ff 0,#0159ff 89px,#3a4eff 117px,#7943ff 144px,#bb38ff 169px,#fe2cff 192px,#ff1ed9 206px,#ff12b7 222px,#ff0899 240px,#ff007e 261px,#f06 285px,#ff0052 312px,#ea003a 344px,#d70026 385px)"></i><i style="top:467px;left:1099px;width:381px;background:linear-gradient(90deg,#0071ff 0,#0058ff 87px,#344eff 113px,#7243ff 140px,#ad39ff 163px,#fe2aff 191px,#ff29fd 192px,#ff1cd7 206px,#ff11b5 222px,#ff0798 240px,#ff007e 260px,#ff0067 284px,#ff0052 311px,#eb003b 341px,#d80027 381px)"></i><i style="top:468px;left:1099px;width:378px;background:linear-gradient(90deg,#0070ff 0,#0056ff 87px,#394cff 115px,#7541ff 141px,#b036ff 164px,#fe28ff 191px,#ff28fd 192px,#ff1bd7 206px,#ff10b7 221px,#ff069a 239px,#f08 252px,#ff0080 259px,#ff0068 283px,#ff0052 311px,#ec003c 340px,#d90029 378px)"></i><i style="top:469px;left:1099px;width:376px;background:linear-gradient(90deg,#006fff 0,#0155ff 87px,#3a4aff 115px,#7540ff 141px,#b035ff 164px,#ff26fd 192px,#ff19d7 206px,#ff0fb8 221px,#ff059b 238px,#ff008b 250px,#ff0081 258px,#ff0068 283px,#ff0053 311px,#ec003d 339px,#da002a 376px)"></i><i style="top:470px;left:1100px;width:372px;background:linear-gradient(90deg,#006dff 0,#0054ff 85px,#364aff 112px,#733fff 139px,#b033ff 163px,#ff24fd 191px,#ff18d8 205px,#ff0eb8 220px,#ff008f 246px,#ff0083 256px,#ff0069 281px,#ff0053 310px,#ed003e 337px,#dc002b 372px)"></i><i style="top:471px;left:1100px;width:370px;background:linear-gradient(90deg,#006cff 0,#0052ff 85px,#3948ff 113px,#763dff 140px,#b331ff 164px,#ff23fd 191px,#ff17d8 205px,#ff0db8 220px,#ff0092 244px,#ff0083 256px,#ff006a 281px,#ff0053 310px,#ed003f 336px,#dd002c 370px)"></i><i style="top:472px;left:1101px;width:366px;background:linear-gradient(90deg,#006aff 0,#0151ff 84px,#3946ff 112px,#763bff 139px,#b330ff 163px,#ff21fe 190px,#ff16da 203px,#ff0cba 218px,#ff0095 241px,#ff0085 254px,#ff006a 280px,#ff0054 309px,#ee0040 334px,#de002e 366px)"></i><i style="top:473px;left:1101px;width:364px;background:linear-gradient(90deg,#0069ff 0,#0050ff 83px,#3546ff 110px,#743aff 138px,#b32eff 163px,#ff20fe 190px,#ff15db 203px,#ff0bbb 218px,#ff0098 239px,#ff0086 253px,#ff006b 279px,#ff0054 309px,#ef0041 333px,#df002f 364px)"></i><i style="top:474px;left:1101px;width:361px;background:linear-gradient(90deg,#0068ff 0,#004fff 83px,#3a44ff 112px,#7738ff 139px,#b62cff 164px,#ff1efe 190px,#ff14db 203px,#ff0abb 218px,#ff009c 237px,#ff0087 253px,#ff006c 279px,#ff0054 309px,#ef0042 332px,#e00031 361px)"></i><i style="top:475px;left:1102px;width:358px;background:linear-gradient(90deg,#06f 0,#014dff 82px,#3b42ff 111px,#7737ff 138px,#b62bff 163px,#ff1dfe 189px,#ff12db 202px,#ff09bd 216px,#ff009f 234px,#f08 251px,#ff006d 277px,#f05 308px,#f00043 330px,#e10032 358px)"></i><i style="top:476px;left:1102px;width:355px;background:linear-gradient(90deg,#0065ff 0,#004cff 81px,#3742ff 109px,#7536ff 137px,#b629ff 163px,#ff1bfe 189px,#ff11db 202px,#ff08be 216px,#ff00a2 232px,#ff008a 250px,#ff006d 277px,#f05 308px,#f10044 328px,#e30034 355px)"></i><i style="top:477px;left:1103px;width:352px;background:linear-gradient(90deg,#0064ff 0,#004bff 80px,#3940ff 109px,#7834ff 137px,#b628ff 162px,#ff1afe 188px,#ff10dc 201px,#ff07be 215px,#ff00a6 229px,#ff008a 249px,#ff006e 276px,#f05 307px,#f10045 327px,#e40035 352px)"></i><i style="top:478px;left:1103px;width:349px;background:linear-gradient(90deg,#0062ff 0,#014aff 80px,#3a3eff 109px,#7832ff 137px,#b926ff 163px,#ff18ff 188px,#ff0edc 201px,#ff06be 215px,#ff00ab 226px,#ff008c 248px,#ff006f 275px,#ff0056 307px,#f20047 325px,#e50037 349px)"></i><i style="top:479px;left:1103px;width:347px;background:linear-gradient(90deg,#0061ff 0,#0049ff 79px,#363eff 107px,#7632ff 136px,#b725ff 162px,#ff17ff 188px,#ff0edf 200px,#ff05c0 214px,#ff00ae 224px,#ff008d 247px,#ff006f 275px,#ff0056 307px,#e60039 347px)"></i><i style="top:480px;left:1104px;width:343px;background:linear-gradient(90deg,#0060ff 0,#0047ff 78px,#3b3cff 108px,#7930ff 136px,#b923ff 162px,#ff15ff 187px,#ff0cdf 199px,#ff04c1 213px,#ff00b2 221px,#ff008f 245px,#ff0070 273px,#ff0056 306px,#e8003b 343px)"></i><i style="top:481px;left:1104px;width:341px;background:linear-gradient(90deg,#005eff 0,#0146ff 78px,#3b3aff 108px,#792eff 136px,#b922ff 162px,#ff14ff 187px,#ff0bdf 199px,#ff03c1 213px,#ff00a7 228px,#ff008f 245px,#ff0071 273px,#ff0057 306px,#e9003c 341px)"></i><i style="top:482px;left:1105px;width:337px;background:linear-gradient(90deg,#005dff 0,#0145ff 77px,#3c39ff 107px,#792dff 135px,#b920ff 161px,#ff12ff 186px,#ff09dd 199px,#ff02c1 212px,#ff00a7 227px,#ff0091 243px,#ff0071 272px,#ff0057 305px,#ea003e 337px)"></i><i style="top:483px;left:1105px;width:335px;background:linear-gradient(90deg,#005cff 0,#04f 76px,#3a38ff 106px,#772cff 134px,#ba1fff 161px,#f1f 186px,#ff08dd 199px,#ff01c2 212px,#ff00a8 227px,#ff0091 243px,#ff0071 272px,#ff0057 305px,#eb0040 335px)"></i><i style="top:484px;left:1105px;width:332px;background:linear-gradient(90deg,#005bff 0,#0142ff 76px,#3b37ff 106px,#782bff 134px,#ba1dff 161px,#fe10ff 186px,#ff07dd 199px,#ff00c2 212px,#ff00a9 226px,#ff0093 242px,#ff0073 271px,#ff0058 305px,#ed0042 332px)"></i><i style="top:485px;left:1106px;width:329px;background:linear-gradient(90deg,#0059ff 0,#0042ff 74px,#3537ff 102px,#732aff 131px,#af1eff 156px,#fe0eff 185px,#ff0dfd 186px,#ff05de 198px,#ff00c2 211px,#f0a 225px,#ff0093 241px,#ff0073 270px,#ff0058 304px,#e04 329px)"></i><i style="top:486px;left:1106px;width:326px;background:linear-gradient(90deg,#0058ff 0,#0040ff 74px,#3a35ff 104px,#7628ff 132px,#b21cff 157px,#ff0cfd 186px,#ff05e0 197px,#ff00c4 210px,#ff00ac 224px,#ff0095 240px,#ff0074 269px,#ff0058 304px,#f00046 326px)"></i><i style="top:487px;left:1107px;width:323px;background:linear-gradient(90deg,#0057ff 0,#013fff 73px,#3a33ff 103px,#7627ff 131px,#b21bff 156px,#ff0bfd 185px,#ff00d3 202px,#ff00c5 209px,#ff00ac 223px,#ff0096 238px,#ff0075 268px,#ff0059 303px,#f10048 323px)"></i><i style="top:488px;left:1107px;width:320px;background:linear-gradient(90deg,#05f 0,#013eff 73px,#3b32ff 103px,#7626ff 131px,#b219ff 156px,#ff09fd 185px,#ff00d8 200px,#ff00c5 209px,#ff00ac 223px,#ff0097 238px,#ff0075 268px,#ff0059 303px,#f3004a 320px)"></i><i style="top:489px;left:1108px;width:317px;background:linear-gradient(90deg,#0054ff 0,#003dff 71px,#3931ff 101px,#7425ff 129px,#b218ff 155px,#ff08fe 184px,#ff00dc 197px,#ff00c5 208px,#ff00ae 221px,#ff0098 236px,#ff0076 266px,#ff0059 302px,#f4004c 317px)"></i><i style="top:490px;left:1108px;width:314px;background:linear-gradient(90deg,#0053ff 0,#013cff 71px,#3930ff 101px,#7723ff 130px,#b516ff 156px,#ff07fe 184px,#ff00e1 195px,#ff00c7 207px,#ff00b0 220px,#ff009a 235px,#f07 266px,#ff005a 302px,#f6004f 314px)"></i><i style="top:491px;left:1109px;width:311px;background:linear-gradient(90deg,#0051ff 0,#013aff 70px,#3a2fff 100px,#72f 129px,#b515ff 155px,#ff05fe 183px,#ff00e6 192px,#ff00c8 206px,#ff00b0 219px,#ff009a 234px,#f07 265px,#ff005a 301px,#f70051 311px)"></i><i style="top:492px;left:1109px;width:308px;background:linear-gradient(90deg,#0050ff 0,#003aff 69px,#382eff 99px,#7521ff 128px,#b514ff 155px,#ff04fe 183px,#ff00eb 190px,#ff00c8 206px,#ff009c 233px,#ff0078 264px,#ff005a 301px,#f90053 308px)"></i><i style="top:493px;left:1109px;width:306px;background:linear-gradient(90deg,#004fff 0,#0138ff 69px,#3b2cff 100px,#781fff 129px,#b512ff 155px,#ff03fe 183px,#ff00e2 194px,#ff00c8 206px,#ff009c 233px,#ff0079 264px,#ff005a 301px,#fa0056 306px)"></i><i style="top:494px;left:1110px;width:302px;background:linear-gradient(90deg,#004eff 0,#0137ff 68px,#3b2bff 99px,#781eff 128px,#b810ff 155px,#ff01fe 182px,#ff00e2 193px,#ff00ca 204px,#ff00b3 217px,#ff009e 231px,#ff007a 262px,#ff005b 300px,#fd0059 302px)"></i><i style="top:495px;left:1110px;width:300px;background:linear-gradient(90deg,#004dff 0,#0036ff 67px,#3a2aff 98px,#761dff 127px,#b80fff 155px,#f0f 182px,#ff00e2 193px,#ff00cb 204px,#ff00b3 217px,#ff009e 231px,#ff007a 262px,#ff005b 300px)"></i><i style="top:496px;left:1111px;width:296px;background:linear-gradient(90deg,#004bff 0,#0135ff 66px,#3a29ff 97px,#791bff 127px,#b80eff 154px,#f0f 181px,#ff00e3 192px,#ff00cb 203px,#ff00a0 229px,#ff007b 260px,#ff005e 296px)"></i><i style="top:497px;left:1111px;width:294px;background:linear-gradient(90deg,#004aff 0,#0134ff 66px,#3b28ff 97px,#791aff 127px,#b80dff 154px,#f100ff 176px,#f0f 181px,#ff00e3 192px,#ff00cb 203px,#ff00a2 228px,#ff007e 258px,#ff005f 294px)"></i><i style="top:498px;left:1112px;width:290px;background:linear-gradient(90deg,#0049ff 0,#03f 64px,#3927ff 95px,#7719ff 125px,#b80bff 153px,#ec00ff 173px,#f0f 180px,#ff00e5 190px,#ff00cd 201px,#ff00a3 226px,#ff0080 255px,#ff0062 290px)"></i><i style="top:499px;left:1112px;width:288px;background:linear-gradient(90deg,#0048ff 0,#0132ff 64px,#3a26ff 95px,#7718ff 125px,#b80aff 153px,#e600ff 171px,#f0f 180px,#ff00ce 201px,#ff00a5 225px,#ff0081 254px,#ff0064 288px)"></i><i style="top:500px;left:1113px;width:284px;background:linear-gradient(90deg,#0046ff 0,#0131ff 63px,#3a24ff 94px,#7817ff 124px,#ac0bff 147px,#e100ff 168px,#f0f 179px,#ff00d0 199px,#ff00a7 223px,#ff0084 251px,#f06 284px)"></i><i style="top:501px;left:1113px;width:281px;background:linear-gradient(90deg,#0045ff 0,#0030ff 62px,#3a23ff 94px,#7816ff 124px,#a80bff 145px,#d900ff 165px,#f0f 179px,#ff00d0 199px,#ff00a9 222px,#ff0086 249px,#ff0069 281px)"></i><i style="top:502px;left:1114px;width:278px;background:linear-gradient(90deg,#04f 0,#012fff 61px,#3b22ff 93px,#7815ff 123px,#d400ff 162px,#fe00ff 178px,#ff00d0 198px,#ff00a9 221px,#f08 247px,#ff006b 278px)"></i><i style="top:503px;left:1114px;width:275px;background:linear-gradient(90deg,#0043ff 0,#012eff 61px,#3b21ff 93px,#7913ff 123px,#cf00ff 160px,#fe00ff 178px,#ff00d1 198px,#ff00ab 220px,#ff008a 245px,#ff006d 275px)"></i><i style="top:504px;left:1114px;width:273px;background:linear-gradient(90deg,#0042ff 0,#002dff 60px,#3a20ff 92px,#7713ff 122px,#ca00ff 158px,#fe00ff 178px,#ff00d1 198px,#ff00ac 219px,#ff008c 244px,#ff006f 273px)"></i><i style="top:505px;left:1115px;width:269px;background:linear-gradient(90deg,#0040ff 0,#012cff 59px,#3a1fff 91px,#71f 121px,#c500ff 155px,#fe00ff 177px,#ff00d3 196px,#ff00ae 217px,#ff008e 241px,#ff0072 269px)"></i><i style="top:506px;left:1115px;width:267px;background:linear-gradient(90deg,#003fff 0,#012bff 59px,#3b1eff 91px,#7710ff 121px,#c000ff 153px,#fe00ff 177px,#ff00d3 196px,#ff00b0 216px,#ff0090 240px,#ff0074 267px)"></i><i style="top:507px;left:1116px;width:263px;background:linear-gradient(90deg,#003eff 0,#002aff 57px,#391dff 89px,#770fff 120px,#b900ff 149px,#fe00ff 176px,#ff00d4 195px,#ff00b2 214px,#ff0092 237px,#f07 263px)"></i><i style="top:508px;left:1116px;width:261px;background:linear-gradient(90deg,#003dff 0,#0129ff 57px,#3a1cff 89px,#780eff 120px,#b400ff 147px,#fd00ff 176px,#ff00d4 195px,#ff00b2 214px,#ff0094 236px,#ff007a 261px)"></i><i style="top:509px;left:1117px;width:257px;background:linear-gradient(90deg,#003bff 0,#0128ff 56px,#3a1bff 88px,#780dff 119px,#b000ff 144px,#fd00ff 175px,#ff00d4 194px,#ff00b4 212px,#ff0097 233px,#ff007d 257px)"></i><i style="top:510px;left:1117px;width:255px;background:linear-gradient(90deg,#003aff 0,#0027ff 55px,#3b1aff 88px,#780cff 119px,#ab00ff 142px,#fd00ff 175px,#ff00d4 194px,#ff00b6 211px,#ff0098 232px,#ff007f 255px)"></i><i style="top:511px;left:1118px;width:251px;background:linear-gradient(90deg,#0039ff 0,#0126ff 54px,#3b19ff 87px,#790aff 118px,#a700ff 139px,#fd00ff 174px,#ff00d7 192px,#ff00b8 209px,#ff009b 229px,#ff0082 251px)"></i><i style="top:512px;left:1118px;width:249px;background:linear-gradient(90deg,#0038ff 0,#0125ff 54px,#3b17ff 87px,#7909ff 118px,#a200ff 137px,#fd00ff 174px,#ff00d7 192px,#ff00ba 208px,#ff009e 227px,#ff0084 249px)"></i><i style="top:513px;left:1119px;width:245px;background:linear-gradient(90deg,#0036ff 0,#0024ff 52px,#3a17ff 85px,#7709ff 116px,#9c00ff 133px,#f0f 174px,#ff00db 189px,#ff00bd 205px,#ff00a1 224px,#f08 245px)"></i><i style="top:514px;left:1119px;width:243px;background:linear-gradient(90deg,#0035ff 0,#0123ff 52px,#3a16ff 85px,#7708ff 116px,#9700ff 131px,#c800ff 152px,#f0f 174px,#ff00dc 189px,#ff00be 205px,#ff00a2 223px,#ff008a 243px)"></i><i style="top:515px;left:1120px;width:239px;background:linear-gradient(90deg,#0034ff 0,#0122ff 51px,#3b15ff 84px,#7806ff 115px,#9300ff 128px,#c800ff 151px,#f0f 173px,#ff00de 187px,#ff00c1 202px,#ff00a7 219px,#ff008e 239px)"></i><i style="top:516px;left:1120px;width:237px;background:linear-gradient(90deg,#03f 0,#0021ff 50px,#3914ff 83px,#7805ff 115px,#8f00ff 126px,#c500ff 150px,#f0f 173px,#ff00de 187px,#ff00c1 202px,#ff00a7 219px,#ff0090 237px)"></i><i style="top:517px;left:1121px;width:233px;background:linear-gradient(90deg,#0032ff 0,#0120ff 49px,#3a13ff 82px,#7804ff 114px,#8b00ff 123px,#ba00ff 144px,#f0f 172px,#ff00de 186px,#ff00c3 200px,#f0a 216px,#ff0094 233px)"></i><i style="top:518px;left:1121px;width:231px;background:linear-gradient(90deg,#0031ff 0,#011fff 49px,#3a12ff 82px,#7803ff 114px,#8700ff 121px,#ba00ff 144px,#f0f 172px,#ff00e1 185px,#ff00c5 199px,#ff00ad 214px,#ff0097 231px)"></i><i style="top:519px;left:1122px;width:227px;background:linear-gradient(90deg,#002fff 0,#001fff 47px,#3b11ff 81px,#7902ff 113px,#ba00ff 143px,#f0f 171px,#ff00e1 184px,#ff00c7 197px,#ff00b1 211px,#ff009b 227px)"></i><i style="top:520px;left:1122px;width:225px;background:linear-gradient(90deg,#002eff 0,#011eff 47px,#3b10ff 81px,#7901ff 113px,#ba00ff 143px,#fe00ff 171px,#ff00e1 184px,#ff00c9 196px,#ff009e 225px)"></i><i style="top:521px;left:1123px;width:221px;background:linear-gradient(90deg,#002dff 0,#011dff 46px,#3c0fff 80px,#7900ff 112px,#ba00ff 142px,#fe00ff 170px,#f0c 194px,#ff00a2 221px)"></i><i style="top:522px;left:1123px;width:219px;background:linear-gradient(90deg,#002cff 0,#001cff 45px,#3a0eff 79px,#70f 111px,#b800ff 141px,#fe00ff 170px,#ff00ce 193px,#ff00a5 219px)"></i><i style="top:523px;left:1123px;width:216px;background:linear-gradient(90deg,#002bff 0,#011bff 45px,#3b0dff 79px,#7800ff 111px,#b800ff 141px,#fe00ff 170px,#ff00d0 192px,#ff00a9 216px)"></i><i style="top:524px;left:1124px;width:213px;background:linear-gradient(90deg,#002aff 0,#011aff 44px,#3b0cff 78px,#6c00ff 104px,#7800ff 110px,#b800ff 140px,#fe00ff 169px,#ff00d2 190px,#ff00ac 213px)"></i><i style="top:525px;left:1124px;width:210px;background:linear-gradient(90deg,#0029ff 0,#0019ff 43px,#3a0bff 77px,#6800ff 102px,#7800ff 110px,#b800ff 140px,#fe00ff 169px,#ff00d4 189px,#ff00b1 210px)"></i><i style="top:526px;left:1125px;width:207px;background:linear-gradient(90deg,#0027ff 0,#0118ff 42px,#310cff 71px,#6300ff 98px,#7800ff 109px,#b800ff 139px,#fe00ff 168px,#ff00d4 188px,#ff00b4 207px)"></i><i style="top:527px;left:1125px;width:204px;background:linear-gradient(90deg,#0026ff 0,#0117ff 42px,#300cff 70px,#5f00ff 96px,#7900ff 109px,#b800ff 139px,#fd00ff 168px,#ff00d6 187px,#ff00b9 204px)"></i><i style="top:528px;left:1126px;width:201px;background:linear-gradient(90deg,#0025ff 0,#0017ff 40px,#2d0cff 67px,#5c00ff 93px,#70f 107px,#b800ff 138px,#fd00ff 167px,#ff00d8 185px,#ff00bc 201px)"></i><i style="top:529px;left:1127px;width:197px;background:linear-gradient(90deg,#0024ff 0,#0116ff 39px,#5800ff 90px,#70f 106px,#b800ff 137px,#fd00ff 166px,#ff00db 183px,#ff00c1 197px)"></i><i style="top:530px;left:1127px;width:195px;background:linear-gradient(90deg,#0023ff 0,#0015ff 38px,#50f 88px,#70f 106px,#b800ff 137px,#fd00ff 166px,#f0d 182px,#ff00c5 195px)"></i><i style="top:531px;left:1128px;width:191px;background:linear-gradient(90deg,#02f 0,#0014ff 37px,#5000ff 84px,#7800ff 105px,#b900ff 136px,#f0f 166px,#ff00e3 178px,#ff00ca 191px)"></i><i style="top:532px;left:1128px;width:189px;background:linear-gradient(90deg,#0021ff 0,#0113ff 37px,#4c00ff 82px,#7800ff 105px,#b900ff 136px,#f0f 166px,#ff00ce 189px)"></i><i style="top:533px;left:1129px;width:185px;background:linear-gradient(90deg,#001fff 0,#0013ff 35px,#4900ff 79px,#7800ff 104px,#b900ff 135px,#f0f 165px,#ff00d4 185px)"></i><i style="top:534px;left:1130px;width:182px;background:linear-gradient(90deg,#001eff 0,#0012ff 34px,#4600ff 76px,#7800ff 103px,#b900ff 134px,#f0f 164px,#ff00d8 182px)"></i><i style="top:535px;left:1130px;width:179px;background:linear-gradient(90deg,#001dff 0,#0111ff 34px,#4300ff 74px,#7900ff 103px,#b900ff 134px,#f0f 164px,#ff00de 179px)"></i><i style="top:536px;left:1131px;width:175px;background:linear-gradient(90deg,#001cff 0,#0110ff 33px,#4000ff 71px,#7900ff 102px,#b900ff 133px,#f0f 163px,#ff00e4 175px)"></i><i style="top:537px;left:1131px;width:173px;background:linear-gradient(90deg,#001bff 0,#000fff 32px,#3b00ff 68px,#70f 101px,#b900ff 133px,#fe00ff 163px,#ff00e9 173px)"></i><i style="top:538px;left:1132px;width:169px;background:linear-gradient(90deg,#001aff 0,#010eff 31px,#3800ff 65px,#70f 100px,#b900ff 132px,#fe00ff 162px,#ff00ef 169px)"></i><i style="top:539px;left:1132px;width:167px;background:linear-gradient(90deg,#0019ff 0,#010dff 31px,#3500ff 63px,#6700ff 91px,#b100ff 128px,#fe00ff 162px,#ff00f4 167px)"></i><i style="top:540px;left:1133px;width:163px;background:linear-gradient(90deg,#0017ff 0,#000dff 28px,#1009ff 39px,#3200ff 60px,#7a00ff 100px,#b900ff 131px,#fe00ff 161px,#ff00fb 163px)"></i><i style="top:541px;left:1134px;width:160px;background:linear-gradient(90deg,#0016ff 0,#000cff 27px,#1806ff 43px,#2f00ff 57px,#8600ff 105px,#c000ff 133px,#fe00ff 160px)"></i><i style="top:542px;left:1134px;width:157px;background:linear-gradient(90deg,#0015ff 0,#000bff 27px,#1406ff 40px,#2c00ff 55px,#8000ff 102px,#b900ff 130px,#f700ff 157px)"></i><i style="top:543px;left:1135px;width:154px;background:linear-gradient(90deg,#0014ff 0,#000aff 26px,#1405ff 39px,#2900ff 52px,#7d00ff 99px,#b500ff 127px,#f200ff 154px)"></i><i style="top:544px;left:1135px;width:151px;background:linear-gradient(90deg,#0013ff 0,#000aff 25px,#1205ff 37px,#2500ff 49px,#7900ff 97px,#b100ff 125px,#eb00ff 151px)"></i><i style="top:545px;left:1136px;width:148px;background:linear-gradient(90deg,#0012ff 0,#0009ff 24px,#1204ff 36px,#20f 46px,#70f 95px,#ad00ff 122px,#e600ff 148px)"></i><i style="top:546px;left:1136px;width:145px;background:linear-gradient(90deg,#01f 0,#0008ff 24px,#1004ff 34px,#1f00ff 44px,#7200ff 92px,#a700ff 119px,#df00ff 145px)"></i><i style="top:547px;left:1137px;width:142px;background:linear-gradient(90deg,#0010ff 0,#0007ff 22px,#1203ff 34px,#1d00ff 41px,#7200ff 91px,#a500ff 117px,#da00ff 142px)"></i><i style="top:548px;left:1138px;width:138px;background:linear-gradient(90deg,#000eff 0,#0007ff 21px,#1102ff 32px,#3d00ff 60px,#6d00ff 87px,#9f00ff 113px,#d400ff 138px)"></i><i style="top:549px;left:1138px;width:136px;background:linear-gradient(90deg,#000eff 0,#0006ff 21px,#0f02ff 31px,#3c00ff 59px,#6b00ff 86px,#9d00ff 112px,#cf00ff 136px)"></i><i style="top:550px;left:1139px;width:132px;background:linear-gradient(90deg,#000cff 0,#0005ff 19px,#1001ff 30px,#6800ff 83px,#9700ff 108px,#c900ff 132px)"></i><i style="top:551px;left:1139px;width:130px;background:linear-gradient(90deg,#000bff 0,#0004ff 19px,#0f00ff 29px,#60f 82px,#9500ff 107px,#c500ff 130px)"></i><i style="top:552px;left:1140px;width:126px;background:linear-gradient(90deg,#000aff 0,#0003ff 18px,#0f00ff 28px,#6300ff 79px,#be00ff 126px)"></i><i style="top:553px;left:1140px;width:124px;background:linear-gradient(90deg,#0009ff 0,#0003ff 17px,#0d00ff 26px,#6000ff 77px,#ba00ff 124px)"></i><i style="top:554px;left:1141px;width:120px;background:linear-gradient(90deg,#0008ff 0,#0002ff 16px,#0f00ff 26px,#5e00ff 75px,#b400ff 120px)"></i><i style="top:555px;left:1142px;width:117px;background:linear-gradient(90deg,#0007ff 0,#0001ff 15px,#10f 26px,#5d00ff 73px,#b000ff 117px)"></i><i style="top:556px;left:1142px;width:114px;background:linear-gradient(90deg,#0006ff 0,#0001ff 14px,#0e00ff 24px,#5a00ff 71px,#a0f 114px)"></i><i style="top:557px;left:1143px;width:111px;background:linear-gradient(90deg,#0005ff 0,#00f 13px,#1200ff 25px,#5a00ff 70px,#a600ff 111px)"></i><i style="top:558px;left:1143px;width:108px;background:linear-gradient(90deg,#0004ff 0,#00f 13px,#0f00ff 23px,#50f 67px,#a000ff 108px)"></i><i style="top:559px;left:1144px;width:105px;background:linear-gradient(90deg,#0003ff 0,#00f 11px,#1300ff 24px,#5600ff 66px,#9d00ff 105px)"></i><i style="top:560px;left:1145px;width:101px;background:linear-gradient(90deg,#0001ff 0,#00f 10px,#1400ff 24px,#5400ff 64px,#9700ff 101px)"></i><i style="top:561px;left:1145px;width:99px;background:linear-gradient(90deg,#0001ff 0,#00f 10px,#1300ff 23px,#5100ff 62px,#9300ff 99px)"></i><i style="top:562px;left:1146px;width:95px;background:linear-gradient(90deg,#00f 0,#00f 8px,#1700ff 24px,#5100ff 61px,#8e00ff 95px)"></i><i style="top:563px;left:1146px;width:93px;background:linear-gradient(90deg,#00f 0,#00f 8px,#1600ff 23px,#4e00ff 59px,#8a00ff 93px)"></i><i style="top:564px;left:1147px;width:89px;background:linear-gradient(90deg,#00f 0,#0100ff 7px,#1900ff 24px,#4d00ff 57px,#8500ff 89px)"></i><i style="top:565px;left:1148px;width:86px;background:linear-gradient(90deg,#00f 0,#0100ff 6px,#1e00ff 26px,#4f00ff 57px,#8100ff 86px)"></i><i style="top:566px;left:1148px;width:83px;background:linear-gradient(90deg,#00f 0,#00f 5px,#1d00ff 25px,#4c00ff 55px,#7c00ff 83px)"></i><i style="top:567px;left:1149px;width:80px;background:linear-gradient(90deg,#00f 0,#0100ff 4px,#2300ff 28px,#7900ff 80px)"></i><i style="top:568px;left:1150px;width:76px;background:linear-gradient(90deg,#00f 0,#0100ff 3px,#2800ff 30px,#7400ff 76px)"></i><i style="top:569px;left:1150px;width:73px;background:linear-gradient(90deg,#00f 0,#00f 2px,#2900ff 30px,#6f00ff 73px)"></i><i style="top:570px;left:1151px;width:70px;background:linear-gradient(90deg,#00f 0,#2f00ff 33px,#6b00ff 70px)"></i><i style="top:571px;left:1152px;width:66px;background:linear-gradient(90deg,#0100ff 0,#30f 34px,#6700ff 66px)"></i><i style="top:572px;left:1152px;width:64px;background:linear-gradient(90deg,#0100ff 0,#3200ff 33px,#6300ff 64px)"></i><i style="top:573px;left:1153px;width:60px;background:linear-gradient(90deg,#0300ff 0,#3000ff 31px,#5f00ff 60px)"></i><i style="top:574px;left:1154px;width:57px;background:linear-gradient(90deg,#0500ff 0,#5c00ff 57px)"></i><i style="top:575px;left:1155px;width:53px;background:linear-gradient(90deg,#0700ff 0,#5700ff 53px)"></i><i style="top:576px;left:1156px;width:50px;background:linear-gradient(90deg,#0900ff 0,#5400ff 50px)"></i><i style="top:577px;left:1156px;width:47px;background:linear-gradient(90deg,#0900ff 0,#5000ff 47px)"></i><i style="top:578px;left:1157px;width:44px;background:linear-gradient(90deg,#0b00ff 0,#4d00ff 44px)"></i><i style="top:579px;left:1158px;width:40px;background:linear-gradient(90deg,#0d00ff 0,#4800ff 40px)"></i><i style="top:580px;left:1159px;width:37px;background:linear-gradient(90deg,#0f00ff 0,#4500ff 37px)"></i><i style="top:581px;left:1160px;width:33px;background:linear-gradient(90deg,#10f 0,#4100ff 33px)"></i><i style="top:582px;left:1162px;width:29px;background:linear-gradient(90deg,#1400ff 0,#3e00ff 29px)"></i><i style="top:583px;left:1163px;width:25px;background:linear-gradient(90deg,#1600ff 0,#3a00ff 25px)"></i><i style="top:584px;left:1164px;width:22px;background:linear-gradient(90deg,#1700ff 0,#3700ff 22px)"></i><i style="top:585px;left:1167px;width:16px;background:linear-gradient(90deg,#1c00ff 0,#30f 16px)"></i></div>
<svg width="1716" height="950" viewBox="0 0 1716 950"><defs><clipPath id="cp"><rect x="1038" y="48" width="666" height="548.5"/></clipPath><filter id="bl1" x="-5%" y="-5%" width="110%" height="110%"><feGaussianBlur stdDeviation="1.8"/></filter><filter id="bl2" x="-5%" y="-5%" width="110%" height="110%"><feGaussianBlur stdDeviation="1.1"/></filter></defs>
<g clip-path="url(#cp)"><path d="M1000 0H1750V650H1000ZM1545.2 380.4L1275.2 203.5L1156.1 557.2Z" fill="#000" fill-opacity="0.380" fill-rule="evenodd" filter="url(#bl1)"/>
<path d="M1000 0H1750V650H1000ZM1180.2 583.8L1178.6 584.2L1176.3 584.6L1172.5 584.8L1168.0 583.2L1163.3 579.7L1156.9 572.6L1147.3 557.9L1128.5 525.1L1122.8 513.2L1116.4 499.7L1109.5 484.3L1102.2 466.6L1094.8 446.3L1086.6 422.8L1077.5 396.1L1068.4 367.4L1060.2 337.8L1053.7 308.2L1048.6 277.4L1044.4 244.6L1041.5 211.8L1040.4 181.2L1041.4 154.7L1045.0 132.2L1050.8 112.4L1058.3 95.5L1067.0 81.6L1076.3 71.0L1086.7 64.4L1098.3 61.6L1110.8 61.7L1123.7 63.4L1136.4 65.8L1149.3 69.3L1162.5 74.5L1175.8 80.9L1188.9 87.8L1201.4 94.6L1213.3 101.3L1224.8 108.3L1236.0 115.6L1247.1 123.0L1258.2 130.6L1269.3 138.3L1280.2 146.2L1291.1 154.3L1302.0 162.5L1312.8 170.7L1323.5 179.0L1334.3 187.4L1345.0 195.8L1355.5 204.3L1365.9 212.8L1417.4 255.3L1464.6 294.3L1505.4 327.9L1537.7 354.6L1562.0 374.6L1579.0 388.6L1589.2 397.0L1597.5 403.8L1603.7 409.0L1606.1 411.0L1607.7 412.3L1608.5 412.9L1608.8 413.2L1609.0 413.3Z" fill="#262626" fill-rule="evenodd" filter="url(#bl2)"/></g>
<line x1="1036" y1="46.9" x2="1512" y2="46.9" stroke="#a0a0a0" stroke-width="1.7"/>
<line x1="1036.9" y1="46" x2="1036.9" y2="598.5" stroke="#a0a0a0" stroke-width="1.8"/>
<line x1="1036" y1="597.4" x2="1705.3" y2="597.4" stroke="#a0a0a0" stroke-width="2"/>
<line x1="1704.4" y1="248" x2="1704.4" y2="598.3" stroke="#a0a0a0" stroke-width="1.7"/>
<line x1="1031" y1="597.5" x2="1036.5" y2="597.5" stroke="#dcdcdc" stroke-width="1.2"/>
<text x="1030.6" y="604.7" font-size="15.8" fill="#d4d4d4" text-anchor="end" textLength="8.0" lengthAdjust="spacingAndGlyphs">0</text>
<line x1="1037" y1="597.5" x2="1037" y2="603.6" stroke="#dcdcdc" stroke-width="1.4"/>
<text x="1036.4" y="620.9" font-size="15.8" fill="#d4d4d4" text-anchor="middle" textLength="8.0" lengthAdjust="spacingAndGlyphs">0</text>
<line x1="1031" y1="532" x2="1036.5" y2="532" stroke="#dcdcdc" stroke-width="1.2"/>
<text x="1030.6" y="538.4" font-size="15.8" fill="#d4d4d4" text-anchor="end" textLength="20.6" lengthAdjust="spacingAndGlyphs">0,1</text>
<line x1="1116.4" y1="597.5" x2="1116.4" y2="603.6" stroke="#dcdcdc" stroke-width="1.4"/>
<text x="1116.1" y="620.9" font-size="15.8" fill="#d4d4d4" text-anchor="middle" textLength="20.6" lengthAdjust="spacingAndGlyphs">0,1</text>
<line x1="1031" y1="466.5" x2="1036.5" y2="466.5" stroke="#dcdcdc" stroke-width="1.2"/>
<text x="1030.6" y="472.9" font-size="15.8" fill="#d4d4d4" text-anchor="end" textLength="20.6" lengthAdjust="spacingAndGlyphs">0,2</text>
<line x1="1195.8" y1="597.5" x2="1195.8" y2="603.6" stroke="#dcdcdc" stroke-width="1.4"/>
<text x="1195.5" y="620.9" font-size="15.8" fill="#d4d4d4" text-anchor="middle" textLength="20.6" lengthAdjust="spacingAndGlyphs">0,2</text>
<line x1="1031" y1="401" x2="1036.5" y2="401" stroke="#dcdcdc" stroke-width="1.2"/>
<text x="1030.6" y="407.4" font-size="15.8" fill="#d4d4d4" text-anchor="end" textLength="20.6" lengthAdjust="spacingAndGlyphs">0,3</text>
<line x1="1275.2" y1="597.5" x2="1275.2" y2="603.6" stroke="#dcdcdc" stroke-width="1.4"/>
<text x="1274.9" y="620.9" font-size="15.8" fill="#d4d4d4" text-anchor="middle" textLength="20.6" lengthAdjust="spacingAndGlyphs">0,3</text>
<line x1="1031" y1="335.5" x2="1036.5" y2="335.5" stroke="#dcdcdc" stroke-width="1.2"/>
<text x="1030.6" y="341.9" font-size="15.8" fill="#d4d4d4" text-anchor="end" textLength="20.6" lengthAdjust="spacingAndGlyphs">0,4</text>
<line x1="1354.6" y1="597.5" x2="1354.6" y2="603.6" stroke="#dcdcdc" stroke-width="1.4"/>
<text x="1354.3" y="620.9" font-size="15.8" fill="#d4d4d4" text-anchor="middle" textLength="20.6" lengthAdjust="spacingAndGlyphs">0,4</text>
<line x1="1031" y1="270" x2="1036.5" y2="270" stroke="#dcdcdc" stroke-width="1.2"/>
<text x="1030.6" y="276.4" font-size="15.8" fill="#d4d4d4" text-anchor="end" textLength="20.6" lengthAdjust="spacingAndGlyphs">0,5</text>
<line x1="1434" y1="597.5" x2="1434" y2="603.6" stroke="#dcdcdc" stroke-width="1.4"/>
<text x="1433.7" y="620.9" font-size="15.8" fill="#d4d4d4" text-anchor="middle" textLength="20.6" lengthAdjust="spacingAndGlyphs">0,5</text>
<line x1="1031" y1="204.5" x2="1036.5" y2="204.5" stroke="#dcdcdc" stroke-width="1.2"/>
<text x="1030.6" y="210.9" font-size="15.8" fill="#d4d4d4" text-anchor="end" textLength="20.6" lengthAdjust="spacingAndGlyphs">0,6</text>
<line x1="1513.4" y1="597.5" x2="1513.4" y2="603.6" stroke="#dcdcdc" stroke-width="1.4"/>
<text x="1513.1" y="620.9" font-size="15.8" fill="#d4d4d4" text-anchor="middle" textLength="20.6" lengthAdjust="spacingAndGlyphs">0,6</text>
<line x1="1031" y1="139" x2="1036.5" y2="139" stroke="#dcdcdc" stroke-width="1.2"/>
<text x="1030.6" y="145.4" font-size="15.8" fill="#d4d4d4" text-anchor="end" textLength="20.6" lengthAdjust="spacingAndGlyphs">0,7</text>
<line x1="1592.8" y1="597.5" x2="1592.8" y2="603.6" stroke="#dcdcdc" stroke-width="1.4"/>
<text x="1592.5" y="620.9" font-size="15.8" fill="#d4d4d4" text-anchor="middle" textLength="20.6" lengthAdjust="spacingAndGlyphs">0,7</text>
<line x1="1031" y1="73.5" x2="1036.5" y2="73.5" stroke="#dcdcdc" stroke-width="1.2"/>
<text x="1030.6" y="79.9" font-size="15.8" fill="#d4d4d4" text-anchor="end" textLength="20.6" lengthAdjust="spacingAndGlyphs">0,8</text>
<line x1="1672.2" y1="597.5" x2="1672.2" y2="603.6" stroke="#dcdcdc" stroke-width="1.4"/>
<text x="1671.9" y="620.9" font-size="15.8" fill="#d4d4d4" text-anchor="middle" textLength="20.6" lengthAdjust="spacingAndGlyphs">0,8</text>
<text x="1318.7" y="41.6" font-size="16" fill="#d4d4d4" textLength="77.7" lengthAdjust="spacingAndGlyphs">CIE 1931 xy</text>
<rect x="1263.7" y="373.2" width="15.2" height="15.6" fill="#aabfbf" fill-opacity=".28" stroke="#fff" stroke-opacity=".82" stroke-width="1.6"/>
<rect x="1249.7" y="373.3" width="15.2" height="15.6" fill="#94bebd" fill-opacity=".28" stroke="#fff" stroke-opacity=".82" stroke-width="1.6"/>
<rect x="1235.7" y="373.3" width="15.2" height="15.6" fill="#7dbebc" fill-opacity=".28" stroke="#fff" stroke-opacity=".82" stroke-width="1.6"/>
<rect x="1221.7" y="373.4" width="15.2" height="15.6" fill="#67bdbb" fill-opacity=".28" stroke="#fff" stroke-opacity=".82" stroke-width="1.6"/>
<rect x="1207.6" y="373.3" width="15.4" height="15.8" fill="none" stroke="#fff" stroke-opacity=".95" stroke-width="1.7"/>
<rect x="1275.9" y="337.2" width="15.2" height="15.6" fill="#aabfaa" fill-opacity=".28" stroke="#fff" stroke-opacity=".82" stroke-width="1.6"/>
<rect x="1273.1" y="303.1" width="15.2" height="15.6" fill="#93bd93" fill-opacity=".28" stroke="#fff" stroke-opacity=".82" stroke-width="1.6"/>
<rect x="1271.5" y="267.8" width="15.2" height="15.6" fill="#7dbc7d" fill-opacity=".28" stroke="#fff" stroke-opacity=".82" stroke-width="1.6"/>
<rect x="1269.8" y="233.6" width="15.2" height="15.6" fill="#6b6" fill-opacity=".28" stroke="#fff" stroke-opacity=".82" stroke-width="1.6"/>
<rect x="1266.9" y="195.2" width="15.4" height="15.8" fill="none" stroke="#fff" stroke-opacity=".95" stroke-width="1.7"/>
<rect x="1294.1" y="349.5" width="15.2" height="15.6" fill="#c0bfaa" fill-opacity=".28" stroke="#fff" stroke-opacity=".82" stroke-width="1.6"/>
<rect x="1311.9" y="325.3" width="15.2" height="15.6" fill="#c0be93" fill-opacity=".28" stroke="#fff" stroke-opacity=".82" stroke-width="1.6"/>
<rect x="1329.1" y="303.4" width="15.2" height="15.6" fill="#c0bd7d" fill-opacity=".28" stroke="#fff" stroke-opacity=".82" stroke-width="1.6"/>
<rect x="1344.6" y="282.0" width="15.2" height="15.6" fill="#c0bc66" fill-opacity=".28" stroke="#fff" stroke-opacity=".82" stroke-width="1.6"/>
<rect x="1362.7" y="257.2" width="15.4" height="15.8" fill="none" stroke="#fff" stroke-opacity=".95" stroke-width="1.7"/>
<rect x="1327.9" y="373.3" width="15.2" height="15.6" fill="#c3a7a8" fill-opacity=".28" stroke="#fff" stroke-opacity=".82" stroke-width="1.6"/>
<rect x="1381.8" y="373.3" width="15.2" height="15.6" fill="#c78d90" fill-opacity=".28" stroke="#fff" stroke-opacity=".82" stroke-width="1.6"/>
<rect x="1428.9" y="373.3" width="15.2" height="15.6" fill="#ca7479" fill-opacity=".28" stroke="#fff" stroke-opacity=".82" stroke-width="1.6"/>
<rect x="1480.6" y="373.3" width="15.2" height="15.6" fill="#ce5b61" fill-opacity=".28" stroke="#fff" stroke-opacity=".82" stroke-width="1.6"/>
<rect x="1537.8" y="373.2" width="15.4" height="15.8" fill="none" stroke="#fff" stroke-opacity=".95" stroke-width="1.7"/>
<rect x="1278.5" y="396.7" width="15.2" height="15.6" fill="#bfa8be" fill-opacity=".28" stroke="#fff" stroke-opacity=".82" stroke-width="1.6"/>
<rect x="1279.7" y="420.1" width="15.2" height="15.6" fill="#be90bc" fill-opacity=".28" stroke="#fff" stroke-opacity=".82" stroke-width="1.6"/>
<rect x="1280.8" y="441.1" width="15.2" height="15.6" fill="#be78ba" fill-opacity=".28" stroke="#fff" stroke-opacity=".82" stroke-width="1.6"/>
<rect x="1283.0" y="463.2" width="15.2" height="15.6" fill="#bd60b8" fill-opacity=".28" stroke="#fff" stroke-opacity=".82" stroke-width="1.6"/>
<rect x="1284.3" y="487.0" width="15.4" height="15.8" fill="none" stroke="#fff" stroke-opacity=".95" stroke-width="1.7"/>
<rect x="1251.9" y="408.4" width="15.2" height="15.6" fill="#a8a8c1" fill-opacity=".28" stroke="#fff" stroke-opacity=".82" stroke-width="1.6"/>
<rect x="1225.2" y="444.1" width="15.2" height="15.6" fill="#8f8fc1" fill-opacity=".28" stroke="#fff" stroke-opacity=".82" stroke-width="1.6"/>
<rect x="1201.6" y="476.5" width="15.2" height="15.6" fill="#7777c2" fill-opacity=".28" stroke="#fff" stroke-opacity=".82" stroke-width="1.6"/>
<rect x="1176.0" y="510.8" width="15.2" height="15.6" fill="#5f5fc2" fill-opacity=".28" stroke="#fff" stroke-opacity=".82" stroke-width="1.6"/>
<rect x="1147.9" y="549.1" width="15.4" height="15.8" fill="none" stroke="#fff" stroke-opacity=".95" stroke-width="1.7"/>
<rect x="1276.9" y="373.1" width="15.4" height="15.6" fill="#fff" fill-opacity=".5" stroke="#000" stroke-width="1.8"/>
<circle cx="1270.5" cy="380.8" r="5" fill="#aabfbf" stroke="#100c18" stroke-width="1.4"/>
<circle cx="1259.2" cy="380.8" r="5" fill="#94bebd" stroke="#100c18" stroke-width="1.4"/>
<circle cx="1245.3" cy="380.8" r="5" fill="#7dbebc" stroke="#100c18" stroke-width="1.4"/>
<circle cx="1232.4" cy="378.8" r="5" fill="#67bdbb" stroke="#100c18" stroke-width="1.4"/>
<circle cx="1221.3" cy="378.8" r="5" fill="#18bab6" stroke="#100c18" stroke-width="1.4"/>
<circle cx="1284.3" cy="341.7" r="5" fill="#aabfaa" stroke="#100c18" stroke-width="1.4"/>
<circle cx="1283.4" cy="307.0" r="5" fill="#93bd93" stroke="#100c18" stroke-width="1.4"/>
<circle cx="1281.5" cy="271.2" r="5" fill="#7dbc7d" stroke="#100c18" stroke-width="1.4"/>
<circle cx="1280.5" cy="235.5" r="5" fill="#6b6" stroke="#100c18" stroke-width="1.4"/>
<circle cx="1280.5" cy="201.7" r="5" fill="#16b616" stroke="#100c18" stroke-width="1.4"/>
<circle cx="1301.3" cy="355.3" r="5" fill="#c0bfaa" stroke="#100c18" stroke-width="1.4"/>
<circle cx="1319.4" cy="329.9" r="5" fill="#c0be93" stroke="#100c18" stroke-width="1.4"/>
<circle cx="1335.5" cy="307.0" r="5" fill="#c0bd7d" stroke="#100c18" stroke-width="1.4"/>
<circle cx="1350.5" cy="284.7" r="5" fill="#c0bc66" stroke="#100c18" stroke-width="1.4"/>
<circle cx="1367.5" cy="261.2" r="5" fill="#c0b816" stroke="#100c18" stroke-width="1.4"/>
<circle cx="1333.4" cy="380.9" r="5" fill="#c3a7a8" stroke="#100c18" stroke-width="1.4"/>
<circle cx="1385.4" cy="380.9" r="5" fill="#c78d90" stroke="#100c18" stroke-width="1.4"/>
<circle cx="1436.3" cy="381.0" r="5" fill="#ca7479" stroke="#100c18" stroke-width="1.4"/>
<circle cx="1490.0" cy="381.0" r="5" fill="#ce5b61" stroke="#100c18" stroke-width="1.4"/>
<circle cx="1539.8" cy="380.8" r="5" fill="#da000c" stroke="#100c18" stroke-width="1.4"/>
<circle cx="1286.0" cy="405.7" r="5" fill="#bfa8be" stroke="#100c18" stroke-width="1.4"/>
<circle cx="1286.0" cy="429.9" r="5" fill="#be90bc" stroke="#100c18" stroke-width="1.4"/>
<circle cx="1286.0" cy="451.7" r="5" fill="#be78ba" stroke="#100c18" stroke-width="1.4"/>
<circle cx="1287.2" cy="476.9" r="5" fill="#bd60b8" stroke="#100c18" stroke-width="1.4"/>
<circle cx="1287.2" cy="500.8" r="5" fill="#ba0ab0" stroke="#100c18" stroke-width="1.4"/>
<circle cx="1259.7" cy="418.1" r="5" fill="#a8a8c1" stroke="#100c18" stroke-width="1.4"/>
<circle cx="1234.1" cy="455.0" r="5" fill="#8f8fc1" stroke="#100c18" stroke-width="1.4"/>
<circle cx="1209.9" cy="488.7" r="5" fill="#7777c2" stroke="#100c18" stroke-width="1.4"/>
<circle cx="1184.9" cy="525.9" r="5" fill="#5f5fc2" stroke="#100c18" stroke-width="1.4"/>
<circle cx="1161.6" cy="559.7" r="5" fill="#0808c4" stroke="#100c18" stroke-width="1.4"/>
<circle cx="1284.4" cy="380.9" r="5" fill="#fff" stroke="#0c0c0c" stroke-width="1.2"/></svg>
<div class="g"><i style="top:46px;left:1514px;width:191px;background:linear-gradient(90deg,#b2fd00 0,#fefe00 153px,#feeb00 191px)"></i><i style="top:47px;left:1514px;width:191px;background:linear-gradient(90deg,#b2fd00 0,#fefe00 152px,#feeb00 191px)"></i><i style="top:48px;left:1514px;width:191px;background:linear-gradient(90deg,#b2fd00 0,#fefe00 152px,#feeb00 191px)"></i><i style="top:49px;left:1514px;width:191px;background:linear-gradient(90deg,#b2fd00 0,#fefe00 151px,#feeb00 191px)"></i><i style="top:50px;left:1514px;width:191px;background:linear-gradient(90deg,#b3fd00 0,#fefe00 151px,#feea00 191px)"></i><i style="top:51px;left:1514px;width:191px;background:linear-gradient(90deg,#b3fd00 0,#fefe00 150px,#feea00 191px)"></i><i style="top:52px;left:1514px;width:191px;background:linear-gradient(90deg,#b3fd00 0,#fefe00 149px,#feea00 191px)"></i><i style="top:53px;left:1514px;width:191px;background:linear-gradient(90deg,#b3fd00 0,#fefe00 149px,#fee900 191px)"></i><i style="top:54px;left:1514px;width:191px;background:linear-gradient(90deg,#b3fd00 0,#fefe00 148px,#fee900 191px)"></i><i style="top:55px;left:1514px;width:191px;background:linear-gradient(90deg,#b4fd00 0,#fefe00 148px,#fee900 191px)"></i><i style="top:56px;left:1514px;width:191px;background:linear-gradient(90deg,#b4fd00 0,#fefe00 147px,#fee900 191px)"></i><i style="top:57px;left:1514px;width:191px;background:linear-gradient(90deg,#b4fd00 0,#fefe00 147px,#fee800 191px)"></i><i style="top:58px;left:1514px;width:191px;background:linear-gradient(90deg,#b4fd00 0,#fefe00 146px,#fee800 191px)"></i><i style="top:59px;left:1514px;width:191px;background:linear-gradient(90deg,#b5fd00 0,#fefe00 146px,#fee800 191px)"></i><i style="top:60px;left:1514px;width:191px;background:linear-gradient(90deg,#b5fd00 0,#fefe00 145px,#fee800 191px)"></i><i style="top:61px;left:1514px;width:191px;background:linear-gradient(90deg,#b5fd00 0,#fefe00 144px,#fee700 191px)"></i><i style="top:62px;left:1514px;width:191px;background:linear-gradient(90deg,#b5fd00 0,#fefe00 144px,#fee700 191px)"></i><i style="top:63px;left:1514px;width:191px;background:linear-gradient(90deg,#b6fd00 0,#fefe00 143px,#fee700 191px)"></i><i style="top:64px;left:1514px;width:191px;background:linear-gradient(90deg,#b6fd00 0,#fefe00 143px,#fee600 191px)"></i><i style="top:65px;left:1514px;width:191px;background:linear-gradient(90deg,#b6fd00 0,#fefe00 142px,#fee600 191px)"></i><i style="top:66px;left:1514px;width:191px;background:linear-gradient(90deg,#b6fd00 0,#fefe00 142px,#fee600 191px)"></i><i style="top:67px;left:1514px;width:191px;background:linear-gradient(90deg,#b7fd00 0,#fefe00 141px,#fee600 191px)"></i><i style="top:68px;left:1514px;width:191px;background:linear-gradient(90deg,#b7fd00 0,#fefe00 140px,#fee500 191px)"></i><i style="top:69px;left:1514px;width:191px;background:linear-gradient(90deg,#b7fd00 0,#fefe00 140px,#fee500 191px)"></i><i style="top:70px;left:1514px;width:191px;background:linear-gradient(90deg,#b7fd00 0,#fefe00 139px,#fee500 191px)"></i><i style="top:71px;left:1514px;width:191px;background:linear-gradient(90deg,#b8fd01 0,#fefe00 139px,#fee500 191px)"></i><i style="top:72px;left:1514px;width:191px;background:linear-gradient(90deg,#b8fd01 0,#fefe00 138px,#fee400 191px)"></i><i style="top:73px;left:1514px;width:191px;background:linear-gradient(90deg,#b8fd01 0,#fefe00 138px,#fee400 191px)"></i><i style="top:74px;left:1514px;width:191px;background:linear-gradient(90deg,#b8fd01 0,#fefe00 137px,#fee400 191px)"></i><i style="top:75px;left:1514px;width:191px;background:linear-gradient(90deg,#b9fd01 0,#fefe00 136px,#fee400 191px)"></i><i style="top:76px;left:1514px;width:191px;background:linear-gradient(90deg,#b9fd01 0,#fefe00 136px,#fee300 191px)"></i><i style="top:77px;left:1514px;width:191px;background:linear-gradient(90deg,#b9fd01 0,#fefe00 135px,#fee300 191px)"></i><i style="top:78px;left:1514px;width:191px;background:linear-gradient(90deg,#b9fd02 0,#fefe00 135px,#fee300 191px)"></i><i style="top:79px;left:1514px;width:191px;background:linear-gradient(90deg,#b9fd02 0,#fefe00 134px,#fee200 191px)"></i><i style="top:80px;left:1514px;width:191px;background:linear-gradient(90deg,#bafd02 0,#fefe00 134px,#fee200 191px)"></i><i style="top:81px;left:1514px;width:191px;background:linear-gradient(90deg,#bafd02 0,#fefe00 133px,#fee200 191px)"></i><i style="top:82px;left:1514px;width:191px;background:linear-gradient(90deg,#bafd02 0,#fefe00 132px,#fee200 191px)"></i><i style="top:83px;left:1514px;width:191px;background:linear-gradient(90deg,#bafd02 0,#fefe00 132px,#fee100 191px)"></i><i style="top:84px;left:1514px;width:191px;background:linear-gradient(90deg,#bbfd02 0,#fefe00 131px,#fee100 191px)"></i><i style="top:85px;left:1514px;width:191px;background:linear-gradient(90deg,#bbfd02 0,#fefe00 131px,#fee100 191px)"></i><i style="top:86px;left:1514px;width:191px;background:linear-gradient(90deg,#bbfd03 0,#c7fe00 24px,#fefe00 130px,#fee100 191px)"></i><i style="top:87px;left:1514px;width:191px;background:linear-gradient(90deg,#bbfd03 0,#c8fe00 25px,#fefe00 130px,#fee000 191px)"></i><i style="top:88px;left:1514px;width:191px;background:linear-gradient(90deg,#bcfd03 0,#c8fe00 26px,#fefe00 129px,#fee000 191px)"></i><i style="top:89px;left:1514px;width:191px;background:linear-gradient(90deg,#bcfd03 0,#c9fe00 27px,#fefe00 128px,#fee000 191px)"></i><i style="top:90px;left:1514px;width:191px;background:linear-gradient(90deg,#bcfd03 0,#cafe00 29px,#fefe00 128px,#fedf00 191px)"></i><i style="top:91px;left:1514px;width:191px;background:linear-gradient(90deg,#bcfd03 0,#cbfe00 30px,#fefe00 127px,#fedf00 191px)"></i><i style="top:92px;left:1514px;width:191px;background:linear-gradient(90deg,#bdfd03 0,#ccfe00 31px,#fefe00 127px,#fedf00 191px)"></i><i style="top:93px;left:1514px;width:191px;background:linear-gradient(90deg,#bdfd03 0,#cdfe00 32px,#fefe00 126px,#fedf00 191px)"></i><i style="top:94px;left:1514px;width:191px;background:linear-gradient(90deg,#bdfd04 0,#cefe00 33px,#fefe00 126px,#fede00 191px)"></i><i style="top:95px;left:1514px;width:191px;background:linear-gradient(90deg,#bdfd04 0,#cffe00 35px,#fefe00 125px,#fede00 191px)"></i><i style="top:96px;left:1514px;width:191px;background:linear-gradient(90deg,#befd04 0,#d0fe00 36px,#fefe00 124px,#fede00 191px)"></i><i style="top:97px;left:1514px;width:191px;background:linear-gradient(90deg,#befd04 0,#d0fe00 37px,#fefe00 124px,#fede00 191px)"></i><i style="top:98px;left:1514px;width:191px;background:linear-gradient(90deg,#befe04 0,#d1fe00 38px,#fefe00 123px,#fedd00 191px)"></i><i style="top:99px;left:1514px;width:191px;background:linear-gradient(90deg,#befe04 0,#d2fe00 39px,#fefe00 123px,#fedd00 191px)"></i><i style="top:100px;left:1514px;width:191px;background:linear-gradient(90deg,#bffe04 0,#d3fe00 40px,#fefe00 122px,#fedd00 191px)"></i><i style="top:101px;left:1514px;width:191px;background:linear-gradient(90deg,#bffe04 0,#d4fe00 42px,#fefe00 122px,#fedd00 191px)"></i><i style="top:102px;left:1514px;width:191px;background:linear-gradient(90deg,#bffe05 0,#d5fe00 43px,#fefe00 121px,#fedc00 191px)"></i><i style="top:103px;left:1514px;width:191px;background:linear-gradient(90deg,#bffe05 0,#d6fe00 44px,#fefe00 120px,#fedc00 191px)"></i><i style="top:104px;left:1514px;width:191px;background:linear-gradient(90deg,#c0fe05 0,#d6fe00 45px,#fefe00 120px,#fedc00 191px)"></i><i style="top:105px;left:1514px;width:191px;background:linear-gradient(90deg,#c0fe05 0,#d7fe00 46px,#fefe00 119px,#fedc00 191px)"></i><i style="top:106px;left:1514px;width:191px;background:linear-gradient(90deg,#c0fe05 0,#d8fe00 48px,#fefe00 119px,#fedb00 191px)"></i><i style="top:107px;left:1514px;width:191px;background:linear-gradient(90deg,#c0fe05 0,#d9fe00 49px,#fefe00 118px,#fedb00 191px)"></i><i style="top:108px;left:1514px;width:191px;background:linear-gradient(90deg,#c1fe05 0,#dafe00 50px,#fefe00 118px,#fedb00 191px)"></i><i style="top:109px;left:1514px;width:191px;background:linear-gradient(90deg,#c1fe06 0,#dbfe00 51px,#fefe00 117px,#feda00 191px)"></i><i style="top:110px;left:1514px;width:191px;background:linear-gradient(90deg,#c1fe06 0,#dcfe00 52px,#fefe00 116px,#feda00 191px)"></i><i style="top:111px;left:1514px;width:191px;background:linear-gradient(90deg,#c1fe06 0,#dcfe00 53px,#fefe00 116px,#feda00 191px)"></i><i style="top:112px;left:1514px;width:191px;background:linear-gradient(90deg,#c2fe06 0,#defe00 55px,#fefe00 115px,#feda00 191px)"></i><i style="top:113px;left:1514px;width:191px;background:linear-gradient(90deg,#c2fe06 0,#dffe00 56px,#fefe00 115px,#fed900 191px)"></i><i style="top:114px;left:1514px;width:191px;background:linear-gradient(90deg,#c2fe06 0,#dffe00 57px,#fefe00 114px,#fed900 191px)"></i><i style="top:115px;left:1514px;width:191px;background:linear-gradient(90deg,#c3fe06 0,#e0fe00 58px,#fefe00 114px,#fed900 191px)"></i><i style="top:116px;left:1514px;width:191px;background:linear-gradient(90deg,#c3fe07 0,#e1fe00 59px,#fefe00 113px,#fed900 191px)"></i><i style="top:117px;left:1514px;width:191px;background:linear-gradient(90deg,#c3fe07 0,#e2fe00 61px,#fefe00 112px,#fed800 191px)"></i><i style="top:118px;left:1514px;width:191px;background:linear-gradient(90deg,#c3fe07 0,#e3fe00 62px,#fefe00 112px,#fed800 191px)"></i><i style="top:119px;left:1514px;width:191px;background:linear-gradient(90deg,#c4fe07 0,#e4fe00 63px,#fefe00 111px,#fed800 191px)"></i><i style="top:120px;left:1514px;width:191px;background:linear-gradient(90deg,#c4fe07 0,#e5fe00 64px,#fefe00 111px,#fed800 191px)"></i><i style="top:121px;left:1514px;width:191px;background:linear-gradient(90deg,#c4fe07 0,#e6fe00 65px,#fefe00 110px,#fed700 191px)"></i><i style="top:122px;left:1514px;width:191px;background:linear-gradient(90deg,#c4fe07 0,#e6fe00 66px,#fefe00 110px,#fed700 191px)"></i><i style="top:123px;left:1514px;width:191px;background:linear-gradient(90deg,#c5fe07 0,#e8fe00 68px,#fefe00 109px,#fed700 191px)"></i><i style="top:124px;left:1514px;width:191px;background:linear-gradient(90deg,#c5fe08 0,#e9fe00 69px,#fefe00 108px,#fed700 191px)"></i><i style="top:125px;left:1514px;width:191px;background:linear-gradient(90deg,#c5fe08 0,#e9fe00 70px,#fefe00 108px,#fed600 191px)"></i><i style="top:126px;left:1514px;width:191px;background:linear-gradient(90deg,#c5fe08 0,#eafe00 71px,#fefe00 107px,#fed600 191px)"></i><i style="top:127px;left:1514px;width:191px;background:linear-gradient(90deg,#c6fe08 0,#ebfe00 72px,#fefe00 107px,#fed600 191px)"></i><i style="top:128px;left:1514px;width:191px;background:linear-gradient(90deg,#c6fe08 0,#ecfe00 74px,#fefe00 106px,#fed600 191px)"></i><i style="top:129px;left:1514px;width:191px;background:linear-gradient(90deg,#c6fe08 0,#edfe00 75px,#fefe00 106px,#fed500 191px)"></i><i style="top:130px;left:1514px;width:191px;background:linear-gradient(90deg,#c6fe08 0,#eefe00 76px,#fefe00 105px,#fed500 191px)"></i><i style="top:131px;left:1514px;width:191px;background:linear-gradient(90deg,#c7fe09 0,#effe00 77px,#fefe00 104px,#fed500 191px)"></i><i style="top:132px;left:1514px;width:191px;background:linear-gradient(90deg,#c7fe09 0,#f0fe00 78px,#fefe00 104px,#fed400 191px)"></i><i style="top:133px;left:1514px;width:191px;background:linear-gradient(90deg,#c7fe09 0,#fefe00 103px,#fed400 191px)"></i><i style="top:134px;left:1514px;width:191px;background:linear-gradient(90deg,#c7fe09 0,#fefe00 103px,#fed400 191px)"></i><i style="top:135px;left:1514px;width:191px;background:linear-gradient(90deg,#c8fe09 0,#fefe00 102px,#fed400 191px)"></i><i style="top:136px;left:1514px;width:191px;background:linear-gradient(90deg,#c8fe09 0,#fefe00 102px,#fed300 191px)"></i><i style="top:137px;left:1514px;width:191px;background:linear-gradient(90deg,#c8fe09 0,#fefe00 101px,#fed300 191px)"></i><i style="top:138px;left:1514px;width:191px;background:linear-gradient(90deg,#c9fe0a 0,#fefe00 101px,#fed300 191px)"></i><i style="top:139px;left:1514px;width:191px;background:linear-gradient(90deg,#c9fe0a 0,#fefe00 100px,#fed300 191px)"></i><i style="top:140px;left:1514px;width:191px;background:linear-gradient(90deg,#c9fe0a 0,#fefe00 99px,#fed200 191px)"></i><i style="top:141px;left:1514px;width:191px;background:linear-gradient(90deg,#c9fe0a 0,#fefe00 99px,#fed200 191px)"></i><i style="top:142px;left:1514px;width:191px;background:linear-gradient(90deg,#cafe0a 0,#fefe00 98px,#fed200 191px)"></i><i style="top:143px;left:1514px;width:191px;background:linear-gradient(90deg,#cafe0a 0,#fefe00 98px,#fed200 191px)"></i><i style="top:144px;left:1514px;width:191px;background:linear-gradient(90deg,#cafe0a 0,#fefe00 97px,#fed100 191px)"></i><i style="top:145px;left:1514px;width:191px;background:linear-gradient(90deg,#cafe0b 0,#fefe00 97px,#fed100 191px)"></i><i style="top:146px;left:1514px;width:191px;background:linear-gradient(90deg,#cbfe0b 0,#fefe00 96px,#fed100 191px)"></i><i style="top:147px;left:1514px;width:191px;background:linear-gradient(90deg,#cbfe0b 0,#fefe00 95px,#fed100 191px)"></i><i style="top:148px;left:1514px;width:191px;background:linear-gradient(90deg,#cbfe0b 0,#fefe00 95px,#fed000 191px)"></i><i style="top:149px;left:1514px;width:191px;background:linear-gradient(90deg,#ccfe0b 0,#fefe01 94px,#fed000 191px)"></i><i style="top:150px;left:1514px;width:191px;background:linear-gradient(90deg,#ccfe0b 0,#fefe01 94px,#fed000 191px)"></i><i style="top:151px;left:1514px;width:191px;background:linear-gradient(90deg,#ccfe0b 0,#fefe01 93px,#fed000 191px)"></i><i style="top:152px;left:1514px;width:191px;background:linear-gradient(90deg,#ccfe0c 0,#fefe01 93px,#fecf00 191px)"></i><i style="top:153px;left:1514px;width:191px;background:linear-gradient(90deg,#cdfe0c 0,#fefe01 92px,#fecf00 191px)"></i><i style="top:154px;left:1514px;width:191px;background:linear-gradient(90deg,#cdfe0c 0,#fefe02 91px,#fecf00 191px)"></i><i style="top:155px;left:1514px;width:191px;background:linear-gradient(90deg,#cdfe0c 0,#fefe02 91px,#fecf00 191px)"></i><i style="top:156px;left:1514px;width:191px;background:linear-gradient(90deg,#cdfe0c 0,#fefe02 90px,#fece00 191px)"></i><i style="top:157px;left:1514px;width:191px;background:linear-gradient(90deg,#cefe0c 0,#fefe02 90px,#fece00 191px)"></i><i style="top:158px;left:1514px;width:191px;background:linear-gradient(90deg,#cefe0c 0,#fefe02 89px,#fece00 191px)"></i><i style="top:159px;left:1514px;width:191px;background:linear-gradient(90deg,#cefe0d 0,#fefe03 89px,#fef200 111px,#fece00 191px)"></i><i style="top:160px;left:1514px;width:191px;background:linear-gradient(90deg,#cffe0d 0,#fefe03 88px,#fef100 112px,#fecd00 191px)"></i><i style="top:161px;left:1514px;width:191px;background:linear-gradient(90deg,#cffe0d 0,#fefe03 87px,#fef000 113px,#fecd00 191px)"></i><i style="top:162px;left:1514px;width:191px;background:linear-gradient(90deg,#cffe0d 0,#fefe03 87px,#fef000 114px,#fecd00 191px)"></i><i style="top:163px;left:1514px;width:191px;background:linear-gradient(90deg,#cffe0d 0,#fefe03 86px,#feee00 116px,#fecd00 191px)"></i><i style="top:164px;left:1514px;width:191px;background:linear-gradient(90deg,#d0fe0d 0,#fefe04 86px,#feee00 117px,#fecc00 191px)"></i><i style="top:165px;left:1514px;width:191px;background:linear-gradient(90deg,#d0fe0d 0,#fefe04 85px,#feed00 118px,#fecc00 191px)"></i><i style="top:166px;left:1514px;width:191px;background:linear-gradient(90deg,#d0fe0e 0,#fefe04 85px,#feec00 119px,#fecc00 191px)"></i><i style="top:167px;left:1514px;width:191px;background:linear-gradient(90deg,#d0fe0e 0,#fefe04 84px,#feeb00 120px,#fecc00 191px)"></i><i style="top:168px;left:1514px;width:191px;background:linear-gradient(90deg,#d1fe0e 0,#fefe05 83px,#feea00 122px,#ffcb00 191px)"></i><i style="top:169px;left:1514px;width:191px;background:linear-gradient(90deg,#d1fe0e 0,#fefe05 83px,#fee900 123px,#ffcb00 191px)"></i><i style="top:170px;left:1514px;width:191px;background:linear-gradient(90deg,#d1fe0e 0,#fefe05 82px,#fee800 124px,#ffcb00 191px)"></i><i style="top:171px;left:1514px;width:191px;background:linear-gradient(90deg,#d2fe0e 0,#fefe05 82px,#fee800 125px,#ffcb00 191px)"></i><i style="top:172px;left:1514px;width:191px;background:linear-gradient(90deg,#d2fe0e 0,#fefe05 81px,#fee700 126px,#ffca00 191px)"></i><i style="top:173px;left:1514px;width:191px;background:linear-gradient(90deg,#d2fe0f 0,#fefe06 81px,#fee600 127px,#ffca00 191px)"></i><i style="top:174px;left:1514px;width:191px;background:linear-gradient(90deg,#d2fe0f 0,#fefe06 80px,#fee500 129px,#ffca00 191px)"></i><i style="top:175px;left:1514px;width:191px;background:linear-gradient(90deg,#d3fe0f 0,#fefe06 79px,#fee400 130px,#ffca00 191px)"></i><i style="top:176px;left:1514px;width:191px;background:linear-gradient(90deg,#d3fe0f 0,#fefe06 79px,#fee300 131px,#ffc900 191px)"></i><i style="top:177px;left:1514px;width:191px;background:linear-gradient(90deg,#d3fe0f 0,#fefe06 78px,#fee200 132px,#ffc900 191px)"></i><i style="top:178px;left:1514px;width:191px;background:linear-gradient(90deg,#d4fe0f 0,#fefe07 78px,#fee200 133px,#ffc900 191px)"></i><i style="top:179px;left:1514px;width:191px;background:linear-gradient(90deg,#d4fe10 0,#fefe07 77px,#fee100 134px,#ffc900 191px)"></i><i style="top:180px;left:1514px;width:191px;background:linear-gradient(90deg,#d4fe10 0,#fefe07 77px,#fee000 136px,#ffc800 191px)"></i><i style="top:181px;left:1514px;width:191px;background:linear-gradient(90deg,#d4fe10 0,#fefe07 76px,#fedf00 137px,#ffc800 191px)"></i><i style="top:182px;left:1514px;width:191px;background:linear-gradient(90deg,#d5fe10 0,#fefe08 75px,#fede00 138px,#ffc800 191px)"></i><i style="top:183px;left:1514px;width:191px;background:linear-gradient(90deg,#d5fe10 0,#fefe08 75px,#fede00 139px,#ffc800 191px)"></i><i style="top:184px;left:1514px;width:191px;background:linear-gradient(90deg,#d5fe10 0,#fefe08 74px,#fedd00 140px,#ffc700 191px)"></i><i style="top:185px;left:1514px;width:191px;background:linear-gradient(90deg,#d6fe10 0,#fefe08 74px,#fedc00 142px,#ffc700 191px)"></i><i style="top:186px;left:1514px;width:191px;background:linear-gradient(90deg,#d6fe11 0,#fefe08 73px,#fedb00 143px,#ffc700 191px)"></i><i style="top:187px;left:1514px;width:191px;background:linear-gradient(90deg,#d6fe11 0,#fefe09 73px,#feda00 144px,#ffc700 191px)"></i><i style="top:188px;left:1514px;width:191px;background:linear-gradient(90deg,#d6fe11 0,#fefe09 72px,#fed900 145px,#ffc600 191px)"></i><i style="top:189px;left:1514px;width:191px;background:linear-gradient(90deg,#d7fe11 0,#fefe09 71px,#fed900 146px,#ffc600 191px)"></i><i style="top:190px;left:1514px;width:191px;background:linear-gradient(90deg,#d7fe11 0,#fefe09 71px,#fed800 147px,#ffc600 191px)"></i><i style="top:191px;left:1514px;width:191px;background:linear-gradient(90deg,#d7fe11 0,#fefe09 70px,#fed700 149px,#ffc600 191px)"></i><i style="top:192px;left:1514px;width:191px;background:linear-gradient(90deg,#d8fe11 0,#fefe0a 70px,#fed600 150px,#ffc500 191px)"></i><i style="top:193px;left:1514px;width:191px;background:linear-gradient(90deg,#d8fe12 0,#fefe0a 69px,#fed500 151px,#ffc500 191px)"></i><i style="top:194px;left:1514px;width:191px;background:linear-gradient(90deg,#d8fe12 0,#fefe0a 69px,#fed500 152px,#ffc500 191px)"></i><i style="top:195px;left:1514px;width:191px;background:linear-gradient(90deg,#d8fe12 0,#fefe0a 68px,#fed400 153px,#ffc500 191px)"></i><i style="top:196px;left:1514px;width:191px;background:linear-gradient(90deg,#d9fe12 0,#fefe0b 67px,#fed300 154px,#ffc400 191px)"></i><i style="top:197px;left:1514px;width:191px;background:linear-gradient(90deg,#d9fe12 0,#fefe0b 67px,#fed200 156px,#ffc400 191px)"></i><i style="top:198px;left:1514px;width:191px;background:linear-gradient(90deg,#d9fe12 0,#fefe0b 66px,#fed200 157px,#ffc400 191px)"></i><i style="top:199px;left:1514px;width:191px;background:linear-gradient(90deg,#dafe13 0,#fefe0b 66px,#fed100 158px,#ffc400 191px)"></i><i style="top:200px;left:1514px;width:191px;background:linear-gradient(90deg,#dafe13 0,#fefe0b 65px,#fedf04 125px,#ffc300 191px)"></i><i style="top:201px;left:1514px;width:191px;background:linear-gradient(90deg,#dafe13 0,#fefe0c 65px,#fedf04 125px,#ffc300 191px)"></i><i style="top:202px;left:1514px;width:191px;background:linear-gradient(90deg,#dafe13 0,#fefe0c 64px,#fedf04 124px,#ffc300 191px)"></i><i style="top:203px;left:1514px;width:191px;background:linear-gradient(90deg,#dbfe13 0,#fefe0c 63px,#fede04 125px,#ffc300 191px)"></i><i style="top:204px;left:1514px;width:191px;background:linear-gradient(90deg,#dbfe13 0,#fefe0c 63px,#fedf04 124px,#ffc200 191px)"></i><i style="top:205px;left:1514px;width:191px;background:linear-gradient(90deg,#dbfe13 0,#fefe0d 62px,#fede05 124px,#ffc200 191px)"></i><i style="top:206px;left:1514px;width:191px;background:linear-gradient(90deg,#dcfe14 0,#fefe0d 62px,#fedf05 123px,#ffc200 191px)"></i><i style="top:207px;left:1514px;width:191px;background:linear-gradient(90deg,#dcfe14 0,#fefe0d 61px,#fede05 123px,#ffc200 191px)"></i><i style="top:208px;left:1514px;width:191px;background:linear-gradient(90deg,#dcfe14 0,#fefe0d 61px,#fede05 123px,#ffc100 191px)"></i><i style="top:209px;left:1514px;width:191px;background:linear-gradient(90deg,#ddfe14 0,#fefe0d 60px,#fede05 122px,#ffc100 191px)"></i><i style="top:210px;left:1514px;width:191px;background:linear-gradient(90deg,#ddfe14 0,#fefe0e 59px,#fede05 122px,#ffc100 191px)"></i><i style="top:211px;left:1514px;width:191px;background:linear-gradient(90deg,#ddfe14 0,#fefe0e 59px,#fede06 122px,#ffc100 191px)"></i><i style="top:212px;left:1514px;width:191px;background:linear-gradient(90deg,#ddfe15 0,#fefe0e 58px,#fede06 121px,#ffc000 191px)"></i><i style="top:213px;left:1514px;width:191px;background:linear-gradient(90deg,#defe15 0,#fefe0e 58px,#fedd06 121px,#ffc000 191px)"></i><i style="top:214px;left:1514px;width:191px;background:linear-gradient(90deg,#defe15 0,#fefe0f 57px,#fede06 120px,#ffc000 191px)"></i><i style="top:215px;left:1514px;width:191px;background:linear-gradient(90deg,#defe15 0,#fefe0f 57px,#fedd06 120px,#ffc000 191px)"></i><i style="top:216px;left:1514px;width:191px;background:linear-gradient(90deg,#dffe15 0,#fefe0f 56px,#fedd06 120px,#ffc000 191px)"></i><i style="top:217px;left:1514px;width:191px;background:linear-gradient(90deg,#dffe15 0,#fefe0f 55px,#fedd07 120px,#ffbf00 191px)"></i><i style="top:218px;left:1514px;width:191px;background:linear-gradient(90deg,#dffe16 0,#fefe0f 55px,#fedd07 119px,#ffbf00 191px)"></i><i style="top:219px;left:1514px;width:191px;background:linear-gradient(90deg,#e0fe16 0,#fefe10 54px,#fedd07 119px,#ffbf00 191px)"></i><i style="top:220px;left:1514px;width:191px;background:linear-gradient(90deg,#e0fe16 0,#fefe10 54px,#fedc07 119px,#ffbf00 191px)"></i><i style="top:221px;left:1514px;width:191px;background:linear-gradient(90deg,#e0fe16 0,#fefe10 53px,#fedd07 118px,#ffbe00 191px)"></i><i style="top:222px;left:1514px;width:191px;background:linear-gradient(90deg,#e0fe16 0,#fefe10 53px,#fedc07 118px,#ffbe00 191px)"></i><i style="top:223px;left:1514px;width:191px;background:linear-gradient(90deg,#e1fe16 0,#fefe11 52px,#fedc08 118px,#ffbe00 191px)"></i><i style="top:224px;left:1514px;width:191px;background:linear-gradient(90deg,#e1fe16 0,#fefe11 51px,#fedc08 118px,#ffbe00 191px)"></i><i style="top:225px;left:1514px;width:191px;background:linear-gradient(90deg,#e1fe17 0,#fefe11 51px,#fedc08 117px,#ffbd00 191px)"></i><i style="top:226px;left:1514px;width:191px;background:linear-gradient(90deg,#e2fe17 0,#fefe11 50px,#fedc08 117px,#ffbd00 191px)"></i><i style="top:227px;left:1514px;width:191px;background:linear-gradient(90deg,#e2fe17 0,#fefe11 50px,#fedb08 117px,#ffbd00 191px)"></i><i style="top:228px;left:1514px;width:191px;background:linear-gradient(90deg,#e2fe17 0,#fefe12 49px,#fedc08 116px,#ffbd00 191px)"></i><i style="top:229px;left:1514px;width:191px;background:linear-gradient(90deg,#e3fe17 0,#fefe12 49px,#fedb09 116px,#ffbc00 191px)"></i><i style="top:230px;left:1514px;width:191px;background:linear-gradient(90deg,#e3fe17 0,#fefe12 48px,#fedb09 115px,#ffbc00 191px)"></i><i style="top:231px;left:1514px;width:191px;background:linear-gradient(90deg,#e3fe18 0,#fefe12 47px,#fedb09 116px,#ffbc01 191px)"></i><i style="top:232px;left:1514px;width:191px;background:linear-gradient(90deg,#e4fe18 0,#fefe13 47px,#fedb09 115px,#ffbc01 191px)"></i><i style="top:233px;left:1514px;width:191px;background:linear-gradient(90deg,#e4fe18 0,#fefe13 46px,#fedb09 115px,#ffbb01 191px)"></i><i style="top:234px;left:1514px;width:191px;background:linear-gradient(90deg,#e4fe18 0,#fefe13 46px,#fedb09 114px,#ffbb01 191px)"></i><i style="top:235px;left:1514px;width:191px;background:linear-gradient(90deg,#e4fe18 0,#fefe13 45px,#fedb0a 114px,#ffbb01 191px)"></i><i style="top:236px;left:1514px;width:191px;background:linear-gradient(90deg,#e5fe18 0,#fefe13 45px,#feda0a 114px,#ffbb01 191px)"></i><i style="top:237px;left:1514px;width:191px;background:linear-gradient(90deg,#e5fe19 0,#fefe14 44px,#feda0a 113px,#ffba01 191px)"></i><i style="top:238px;left:1514px;width:191px;background:linear-gradient(90deg,#e5fe19 0,#fefe14 44px,#feda0a 113px,#ffba01 191px)"></i><i style="top:239px;left:1514px;width:191px;background:linear-gradient(90deg,#e6fe19 0,#fefe14 43px,#feda0a 113px,#ffba01 191px)"></i><i style="top:240px;left:1514px;width:191px;background:linear-gradient(90deg,#e6fe19 0,#fefe14 42px,#feda0a 112px,#ffba02 191px)"></i><i style="top:241px;left:1514px;width:191px;background:linear-gradient(90deg,#e6fe19 0,#fefe15 42px,#feda0b 112px,#ffba02 191px)"></i><i style="top:242px;left:1514px;width:191px;background:linear-gradient(90deg,#e7fe19 0,#fefe15 41px,#feda0b 111px,#ffb902 191px)"></i><i style="top:243px;left:1514px;width:191px;background:linear-gradient(90deg,#e7fe1a 0,#fefe15 41px,#feda0b 111px,#ffb902 191px)"></i><i style="top:244px;left:1514px;width:191px;background:linear-gradient(90deg,#e7fe1a 0,#fefe15 40px,#fed90b 111px,#ffb902 191px)"></i><i style="top:245px;left:1514px;width:191px;background:linear-gradient(90deg,#e8fe1a 0,#fefe15 40px,#fed90b 111px,#ffb902 191px)"></i><i style="top:246px;left:1514px;width:191px;background:linear-gradient(90deg,#e8fe1a 0,#fefe16 39px,#fed90b 110px,#ffb802 191px)"></i><i style="top:247px;left:1514px;width:191px;background:linear-gradient(90deg,#e8fe1a 0,#fefe16 38px,#fed90c 110px,#ffb802 191px)"></i></div>
<svg width="1716" height="950" viewBox="0 0 1716 950"><defs><clipPath id="cpi"><rect x="1514.2" y="45.8" width="190.8" height="201.8"/></clipPath></defs>
<g clip-path="url(#cpi)"><path d="M1494.2 49.9229L1725 243.477L1725 25.8L1494.2 25.8Z" fill="#000" fill-opacity="0.380" filter="url(#bl1)"/></g>
<rect x="1514.6" y="46.3" width="190" height="201" fill="none" stroke="#a9a98c" stroke-width="1.3"/>
<rect x="1602" y="138.8" width="15.6" height="16.3" fill="none" stroke="#fff" stroke-opacity=".92" stroke-width="1.5"/>
<circle cx="1601.7" cy="120.3" r="4.9" fill="#beb414" stroke="#0c0c0c" stroke-width="1.2"/></svg>
</body></html>
